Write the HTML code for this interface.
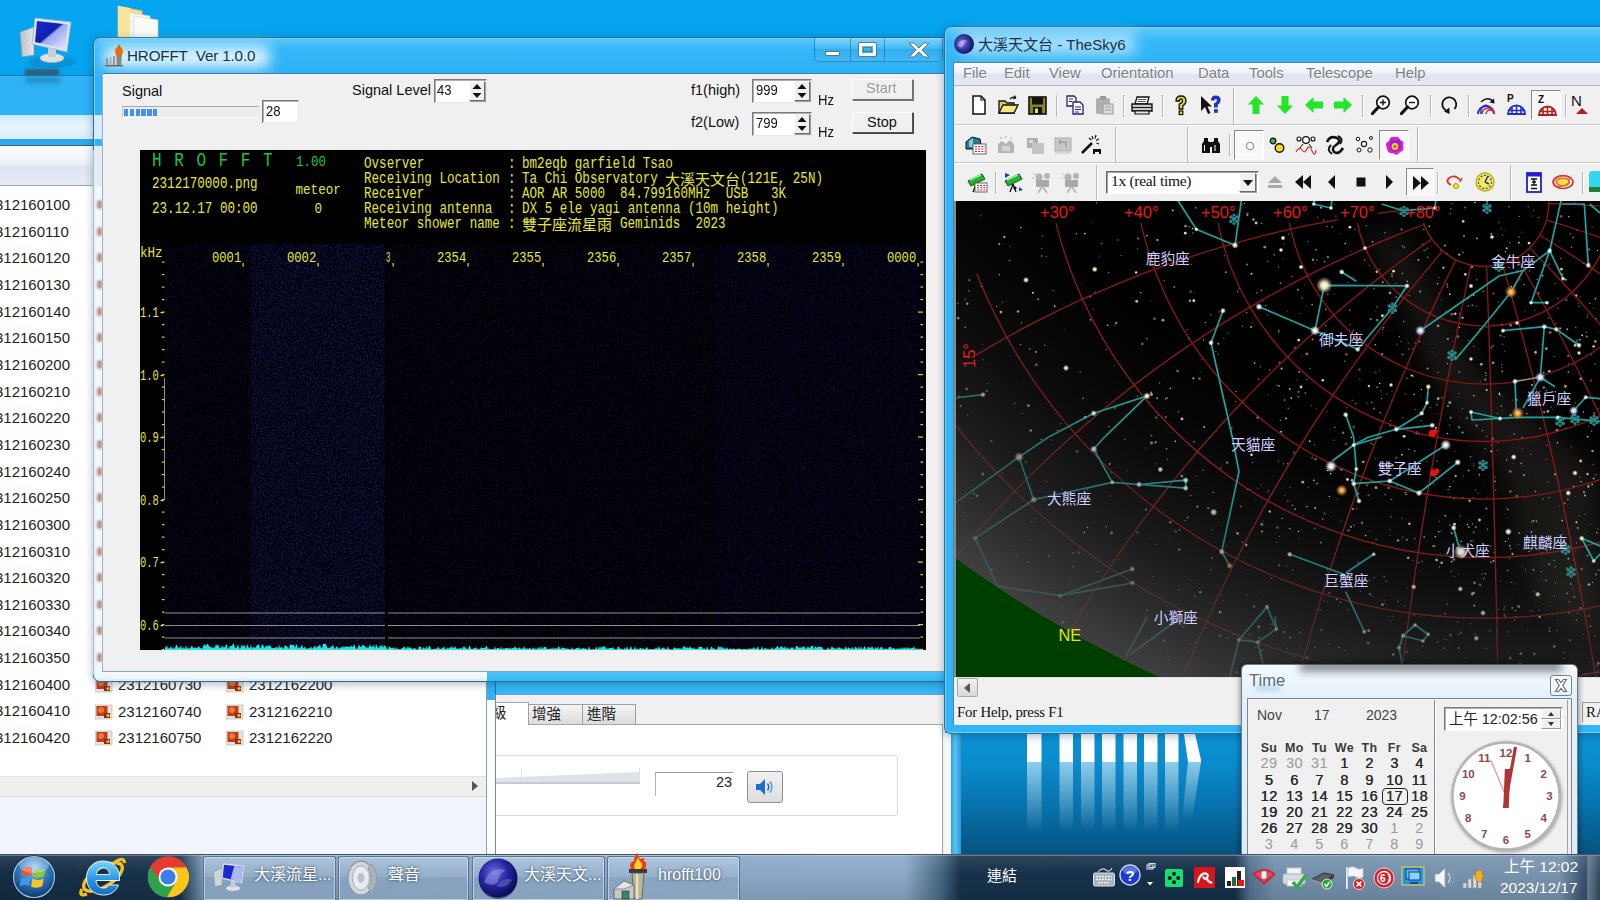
<!DOCTYPE html>
<html lang="zh-Hant">
<head>
<meta charset="utf-8">
<title>Desktop</title>
<style>
*{box-sizing:border-box;margin:0;padding:0}
html,body{width:1600px;height:900px;overflow:hidden}
body{position:relative;background:#05a4ee;font-family:"Liberation Sans","Noto Sans CJK TC",sans-serif;font-size:12px;color:#000}
.abs{position:absolute}
div,span,svg{position:absolute}
.t{white-space:nowrap;line-height:1}
/* generic window frame */
.win{border:1px solid #2a6f96;border-radius:7px;background:#36b6f6;box-shadow:0 0 0 1px rgba(255,255,255,.35) inset,0 2px 8px rgba(0,40,80,.35)}
.client{background:#f0f0f0;border:1px solid #4d86a8}
.sunken{background:#fff;border:1px solid;border-color:#7a7a7a #e8e8e8 #e8e8e8 #7a7a7a;box-shadow:1px 1px 0 #b0b0b0 inset}
.raised{background:#f0f0f0;border:1px solid;border-color:#fff #6d6d6d #6d6d6d #fff;box-shadow:1px 1px 0 #a0a0a0}
.g{font-family:"Liberation Sans","Noto Sans CJK JP",sans-serif}
.mono{font-family:"Liberation Mono","Noto Sans CJK TC",monospace}
.serif{font-family:"Liberation Serif","Noto Serif CJK SC",serif}
</style>
</head>
<body>
<!-- ===== Desktop ===== -->
<div id="desk" style="left:0;top:0;width:1600px;height:900px;background:linear-gradient(#05a4ee 0,#05a4ee 620px,#0b93d6 733px,#0a8bcc 765px,#0873ad 805px,#064f7c 858px,#064f7c 900px)"></div>
<!-- computer icon -->
<svg style="left:14px;top:12px" width="66" height="62" viewBox="0 0 66 62">
  <defs>
    <linearGradient id="scr" x1="0" y1="0" x2="1" y2="1"><stop offset="0" stop-color="#1a2ad0"/><stop offset=".45" stop-color="#1020b0"/><stop offset=".5" stop-color="#9aa8f0"/><stop offset="1" stop-color="#e8ecff"/></linearGradient>
    <linearGradient id="twr" x1="0" y1="0" x2="1" y2="0"><stop offset="0" stop-color="#b9c0c8"/><stop offset="1" stop-color="#e6e8ea"/></linearGradient>
  </defs>
  <ellipse cx="38" cy="50" rx="24" ry="6" fill="#0a7fc0" opacity=".5"/>
  <polygon points="6,20 20,15 20,43 8,45" fill="url(#twr)" stroke="#8d98a5" stroke-width=".8"/>
  <ellipse cx="38" cy="46" rx="12" ry="4.5" fill="#dfe3e6" stroke="#a9b1b8" stroke-width=".8"/>
  <rect x="34" y="36" width="8" height="9" fill="#c9ced3"/>
  <polygon points="21,6 57,10 53,40 18,32" fill="#dfe6f2" stroke="#9fb0c8" stroke-width=".8"/>
  <polygon points="23,9 54,12.5 51,37 21,30" fill="url(#scr)"/>
</svg>
<div style="left:25px;top:69px;width:34px;height:7px;background:#3b4a55;filter:blur(1.5px);opacity:.75"></div>
<!-- folder icon -->
<svg style="left:112px;top:2px" width="52" height="40" viewBox="0 0 52 40">
  <polygon points="6,4 30,9 30,40 6,40" fill="#f6dc8a" stroke="#e2c367" stroke-width=".8"/>
  <polygon points="14,10 38,14 38,40 14,40" fill="#f4f4f0" stroke="#d5d5cf" stroke-width=".6"/>
  <polygon points="22,14 46,18 46,40 22,40" fill="#fbfbf8" stroke="#d5d5cf" stroke-width=".6"/>
  <polygon points="6,4 18,6 18,40 6,40" fill="#f8e49c"/>
</svg>
<!-- wallpaper lower right -->
<svg style="left:1020px;top:720px" width="200" height="130" viewBox="0 0 200 130">
  <defs>
    <linearGradient id="refl" x1="0" y1="0" x2="0" y2="1"><stop offset="0" stop-color="#fff" stop-opacity=".55"/><stop offset="1" stop-color="#fff" stop-opacity="0"/></linearGradient>
  </defs>
  <g fill="#fff">
    <rect x="7" y="0" width="14.5" height="42"/><rect x="39.5" y="0" width="13.5" height="42"/><rect x="61" y="0" width="13.5" height="42"/><rect x="82" y="0" width="13.5" height="42"/><rect x="103.5" y="0" width="13.5" height="42"/><rect x="124" y="0" width="13.5" height="42"/><rect x="145" y="0" width="13.5" height="42"/>
    <polygon points="162,0 172,0 181,40 181,42 168,42"/>
  </g>
  <g fill="url(#refl)">
    <rect x="7" y="42" width="14.5" height="70"/><rect x="39.5" y="42" width="13.5" height="70"/><rect x="61" y="42" width="13.5" height="70"/><rect x="82" y="42" width="13.5" height="70"/><rect x="103.5" y="42" width="13.5" height="70"/><rect x="124" y="42" width="13.5" height="70"/><rect x="145" y="42" width="13.5" height="70"/>
    <polygon points="168,42 181,42 172,100 162,100"/>
  </g>
</svg>
<!-- ===== Sound dialog (behind explorer) ===== -->
<div id="snd" style="left:487px;top:681px;width:466px;height:180px;background:#35b8f7;border-top:1px solid #2a7fae"></div>
<div style="left:495px;top:694px;width:450px;height:165px;background:#f0f0f0;border-top:1px solid #7a9db5"></div>
<div style="left:495px;top:724px;width:448px;height:135px;background:#fff;border-top:1px solid #a6a6a6;border-right:1px solid #a6a6a6"></div>
<div style="left:945px;top:733px;width:6px;height:122px;background:#f4f8fb"></div>
<div style="left:951px;top:733px;width:10px;height:122px;background:linear-gradient(90deg,#2c9edb,#58c2f5 40%,#2a9cd8)"></div>
<!-- tabs -->
<div style="left:495px;top:702px;width:34px;height:23px;background:#fff;border:1px solid #a6a6a6;border-bottom:none"></div>
<div class="t" style="left:492px;top:706px;font-size:14.5px;color:#222">級</div>
<div style="left:528px;top:704px;width:55px;height:20px;background:linear-gradient(#f4f4f4,#dcdcdc);border:1px solid #a0a0a0;border-bottom:none"></div>
<div class="t" style="left:532px;top:707px;font-size:14.5px;color:#222">增強</div>
<div style="left:582px;top:704px;width:54px;height:20px;background:linear-gradient(#f4f4f4,#dcdcdc);border:1px solid #a0a0a0;border-bottom:none"></div>
<div class="t" style="left:587px;top:707px;font-size:14.5px;color:#222">進階</div>
<!-- group box -->
<div style="left:480px;top:755px;width:418px;height:61px;border:1px solid #dcdcdc;border-radius:3px"></div>
<svg style="left:495px;top:766px" width="150" height="24" viewBox="0 0 150 24"><polygon points="0,12 145,6 145,16 0,16" fill="#dde3e8"/><rect x="0" y="16" width="145" height="2" fill="#c4ccd2"/><rect x="26" y="3" width="1" height="10" fill="#dde3e8"/><rect x="144" y="2" width="1" height="12" fill="#dde3e8"/></svg>
<div style="left:655px;top:772px;width:78px;height:24px;background:#fff;border-top:1px solid #9a9a9a;border-left:1px solid #b5b5b5"></div>
<div class="t" style="left:716px;top:775px;font-size:14.5px;color:#222">23</div>
<div style="left:747px;top:771px;width:36px;height:32px;background:linear-gradient(#f2f2f2,#dddddd);border:1px solid #8e8f8f;border-radius:3px"></div>
<svg style="left:754px;top:777px" width="22" height="20" viewBox="0 0 22 20"><polygon points="2,7 6,7 11,2 11,18 6,13 2,13" fill="#1c6fd0"/><path d="M13.5 6.5 Q16 10 13.5 13.5" stroke="#1c6fd0" stroke-width="1.6" fill="none"/><path d="M16 4.5 Q20 10 16 15.5" stroke="#4a93e6" stroke-width="1.4" fill="none"/></svg>

<!-- ===== Explorer window (left) ===== -->
<div id="exp" style="left:-20px;top:75px;width:516px;height:800px;background:#2fb2f6;border:1px solid #1d74a6;border-radius:7px"></div>
<div id="lblshadow" style="left:26px;top:77px;width:34px;height:6px;background:#1a6a9a;filter:blur(2.5px);opacity:.55"></div>
<div style="left:0;top:115px;width:487px;height:24px;background:linear-gradient(#cfeafb,#e9f5fd 50%,#d6edfb)"></div>
<div style="left:0;top:139px;width:487px;height:6px;background:#2fa9ea"></div>
<div style="left:0;top:145px;width:487px;height:1px;background:#3a5f7a"></div>
<div style="left:0;top:146px;width:487px;height:39px;background:linear-gradient(#fbfcfe,#eef1f8 45%,#dfe5f2 55%,#e6ebf5)"></div>
<div style="left:0;top:185px;width:487px;height:1px;background:#9aa5b8"></div>
<div style="left:0;top:186px;width:487px;height:590px;background:#fff"></div>
<div style="left:487px;top:700px;width:8px;height:160px;background:#fbfdff"></div>
<div style="left:495px;top:694px;width:1px;height:166px;background:#6d8aa0"></div>
<!-- h-scrollbar -->
<div style="left:0;top:776px;width:487px;height:21px;background:#efefef;border-top:1px solid #e3e3e3;border-bottom:1px solid #dcdcdc"></div>
<svg style="left:470px;top:780px" width="10" height="12"><polygon points="2,1 8,6 2,11" fill="#555"/></svg>
<!-- details pane -->
<div style="left:0;top:797px;width:487px;height:63px;background:#f1f5fb"></div>
<div style="left:486px;top:186px;width:1px;height:674px;background:#8aa2b5"></div>
<div class="t" style="left:-13.4px;top:197.0px;font-size:15px;color:#1e1e1e">2312160100</div>
<div class="t" style="left:-13.4px;top:223.7px;font-size:15px;color:#1e1e1e">2312160110</div>
<div class="t" style="left:-13.4px;top:250.3px;font-size:15px;color:#1e1e1e">2312160120</div>
<div class="t" style="left:-13.4px;top:276.9px;font-size:15px;color:#1e1e1e">2312160130</div>
<div class="t" style="left:-13.4px;top:303.6px;font-size:15px;color:#1e1e1e">2312160140</div>
<div class="t" style="left:-13.4px;top:330.2px;font-size:15px;color:#1e1e1e">2312160150</div>
<div class="t" style="left:-13.4px;top:356.9px;font-size:15px;color:#1e1e1e">2312160200</div>
<div class="t" style="left:-13.4px;top:383.5px;font-size:15px;color:#1e1e1e">2312160210</div>
<div class="t" style="left:-13.4px;top:410.2px;font-size:15px;color:#1e1e1e">2312160220</div>
<div class="t" style="left:-13.4px;top:436.9px;font-size:15px;color:#1e1e1e">2312160230</div>
<div class="t" style="left:-13.4px;top:463.5px;font-size:15px;color:#1e1e1e">2312160240</div>
<div class="t" style="left:-13.4px;top:490.1px;font-size:15px;color:#1e1e1e">2312160250</div>
<div class="t" style="left:-13.4px;top:516.8px;font-size:15px;color:#1e1e1e">2312160300</div>
<div class="t" style="left:-13.4px;top:543.5px;font-size:15px;color:#1e1e1e">2312160310</div>
<div class="t" style="left:-13.4px;top:570.1px;font-size:15px;color:#1e1e1e">2312160320</div>
<div class="t" style="left:-13.4px;top:596.8px;font-size:15px;color:#1e1e1e">2312160330</div>
<div class="t" style="left:-13.4px;top:623.4px;font-size:15px;color:#1e1e1e">2312160340</div>
<div class="t" style="left:-13.4px;top:650.0px;font-size:15px;color:#1e1e1e">2312160350</div>
<div class="t" style="left:-13.4px;top:676.7px;font-size:15px;color:#1e1e1e">2312160400</div>
<div class="t" style="left:-13.4px;top:703.3px;font-size:15px;color:#1e1e1e">2312160410</div>
<div class="t" style="left:-13.4px;top:730.0px;font-size:15px;color:#1e1e1e">2312160420</div>
<svg style="left:95px;top:677.0px" width="18" height="16" viewBox="0 0 18 16"><rect x="0" y="1" width="17" height="14" fill="#e9e4da" stroke="#b9b0a0" stroke-width=".6"/><rect x="1.5" y="2" width="11" height="10" fill="#c0392b"/><circle cx="6" cy="6" r="3" fill="#e67e22"/><rect x="9" y="9" width="6" height="5" fill="#8e2b1e"/><circle cx="13" cy="11.5" r="1.6" fill="#f1c40f"/></svg>
<div class="t" style="left:118px;top:677.0px;font-size:15px;color:#1e1e1e">2312160730</div>
<svg style="left:226px;top:677.0px" width="18" height="16" viewBox="0 0 18 16"><rect x="0" y="1" width="17" height="14" fill="#e9e4da" stroke="#b9b0a0" stroke-width=".6"/><rect x="1.5" y="2" width="11" height="10" fill="#c0392b"/><circle cx="6" cy="6" r="3" fill="#e67e22"/><rect x="9" y="9" width="6" height="5" fill="#8e2b1e"/><circle cx="13" cy="11.5" r="1.6" fill="#f1c40f"/></svg>
<div class="t" style="left:249px;top:677.0px;font-size:15px;color:#1e1e1e">2312162200</div>
<svg style="left:95px;top:703.6px" width="18" height="16" viewBox="0 0 18 16"><rect x="0" y="1" width="17" height="14" fill="#e9e4da" stroke="#b9b0a0" stroke-width=".6"/><rect x="1.5" y="2" width="11" height="10" fill="#c0392b"/><circle cx="6" cy="6" r="3" fill="#e67e22"/><rect x="9" y="9" width="6" height="5" fill="#8e2b1e"/><circle cx="13" cy="11.5" r="1.6" fill="#f1c40f"/></svg>
<div class="t" style="left:118px;top:703.6px;font-size:15px;color:#1e1e1e">2312160740</div>
<svg style="left:226px;top:703.6px" width="18" height="16" viewBox="0 0 18 16"><rect x="0" y="1" width="17" height="14" fill="#e9e4da" stroke="#b9b0a0" stroke-width=".6"/><rect x="1.5" y="2" width="11" height="10" fill="#c0392b"/><circle cx="6" cy="6" r="3" fill="#e67e22"/><rect x="9" y="9" width="6" height="5" fill="#8e2b1e"/><circle cx="13" cy="11.5" r="1.6" fill="#f1c40f"/></svg>
<div class="t" style="left:249px;top:703.6px;font-size:15px;color:#1e1e1e">2312162210</div>
<svg style="left:95px;top:730.3px" width="18" height="16" viewBox="0 0 18 16"><rect x="0" y="1" width="17" height="14" fill="#e9e4da" stroke="#b9b0a0" stroke-width=".6"/><rect x="1.5" y="2" width="11" height="10" fill="#c0392b"/><circle cx="6" cy="6" r="3" fill="#e67e22"/><rect x="9" y="9" width="6" height="5" fill="#8e2b1e"/><circle cx="13" cy="11.5" r="1.6" fill="#f1c40f"/></svg>
<div class="t" style="left:118px;top:730.3px;font-size:15px;color:#1e1e1e">2312160750</div>
<svg style="left:226px;top:730.3px" width="18" height="16" viewBox="0 0 18 16"><rect x="0" y="1" width="17" height="14" fill="#e9e4da" stroke="#b9b0a0" stroke-width=".6"/><rect x="1.5" y="2" width="11" height="10" fill="#c0392b"/><circle cx="6" cy="6" r="3" fill="#e67e22"/><rect x="9" y="9" width="6" height="5" fill="#8e2b1e"/><circle cx="13" cy="11.5" r="1.6" fill="#f1c40f"/></svg>
<div class="t" style="left:249px;top:730.3px;font-size:15px;color:#1e1e1e">2312162220</div>
<!-- ===== HROFFT window ===== -->
<div id="hro" class="win" style="left:93px;top:37px;width:862px;height:645px;background:#30b4f7"></div>
<div style="left:95px;top:39px;width:858px;height:34px;border-radius:6px 6px 0 0;background:linear-gradient(#5ac6fa 0,#36b7f8 30%,#2db2f6 100%)"></div>
<div style="left:104px;top:46px;width:165px;height:22px;background:#fff;filter:blur(7px);opacity:.85"></div>
<!-- glass frame showing what is behind -->
<div style="left:94px;top:115px;width:8px;height:24px;background:#d6ecfa"></div>
<div style="left:94px;top:146px;width:8px;height:40px;background:#e6ecf6"></div>
<div style="left:94px;top:186px;width:8px;height:488px;background:linear-gradient(90deg,#e4eef6,#f6f9fb 40%,#f3f7fa)"></div>
<div style="left:94px;top:672px;width:393px;height:9px;border-radius:0 0 0 6px;background:linear-gradient(#f5f8fa,#f0f5f9 60%,#dfe9f1)"></div>
<div style="left:487px;top:672px;width:460px;height:9px;background:linear-gradient(#4cc3f9,#33b6f6)"></div>
<div class="peek" style="left:96.5px;top:200.0px;width:5px;height:9px;background:#a87868;border-radius:3px;filter:blur(1.2px);opacity:.8"></div>
<div class="peek" style="left:96.5px;top:226.7px;width:5px;height:9px;background:#a87868;border-radius:3px;filter:blur(1.2px);opacity:.8"></div>
<div class="peek" style="left:96.5px;top:253.3px;width:5px;height:9px;background:#a87868;border-radius:3px;filter:blur(1.2px);opacity:.8"></div>
<div class="peek" style="left:96.5px;top:279.9px;width:5px;height:9px;background:#a87868;border-radius:3px;filter:blur(1.2px);opacity:.8"></div>
<div class="peek" style="left:96.5px;top:306.6px;width:5px;height:9px;background:#a87868;border-radius:3px;filter:blur(1.2px);opacity:.8"></div>
<div class="peek" style="left:96.5px;top:333.2px;width:5px;height:9px;background:#a87868;border-radius:3px;filter:blur(1.2px);opacity:.8"></div>
<div class="peek" style="left:96.5px;top:359.9px;width:5px;height:9px;background:#a87868;border-radius:3px;filter:blur(1.2px);opacity:.8"></div>
<div class="peek" style="left:96.5px;top:386.5px;width:5px;height:9px;background:#a87868;border-radius:3px;filter:blur(1.2px);opacity:.8"></div>
<div class="peek" style="left:96.5px;top:413.2px;width:5px;height:9px;background:#a87868;border-radius:3px;filter:blur(1.2px);opacity:.8"></div>
<div class="peek" style="left:96.5px;top:439.9px;width:5px;height:9px;background:#a87868;border-radius:3px;filter:blur(1.2px);opacity:.8"></div>
<div class="peek" style="left:96.5px;top:466.5px;width:5px;height:9px;background:#a87868;border-radius:3px;filter:blur(1.2px);opacity:.8"></div>
<div class="peek" style="left:96.5px;top:493.1px;width:5px;height:9px;background:#a87868;border-radius:3px;filter:blur(1.2px);opacity:.8"></div>
<div class="peek" style="left:96.5px;top:519.8px;width:5px;height:9px;background:#a87868;border-radius:3px;filter:blur(1.2px);opacity:.8"></div>
<div class="peek" style="left:96.5px;top:546.5px;width:5px;height:9px;background:#a87868;border-radius:3px;filter:blur(1.2px);opacity:.8"></div>
<div class="peek" style="left:96.5px;top:573.1px;width:5px;height:9px;background:#a87868;border-radius:3px;filter:blur(1.2px);opacity:.8"></div>
<div class="peek" style="left:96.5px;top:599.8px;width:5px;height:9px;background:#a87868;border-radius:3px;filter:blur(1.2px);opacity:.8"></div>
<div class="peek" style="left:96.5px;top:626.4px;width:5px;height:9px;background:#a87868;border-radius:3px;filter:blur(1.2px);opacity:.8"></div>
<div class="peek" style="left:96.5px;top:653.0px;width:5px;height:9px;background:#a87868;border-radius:3px;filter:blur(1.2px);opacity:.8"></div>
<div id="edgeL" style="left:93px;top:150px;width:1px;height:525px;background:#a9bfce"></div>
<div style="left:100px;top:672.5px;width:390px;height:1px;background:transparent"></div>
<!-- app icon -->
<svg style="left:104px;top:44px" width="22" height="24" viewBox="0 0 22 24"><rect x="2" y="14" width="2" height="8" fill="#9a9a8a"/><rect x="5.5" y="13" width="2" height="9" fill="#b0b0a0"/><rect x="9" y="12" width="2" height="10" fill="#9a9a8a"/><polygon points="12,10 18,10 17,22 13,22" fill="#8a8878"/><ellipse cx="15" cy="7.5" rx="4" ry="4.5" fill="#f26a10"/><polygon points="15,0 17,4 13,4" fill="#e85a00"/><rect x="1" y="21" width="18" height="1.5" fill="#6a6a60"/></svg>
<div class="t" style="left:127px;top:48px;font-size:15.2px;color:#17324a;letter-spacing:-.15px">HROFFT&nbsp; Ver 1.0.0</div>
<!-- caption buttons -->
<div style="left:814px;top:38px;width:129px;height:24px;border:1px solid rgba(20,90,140,.55);border-top:none;border-radius:0 0 5px 5px;background:linear-gradient(rgba(255,255,255,.22),rgba(255,255,255,.05) 45%,rgba(0,80,140,.08) 50%,rgba(255,255,255,.08))"></div>
<div style="left:850px;top:38px;width:1px;height:23px;background:rgba(20,90,140,.5)"></div>
<div style="left:884px;top:38px;width:1px;height:23px;background:rgba(20,90,140,.5)"></div>
<div style="left:825px;top:51px;width:15px;height:5px;background:#fff;border:1px solid #5a7890;border-radius:1px"></div>
<div style="left:859px;top:43px;width:17px;height:13px;background:transparent;border:3.5px solid #fff;outline:1px solid #5a7890;border-radius:1px"></div>
<div style="left:863px;top:47px;width:9px;height:5px;border:1px solid #5a7890"></div>
<svg style="left:905px;top:41px" width="28" height="18" viewBox="0 0 28 18"><path d="M4 2 L9 2 L14 7 L19 2 L24 2 L17 9 L24 16 L19 16 L14 11 L9 16 L4 16 L11 9 Z" fill="#fff" stroke="#5a7890" stroke-width="1"/></svg>
<!-- client -->
<div class="client" style="left:102px;top:73px;width:845px;height:599px;border-color:#3e7ea5 #3e7ea5 #8aa6ba #9ab2c4"></div>
<!-- controls row -->
<div class="t g" style="left:122px;top:84px;font-size:14.5px;color:#111">Signal</div>
<div style="left:122px;top:106px;width:137px;height:12px;border-top:1px solid #a8a8a8;border-left:1px solid #c8c8c8;border-bottom:1px solid #fff;background:#ececec"></div>
<div style="left:124px;top:109px;width:34.5px;height:7px;background:repeating-linear-gradient(90deg,#4690f0 0,#4690f0 4.3px,#e8eefc 4.3px,#e8eefc 5.8px)"></div>
<div class="sunken" style="left:262px;top:100px;width:37px;height:23px"></div>
<div class="t g" style="left:266px;top:104px;font-size:14.5px;color:#111;transform:scaleX(.9);transform-origin:left">28</div>
<div class="t g" style="left:352px;top:83px;font-size:14.5px;color:#111">Signal Level</div>
<div class="sunken" style="left:434px;top:79px;width:53px;height:24px"></div>
<div class="t g" style="left:437px;top:83px;font-size:14.5px;color:#111;transform:scaleX(.9);transform-origin:left">43</div>
<div class="raised" style="left:469px;top:81px;width:16px;height:20px"></div>
<svg style="left:471px;top:83px" width="12" height="16"><polygon points="6,1 10.5,6 1.5,6" fill="#111"/><polygon points="6,15 10.5,10 1.5,10" fill="#111"/></svg>

<div class="t g" style="left:691px;top:83px;font-size:14.5px;color:#111">f1(high)</div>
<div class="sunken" style="left:752px;top:79px;width:60px;height:24px"></div>
<div class="t g" style="left:756px;top:83px;font-size:14.5px;color:#111;transform:scaleX(.9);transform-origin:left">999</div>
<div class="raised" style="left:794px;top:81px;width:16px;height:20px"></div>
<svg style="left:796px;top:83px" width="12" height="16"><polygon points="6,1 10.5,6 1.5,6" fill="#111"/><polygon points="6,15 10.5,10 1.5,10" fill="#111"/></svg>
<div class="t g" style="left:818px;top:93px;font-size:14.5px;color:#111;transform:scaleX(.9);transform-origin:left">Hz</div>

<div class="t g" style="left:691px;top:115px;font-size:14.5px;color:#111">f2(Low)</div>
<div class="sunken" style="left:752px;top:112px;width:60px;height:24px"></div>
<div class="t g" style="left:756px;top:116px;font-size:14.5px;color:#111;transform:scaleX(.9);transform-origin:left">799</div>
<div class="raised" style="left:794px;top:114px;width:16px;height:20px"></div>
<svg style="left:796px;top:116px" width="12" height="16"><polygon points="6,1 10.5,6 1.5,6" fill="#111"/><polygon points="6,15 10.5,10 1.5,10" fill="#111"/></svg>
<div class="t g" style="left:818px;top:125px;font-size:14.5px;color:#111;transform:scaleX(.9);transform-origin:left">Hz</div>

<div class="raised" style="left:852px;top:79px;width:61px;height:21px;box-shadow:1px 1px 0 #777"></div>
<div class="t g" style="left:866px;top:81px;font-size:14.5px;color:#9a9a9a;text-shadow:1px 1px 0 #fff">Start</div>
<div class="raised" style="left:852px;top:112px;width:61px;height:21px;box-shadow:1px 1px 0 #444;border-color:#fff #555 #555 #fff"></div>
<div class="t g" style="left:867px;top:115px;font-size:14.5px;color:#111">Stop</div>
<!-- spectrogram -->
<svg style="left:140px;top:150px" width="786" height="500" viewBox="0 0 786 500">
<defs>
<filter id="nz1" x="0" y="0" width="100%" height="100%" color-interpolation-filters="sRGB"><feTurbulence type="fractalNoise" baseFrequency="0.6" numOctaves="2" seed="3"/><feColorMatrix type="matrix" values="0.1 0 0 0 -0.045  0.1 0 0 0 -0.045  0.95 0 0 0 -0.47  0 0 0 0 1"/><feGaussianBlur stdDeviation="0.6"/></filter>
<filter id="nz2" x="0" y="0" width="100%" height="100%" color-interpolation-filters="sRGB"><feTurbulence type="fractalNoise" baseFrequency="0.6" numOctaves="2" seed="11"/><feColorMatrix type="matrix" values="0.1 0 0 0 -0.045  0.1 0 0 0 -0.045  0.9 0 0 0 -0.45  0 0 0 0 1"/><feGaussianBlur stdDeviation="0.6"/></filter>
<filter id="nz3" x="0" y="0" width="100%" height="100%" color-interpolation-filters="sRGB"><feTurbulence type="fractalNoise" baseFrequency="0.6" numOctaves="2" seed="5"/><feColorMatrix type="matrix" values="0.18 0 0 0 -0.07  0.18 0 0 0 -0.07  1.25 0 0 0 -0.535  0 0 0 0 1"/><feGaussianBlur stdDeviation="0.6"/></filter>
<filter id="nz4" x="0" y="0" width="100%" height="100%" color-interpolation-filters="sRGB"><feTurbulence type="fractalNoise" baseFrequency="0.6" numOctaves="2" seed="23"/><feColorMatrix type="matrix" values="0.1 0 0 0 -0.045  0.1 0 0 0 -0.045  1.0 0 0 0 -0.47  0 0 0 0 1"/><feGaussianBlur stdDeviation="0.6"/></filter>
</defs>
<rect width="786" height="500" fill="#000"/>
<rect x="25" y="94" width="86" height="401" filter="url(#nz1)"/>
<rect x="111" y="94" width="134" height="401" filter="url(#nz3)"/>
<rect x="248" y="94" width="325" height="401" filter="url(#nz2)"/>
<rect x="574" y="94" width="207" height="401" filter="url(#nz4)"/>
<rect x="24" y="228" width="1" height="122" fill="#909090"/>
<rect x="25" y="462.5" width="220" height="1" fill="#909090"/><rect x="248" y="462.5" width="532" height="1" fill="#909090"/>
<rect x="25" y="475.0" width="220" height="1" fill="#909090"/><rect x="248" y="475.0" width="532" height="1" fill="#909090"/>
<rect x="25" y="487.5" width="220" height="1" fill="#909090"/><rect x="248" y="487.5" width="532" height="1" fill="#909090"/>
<polygon points="25,500 25,496.0 26,498.0 27,495.0 28,499.0 29,498.0 30,498.0 31,496.0 32,499.0 33,497.0 34,499.0 35,498.0 36,495.0 37,495.0 38,498.0 39,497.0 40,498.0 41,495.0 42,499.0 43,498.0 44,497.0 45,499.0 46,495.0 47,499.0 48,497.0 49,499.0 50,498.0 51,497.0 52,495.0 53,498.0 54,498.0 55,497.0 56,498.0 57,498.0 58,497.0 59,496.0 60,498.0 61,498.0 62,499.0 63,497.0 64,494.0 65,495.0 66,496.0 67,494.0 68,494.0 69,496.0 70,497.0 71,497.0 72,498.0 73,497.0 74,498.0 75,497.0 76,494.0 77,496.0 78,494.0 79,497.0 80,498.0 81,498.0 82,495.0 83,498.0 84,496.0 85,498.0 86,494.0 87,495.0 88,499.0 89,498.0 90,496.0 91,496.0 92,496.0 93,494.0 94,494.0 95,498.0 96,498.0 97,497.0 98,494.0 99,498.0 100,499.0 101,497.0 102,494.0 103,497.0 104,495.0 105,496.0 106,499.0 107,494.0 108,496.0 109,498.0 110,498.0 111,494.0 112,499.0 113,497.0 114,497.0 115,498.0 116,497.0 117,495.0 118,495.0 119,494.0 120,498.0 121,498.0 122,494.0 123,495.0 124,497.0 125,498.0 126,495.0 127,497.0 128,495.0 129,496.0 130,495.0 131,497.0 132,498.0 133,498.0 134,498.0 135,498.0 136,497.0 137,497.0 138,499.0 139,494.0 140,498.0 141,497.0 142,497.0 143,499.0 144,498.0 145,495.0 146,496.0 147,496.0 148,498.0 149,499.0 150,494.0 151,495.0 152,495.0 153,495.0 154,495.0 155,498.0 156,494.0 157,495.0 158,499.0 159,497.0 160,498.0 161,497.0 162,494.0 163,498.0 164,498.0 165,496.0 166,499.0 167,498.0 168,499.0 169,498.0 170,498.0 171,496.0 172,499.0 173,498.0 174,497.0 175,495.0 176,498.0 177,497.0 178,496.0 179,496.0 180,494.0 181,498.0 182,498.0 183,494.0 184,494.0 185,494.0 186,494.0 187,497.0 188,498.0 189,498.0 190,498.0 191,496.0 192,497.0 193,494.0 194,498.0 195,499.0 196,497.0 197,496.0 198,498.0 199,499.0 200,497.0 201,498.0 202,497.0 203,496.0 204,498.0 205,496.0 206,497.0 207,496.0 208,497.0 209,497.0 210,497.0 211,495.0 212,497.0 213,497.0 214,494.0 215,496.0 216,499.0 217,499.0 218,497.0 219,494.0 220,497.0 221,497.0 222,496.0 223,494.0 224,496.0 225,496.0 226,498.0 227,497.0 228,498.0 229,497.0 230,494.0 231,497.0 232,496.0 233,497.0 234,494.0 235,499.0 236,494.0 237,496.0 238,498.0 239,498.0 240,495.0 241,497.0 242,494.0 243,498.0 244,495.0 245,496.0 246,497.0 247,499.0 248,499.5 249,496.0 250,497.0 251,498.0 252,498.0 253,498.0 254,497.0 255,499.5 256,497.0 257,499.0 258,499.0 259,499.0 260,499.5 261,499.0 262,498.0 263,498.0 264,496.0 265,497.0 266,499.0 267,498.0 268,496.0 269,498.0 270,498.0 271,497.0 272,499.0 273,499.0 274,498.0 275,498.0 276,499.0 277,499.5 278,499.5 279,496.0 280,497.0 281,497.0 282,499.5 283,498.0 284,497.0 285,499.0 286,498.0 287,496.0 288,499.0 289,496.0 290,496.0 291,499.0 292,499.5 293,499.0 294,499.0 295,499.0 296,498.0 297,499.0 298,496.0 299,498.0 300,499.0 301,499.0 302,498.0 303,498.0 304,496.0 305,499.0 306,499.5 307,497.0 308,499.0 309,498.0 310,497.0 311,498.0 312,496.0 313,498.0 314,498.0 315,496.0 316,498.0 317,499.0 318,498.0 319,499.0 320,498.0 321,498.0 322,499.5 323,496.0 324,498.0 325,496.0 326,499.0 327,498.0 328,499.5 329,496.0 330,496.0 331,499.0 332,499.0 333,499.0 334,498.0 335,498.0 336,497.0 337,499.5 338,498.0 339,499.5 340,499.0 341,497.0 342,498.0 343,498.0 344,498.0 345,498.0 346,496.0 347,496.0 348,499.5 349,498.0 350,499.5 351,499.0 352,499.0 353,499.0 354,499.5 355,496.0 356,499.5 357,498.0 358,498.0 359,498.0 360,499.5 361,496.0 362,499.5 363,498.0 364,499.0 365,498.0 366,498.0 367,498.0 368,498.0 369,499.0 370,497.0 371,499.0 372,498.0 373,498.0 374,498.0 375,496.0 376,498.0 377,498.0 378,499.0 379,497.0 380,498.0 381,499.0 382,498.0 383,499.0 384,496.0 385,498.0 386,499.0 387,498.0 388,499.5 389,498.0 390,498.0 391,499.0 392,499.5 393,497.0 394,499.0 395,498.0 396,499.5 397,499.0 398,497.0 399,499.0 400,496.0 401,499.5 402,496.0 403,499.0 404,497.0 405,497.0 406,497.0 407,499.0 408,499.0 409,499.0 410,499.0 411,498.0 412,499.0 413,497.0 414,499.5 415,498.0 416,498.0 417,499.0 418,497.0 419,496.0 420,499.0 421,499.0 422,497.0 423,498.0 424,498.0 425,498.0 426,499.0 427,498.0 428,499.0 429,499.0 430,499.0 431,499.5 432,497.0 433,499.0 434,499.5 435,499.0 436,498.0 437,498.0 438,498.0 439,497.0 440,499.5 441,498.0 442,499.0 443,498.0 444,498.0 445,499.0 446,498.0 447,499.5 448,499.5 449,496.0 450,499.0 451,499.5 452,499.5 453,499.0 454,499.0 455,499.5 456,496.0 457,499.0 458,499.0 459,496.0 460,499.0 461,496.0 462,498.0 463,496.0 464,497.0 465,496.0 466,499.0 467,498.0 468,499.0 469,498.0 470,498.0 471,498.0 472,498.0 473,497.0 474,499.0 475,499.5 476,499.0 477,499.5 478,496.0 479,497.0 480,499.0 481,498.0 482,499.5 483,499.0 484,499.5 485,497.0 486,499.5 487,496.0 488,499.0 489,499.5 490,498.0 491,496.0 492,499.0 493,499.5 494,499.0 495,496.0 496,499.5 497,498.0 498,499.5 499,499.0 500,498.0 501,498.0 502,499.0 503,498.0 504,499.0 505,499.5 506,498.0 507,497.0 508,499.0 509,499.5 510,499.0 511,499.0 512,499.5 513,499.0 514,499.0 515,499.0 516,497.0 517,499.0 518,498.0 519,496.0 520,499.0 521,499.0 522,498.0 523,498.0 524,497.0 525,499.0 526,499.0 527,499.0 528,496.0 529,499.5 530,499.0 531,499.5 532,499.5 533,499.5 534,497.0 535,498.0 536,498.0 537,499.0 538,498.0 539,498.0 540,499.0 541,498.0 542,499.5 543,497.0 544,496.0 545,497.0 546,498.0 547,497.0 548,498.0 549,498.0 550,496.0 551,498.0 552,498.0 553,499.0 554,497.0 555,499.0 556,499.0 557,499.0 558,499.0 559,496.0 560,497.0 561,497.0 562,497.0 563,499.0 564,498.0 565,499.0 566,499.5 567,496.0 568,499.0 569,499.5 570,499.5 571,497.0 572,497.0 573,499.0 574,498.0 575,499.0 576,499.5 577,499.5 578,497.0 579,496.0 580,498.0 581,496.0 582,498.0 583,497.0 584,499.0 585,498.0 586,499.0 587,497.0 588,499.0 589,499.5 590,498.0 591,499.0 592,499.0 593,499.0 594,498.0 595,499.5 596,499.0 597,499.0 598,499.0 599,498.0 600,499.0 601,499.0 602,499.5 603,499.0 604,499.0 605,499.0 606,499.0 607,499.5 608,499.0 609,498.0 610,499.5 611,498.0 612,499.0 613,498.0 614,497.0 615,499.0 616,499.0 617,498.0 618,496.0 619,499.5 620,499.5 621,499.0 622,496.0 623,499.5 624,499.0 625,498.0 626,498.0 627,499.5 628,498.0 629,499.5 630,499.0 631,499.0 632,497.0 633,499.0 634,499.5 635,498.0 636,498.0 637,496.0 638,496.0 639,499.0 640,497.0 641,497.0 642,496.0 643,498.0 644,498.0 645,496.0 646,499.0 647,497.0 648,498.0 649,499.0 650,499.0 651,497.0 652,498.0 653,497.0 654,499.0 655,499.5 656,496.0 657,496.0 658,497.0 659,498.0 660,497.0 661,498.0 662,497.0 663,497.0 664,496.0 665,498.0 666,499.0 667,498.0 668,496.0 669,498.0 670,498.0 671,496.0 672,496.0 673,496.0 674,499.5 675,496.0 676,497.0 677,498.0 678,496.0 679,497.0 680,497.0 681,497.0 682,497.0 683,499.0 684,499.5 685,499.5 686,499.5 687,499.0 688,497.0 689,499.0 690,499.5 691,498.0 692,496.0 693,498.0 694,498.0 695,499.5 696,497.0 697,499.5 698,497.0 699,498.0 700,497.0 701,499.0 702,498.0 703,499.0 704,499.5 705,498.0 706,496.0 707,499.5 708,497.0 709,498.0 710,498.0 711,499.5 712,497.0 713,498.0 714,499.5 715,497.0 716,497.0 717,498.0 718,499.0 719,496.0 720,499.5 721,496.0 722,499.0 723,499.0 724,497.0 725,496.0 726,499.0 727,499.0 728,497.0 729,497.0 730,498.0 731,498.0 732,496.0 733,498.0 734,499.5 735,498.0 736,497.0 737,499.0 738,496.0 739,499.5 740,498.0 741,497.0 742,497.0 743,499.0 744,499.5 745,498.0 746,499.0 747,499.0 748,499.0 749,497.0 750,497.0 751,497.0 752,499.0 753,498.0 754,498.0 755,499.0 756,499.5 757,498.0 758,499.5 759,498.0 760,499.0 761,497.0 762,499.5 763,497.0 764,499.0 765,497.0 766,498.0 767,499.0 768,497.0 769,498.0 770,499.0 771,498.0 772,498.0 773,498.0 774,496.0 775,499.5 776,498.0 777,499.0 778,499.0 779,499.5 780,498.0 781,499.5 781,500" fill="#19e6e6"/>
<rect x="22" y="111.5" width="2.5" height="1.2" fill="#d8d820"/><rect x="22" y="124.0" width="2.5" height="1.2" fill="#d8d820"/><rect x="22" y="136.5" width="2.5" height="1.2" fill="#d8d820"/><rect x="22" y="149.0" width="2.5" height="1.2" fill="#d8d820"/><rect x="22" y="161.5" width="2.5" height="1.2" fill="#d8d820"/><rect x="22" y="174.0" width="2.5" height="1.2" fill="#d8d820"/><rect x="22" y="186.5" width="2.5" height="1.2" fill="#d8d820"/><rect x="22" y="199.0" width="2.5" height="1.2" fill="#d8d820"/><rect x="22" y="211.5" width="2.5" height="1.2" fill="#d8d820"/><rect x="22" y="224.0" width="2.5" height="1.2" fill="#d8d820"/><rect x="22" y="236.5" width="2.5" height="1.2" fill="#d8d820"/><rect x="22" y="249.0" width="2.5" height="1.2" fill="#d8d820"/><rect x="22" y="261.5" width="2.5" height="1.2" fill="#d8d820"/><rect x="22" y="274.0" width="2.5" height="1.2" fill="#d8d820"/><rect x="22" y="286.5" width="2.5" height="1.2" fill="#d8d820"/><rect x="22" y="299.0" width="2.5" height="1.2" fill="#d8d820"/><rect x="22" y="311.5" width="2.5" height="1.2" fill="#d8d820"/><rect x="22" y="324.0" width="2.5" height="1.2" fill="#d8d820"/><rect x="22" y="336.5" width="2.5" height="1.2" fill="#d8d820"/><rect x="22" y="349.0" width="2.5" height="1.2" fill="#d8d820"/><rect x="22" y="361.5" width="2.5" height="1.2" fill="#d8d820"/><rect x="22" y="374.0" width="2.5" height="1.2" fill="#d8d820"/><rect x="22" y="386.5" width="2.5" height="1.2" fill="#d8d820"/><rect x="22" y="399.0" width="2.5" height="1.2" fill="#d8d820"/><rect x="22" y="411.5" width="2.5" height="1.2" fill="#d8d820"/><rect x="22" y="424.0" width="2.5" height="1.2" fill="#d8d820"/><rect x="22" y="436.5" width="2.5" height="1.2" fill="#d8d820"/><rect x="22" y="449.0" width="2.5" height="1.2" fill="#d8d820"/><rect x="22" y="461.5" width="2.5" height="1.2" fill="#d8d820"/><rect x="22" y="474.0" width="2.5" height="1.2" fill="#d8d820"/><rect x="22" y="486.5" width="2.5" height="1.2" fill="#d8d820"/><rect x="22" y="499.0" width="2.5" height="1.2" fill="#d8d820"/><rect x="780.5" y="111.5" width="2.5" height="1.2" fill="#d8d820"/><rect x="780.5" y="124.0" width="2.5" height="1.2" fill="#d8d820"/><rect x="780.5" y="136.5" width="2.5" height="1.2" fill="#d8d820"/><rect x="780.5" y="149.0" width="2.5" height="1.2" fill="#d8d820"/><rect x="778.0" y="161.5" width="5.0" height="1.2" fill="#d8d820"/><rect x="780.5" y="174.0" width="2.5" height="1.2" fill="#d8d820"/><rect x="780.5" y="186.5" width="2.5" height="1.2" fill="#d8d820"/><rect x="780.5" y="199.0" width="2.5" height="1.2" fill="#d8d820"/><rect x="780.5" y="211.5" width="2.5" height="1.2" fill="#d8d820"/><rect x="778.0" y="224.0" width="5.0" height="1.2" fill="#d8d820"/><rect x="780.5" y="236.5" width="2.5" height="1.2" fill="#d8d820"/><rect x="780.5" y="249.0" width="2.5" height="1.2" fill="#d8d820"/><rect x="780.5" y="261.5" width="2.5" height="1.2" fill="#d8d820"/><rect x="780.5" y="274.0" width="2.5" height="1.2" fill="#d8d820"/><rect x="778.0" y="286.5" width="5.0" height="1.2" fill="#d8d820"/><rect x="780.5" y="299.0" width="2.5" height="1.2" fill="#d8d820"/><rect x="780.5" y="311.5" width="2.5" height="1.2" fill="#d8d820"/><rect x="780.5" y="324.0" width="2.5" height="1.2" fill="#d8d820"/><rect x="780.5" y="336.5" width="2.5" height="1.2" fill="#d8d820"/><rect x="778.0" y="349.0" width="5.0" height="1.2" fill="#d8d820"/><rect x="780.5" y="361.5" width="2.5" height="1.2" fill="#d8d820"/><rect x="780.5" y="374.0" width="2.5" height="1.2" fill="#d8d820"/><rect x="780.5" y="386.5" width="2.5" height="1.2" fill="#d8d820"/><rect x="780.5" y="399.0" width="2.5" height="1.2" fill="#d8d820"/><rect x="778.0" y="411.5" width="5.0" height="1.2" fill="#d8d820"/><rect x="780.5" y="424.0" width="2.5" height="1.2" fill="#d8d820"/><rect x="780.5" y="436.5" width="2.5" height="1.2" fill="#d8d820"/><rect x="780.5" y="449.0" width="2.5" height="1.2" fill="#d8d820"/><rect x="780.5" y="461.5" width="2.5" height="1.2" fill="#d8d820"/><rect x="778.0" y="474.0" width="5.0" height="1.2" fill="#d8d820"/><rect x="780.5" y="486.5" width="2.5" height="1.2" fill="#d8d820"/><rect x="780.5" y="499.0" width="2.5" height="1.2" fill="#d8d820"/>
<rect x="102.5" y="113" width="1.2" height="3.5" fill="#e6e632"/><rect x="177.5" y="113" width="1.2" height="3.5" fill="#e6e632"/><rect x="252.5" y="113" width="1.2" height="3.5" fill="#e6e632"/><rect x="327.5" y="113" width="1.2" height="3.5" fill="#e6e632"/><rect x="402.5" y="113" width="1.2" height="3.5" fill="#e6e632"/><rect x="477.5" y="113" width="1.2" height="3.5" fill="#e6e632"/><rect x="552.5" y="113" width="1.2" height="3.5" fill="#e6e632"/><rect x="627.5" y="113" width="1.2" height="3.5" fill="#e6e632"/><rect x="702.5" y="113" width="1.2" height="3.5" fill="#e6e632"/><rect x="777.5" y="113" width="1.2" height="3.5" fill="#e6e632"/>
<text transform="translate(12.0 16.0) scale(0.800 1)" fill="#19c832" style="font-family:'Liberation Mono','Noto Sans CJK TC',monospace;font-size:15px;font-size:20px" xml:space="preserve">H</text>
<text transform="translate(34.2 16.0) scale(0.800 1)" fill="#19c832" style="font-family:'Liberation Mono','Noto Sans CJK TC',monospace;font-size:15px;font-size:20px" xml:space="preserve">R</text>
<text transform="translate(56.4 16.0) scale(0.800 1)" fill="#19c832" style="font-family:'Liberation Mono','Noto Sans CJK TC',monospace;font-size:15px;font-size:20px" xml:space="preserve">O</text>
<text transform="translate(78.6 16.0) scale(0.800 1)" fill="#19c832" style="font-family:'Liberation Mono','Noto Sans CJK TC',monospace;font-size:15px;font-size:20px" xml:space="preserve">F</text>
<text transform="translate(100.8 16.0) scale(0.800 1)" fill="#19c832" style="font-family:'Liberation Mono','Noto Sans CJK TC',monospace;font-size:15px;font-size:20px" xml:space="preserve">F</text>
<text transform="translate(123.0 16.0) scale(0.800 1)" fill="#19c832" style="font-family:'Liberation Mono','Noto Sans CJK TC',monospace;font-size:15px;font-size:20px" xml:space="preserve">T</text>
<text transform="translate(156.0 16.0) scale(0.830 1)" fill="#19c832" style="font-family:'Liberation Mono','Noto Sans CJK TC',monospace;font-size:15px;font-size:15px" xml:space="preserve">1.00</text>
<text transform="translate(12.0 38.0) scale(0.787 1)" fill="#e6e632" style="font-family:'Liberation Mono','Noto Sans CJK TC',monospace;font-size:15px;font-size:16px" xml:space="preserve">2312170000.png</text>
<text transform="translate(12.0 63.0) scale(0.787 1)" fill="#e6e632" style="font-family:'Liberation Mono','Noto Sans CJK TC',monospace;font-size:15px;font-size:16px" xml:space="preserve">23.12.17 00:00</text>
<text transform="translate(155.5 44.0) scale(0.839 1)" fill="#e6e632" style="font-family:'Liberation Mono','Noto Sans CJK TC',monospace;font-size:15px;font-size:15px" xml:space="preserve">meteor</text>
<text transform="translate(174.5 63.0) scale(0.839 1)" fill="#e6e632" style="font-family:'Liberation Mono','Noto Sans CJK TC',monospace;font-size:15px;font-size:15px" xml:space="preserve">0</text>
<text transform="translate(224.0 18.0) scale(0.807 1)" fill="#e6e632" style="font-family:'Liberation Mono','Noto Sans CJK TC',monospace;font-size:15px;font-size:15.6px" xml:space="preserve">Ovserver</text>
<text transform="translate(368.0 18.0) scale(0.807 1)" fill="#e6e632" style="font-family:'Liberation Mono','Noto Sans CJK TC',monospace;font-size:15px;font-size:15.6px" xml:space="preserve">:</text>
<text transform="translate(382.0 18.0) scale(0.807 1)" fill="#e6e632" style="font-family:'Liberation Mono','Noto Sans CJK TC',monospace;font-size:15px;font-size:15.6px" xml:space="preserve">bm2eqb garfield Tsao</text>
<text transform="translate(224.0 33.0) scale(0.807 1)" fill="#e6e632" style="font-family:'Liberation Mono','Noto Sans CJK TC',monospace;font-size:15px;font-size:15.6px" xml:space="preserve">Receiving Location</text>
<text transform="translate(368.0 33.0) scale(0.807 1)" fill="#e6e632" style="font-family:'Liberation Mono','Noto Sans CJK TC',monospace;font-size:15px;font-size:15.6px" xml:space="preserve">:</text>
<text transform="translate(382.0 33.0) scale(0.807 1)" fill="#e6e632" style="font-family:'Liberation Mono','Noto Sans CJK TC',monospace;font-size:15px;font-size:15.6px" xml:space="preserve">Ta Chi Observatory </text>
<text transform="translate(224.0 48.0) scale(0.807 1)" fill="#e6e632" style="font-family:'Liberation Mono','Noto Sans CJK TC',monospace;font-size:15px;font-size:15.6px" xml:space="preserve">Receiver</text>
<text transform="translate(368.0 48.0) scale(0.807 1)" fill="#e6e632" style="font-family:'Liberation Mono','Noto Sans CJK TC',monospace;font-size:15px;font-size:15.6px" xml:space="preserve">:</text>
<text transform="translate(382.0 48.0) scale(0.807 1)" fill="#e6e632" style="font-family:'Liberation Mono','Noto Sans CJK TC',monospace;font-size:15px;font-size:15.6px" xml:space="preserve">AOR AR 5000  84.799160MHz  USB   3K</text>
<text transform="translate(224.0 63.0) scale(0.807 1)" fill="#e6e632" style="font-family:'Liberation Mono','Noto Sans CJK TC',monospace;font-size:15px;font-size:15.6px" xml:space="preserve">Receiving antenna</text>
<text transform="translate(368.0 63.0) scale(0.807 1)" fill="#e6e632" style="font-family:'Liberation Mono','Noto Sans CJK TC',monospace;font-size:15px;font-size:15.6px" xml:space="preserve">:</text>
<text transform="translate(382.0 63.0) scale(0.807 1)" fill="#e6e632" style="font-family:'Liberation Mono','Noto Sans CJK TC',monospace;font-size:15px;font-size:15.6px" xml:space="preserve">DX 5 ele yagi antenna (10m height)</text>
<text transform="translate(224.0 78.0) scale(0.807 1)" fill="#e6e632" style="font-family:'Liberation Mono','Noto Sans CJK TC',monospace;font-size:15px;font-size:15.6px" xml:space="preserve">Meteor shower name</text>
<text transform="translate(368.0 78.0) scale(0.807 1)" fill="#e6e632" style="font-family:'Liberation Mono','Noto Sans CJK TC',monospace;font-size:15px;font-size:15.6px" xml:space="preserve">:</text>
<text x="525.0" y="34.5" fill="#e6e632" style="font-family:'Liberation Mono','Noto Sans CJK TC',monospace;font-size:15px">大溪天文台</text>
<text transform="translate(600.0 33.0) scale(0.807 1)" fill="#e6e632" style="font-family:'Liberation Mono','Noto Sans CJK TC',monospace;font-size:15px;font-size:15.6px" xml:space="preserve">(121E, 25N)</text>
<text x="382.0" y="79.5" fill="#e6e632" style="font-family:'Liberation Mono','Noto Sans CJK TC',monospace;font-size:15px">雙子座流星雨</text>
<text transform="translate(480.0 78.0) scale(0.807 1)" fill="#e6e632" style="font-family:'Liberation Mono','Noto Sans CJK TC',monospace;font-size:15px;font-size:15.6px" xml:space="preserve">Geminids  2023</text>
<text transform="translate(0.0 107.0) scale(0.900 1)" fill="#e6e632" style="font-family:'Liberation Mono','Noto Sans CJK TC',monospace;font-size:15px;font-size:14px" xml:space="preserve">kHz</text>
<text transform="translate(72.0 112.0) scale(0.840 1)" fill="#e6e632" style="font-family:'Liberation Mono','Noto Sans CJK TC',monospace;font-size:15px;font-size:14.5px" xml:space="preserve">0001</text>
<text transform="translate(147.0 112.0) scale(0.840 1)" fill="#e6e632" style="font-family:'Liberation Mono','Noto Sans CJK TC',monospace;font-size:15px;font-size:14.5px" xml:space="preserve">0002</text>
<text transform="translate(297.0 112.0) scale(0.840 1)" fill="#e6e632" style="font-family:'Liberation Mono','Noto Sans CJK TC',monospace;font-size:15px;font-size:14.5px" xml:space="preserve">2354</text>
<text transform="translate(372.0 112.0) scale(0.840 1)" fill="#e6e632" style="font-family:'Liberation Mono','Noto Sans CJK TC',monospace;font-size:15px;font-size:14.5px" xml:space="preserve">2355</text>
<text transform="translate(447.0 112.0) scale(0.840 1)" fill="#e6e632" style="font-family:'Liberation Mono','Noto Sans CJK TC',monospace;font-size:15px;font-size:14.5px" xml:space="preserve">2356</text>
<text transform="translate(522.0 112.0) scale(0.840 1)" fill="#e6e632" style="font-family:'Liberation Mono','Noto Sans CJK TC',monospace;font-size:15px;font-size:14.5px" xml:space="preserve">2357</text>
<text transform="translate(597.0 112.0) scale(0.840 1)" fill="#e6e632" style="font-family:'Liberation Mono','Noto Sans CJK TC',monospace;font-size:15px;font-size:14.5px" xml:space="preserve">2358</text>
<text transform="translate(672.0 112.0) scale(0.840 1)" fill="#e6e632" style="font-family:'Liberation Mono','Noto Sans CJK TC',monospace;font-size:15px;font-size:14.5px" xml:space="preserve">2359</text>
<text transform="translate(747.0 112.0) scale(0.840 1)" fill="#e6e632" style="font-family:'Liberation Mono','Noto Sans CJK TC',monospace;font-size:15px;font-size:14.5px" xml:space="preserve">0000</text>
<text transform="translate(246.0 112.0) scale(0.500 1)" fill="#e6e632" style="font-family:'Liberation Mono','Noto Sans CJK TC',monospace;font-size:15px;font-size:14.5px" xml:space="preserve">3</text>
<text transform="translate(0.0 167.0) scale(0.720 1)" fill="#e6e632" style="font-family:'Liberation Mono','Noto Sans CJK TC',monospace;font-size:15px;font-size:14.5px" xml:space="preserve">1.1-</text>
<text transform="translate(0.0 229.5) scale(0.720 1)" fill="#e6e632" style="font-family:'Liberation Mono','Noto Sans CJK TC',monospace;font-size:15px;font-size:14.5px" xml:space="preserve">1.0-</text>
<text transform="translate(0.0 292.0) scale(0.720 1)" fill="#e6e632" style="font-family:'Liberation Mono','Noto Sans CJK TC',monospace;font-size:15px;font-size:14.5px" xml:space="preserve">0.9-</text>
<text transform="translate(0.0 354.5) scale(0.720 1)" fill="#e6e632" style="font-family:'Liberation Mono','Noto Sans CJK TC',monospace;font-size:15px;font-size:14.5px" xml:space="preserve">0.8-</text>
<text transform="translate(0.0 417.0) scale(0.720 1)" fill="#e6e632" style="font-family:'Liberation Mono','Noto Sans CJK TC',monospace;font-size:15px;font-size:14.5px" xml:space="preserve">0.7-</text>
<text transform="translate(0.0 479.5) scale(0.720 1)" fill="#e6e632" style="font-family:'Liberation Mono','Noto Sans CJK TC',monospace;font-size:15px;font-size:14.5px" xml:space="preserve">0.6-</text>
</svg>
<!-- ===== TheSky6 window ===== -->
<div id="sky" class="win" style="left:944px;top:26px;width:670px;height:708px;background:#31b5f7"></div>
<div style="left:946px;top:28px;width:660px;height:34px;border-radius:6px 0 0 0;background:linear-gradient(#62c9fb 0,#37b8f8 35%,#2fb3f6 100%)"></div>
<div style="left:960px;top:33px;width:175px;height:22px;background:#fff;filter:blur(7px);opacity:.55"></div>
<svg style="left:953px;top:33px" width="22" height="22" viewBox="0 0 22 22"><defs><radialGradient id="gx" cx=".4" cy=".45" r=".6"><stop offset="0" stop-color="#b9a6e8"/><stop offset=".35" stop-color="#4a4ab8"/><stop offset="1" stop-color="#10105a"/></radialGradient></defs><circle cx="11" cy="11" r="10" fill="url(#gx)"/><path d="M4 12 Q8 5 15 8 Q11 9 10 14 Q7 16 4 12Z" fill="#c9b8f0" opacity=".55"/></svg>
<div class="t" style="left:978px;top:36.5px;font-size:15px;color:#17324a">大溪天文台 - TheSky6</div>
<!-- client border -->
<div style="left:953px;top:62px;width:660px;height:663px;background:#f0f0f0;border:1px solid #4d86a8"></div>
<!-- menu bar -->
<div style="left:954px;top:63px;width:646px;height:22px;background:linear-gradient(#fafbfd 0,#eef1f8 45%,#dfe4f0 55%,#e4e8f3 100%)"></div>
<div style="left:954px;top:85px;width:646px;height:1px;background:#b4b8c4"></div>
<div class="t" style="left:963px;top:66px;font-size:14.8px;color:#7c7f86;text-shadow:0 1px 0 #fff">File</div>
<div class="t" style="left:1004px;top:66px;font-size:14.8px;color:#7c7f86;text-shadow:0 1px 0 #fff">Edit</div>
<div class="t" style="left:1049px;top:66px;font-size:14.8px;color:#7c7f86;text-shadow:0 1px 0 #fff">View</div>
<div class="t" style="left:1101px;top:66px;font-size:14.8px;color:#7c7f86;text-shadow:0 1px 0 #fff">Orientation</div>
<div class="t" style="left:1198px;top:66px;font-size:14.8px;color:#7c7f86;text-shadow:0 1px 0 #fff">Data</div>
<div class="t" style="left:1249px;top:66px;font-size:14.8px;color:#7c7f86;text-shadow:0 1px 0 #fff">Tools</div>
<div class="t" style="left:1306px;top:66px;font-size:14.8px;color:#7c7f86;text-shadow:0 1px 0 #fff">Telescope</div>
<div class="t" style="left:1395px;top:66px;font-size:14.8px;color:#7c7f86;text-shadow:0 1px 0 #fff">Help</div>
<div style="left:954px;top:86px;width:646px;height:115px;background:#f0f0f0"></div>
<div style="left:954px;top:124px;width:646px;height:1px;background:#c8c8c8"></div><div style="left:954px;top:125px;width:646px;height:1px;background:#fff"></div>
<div style="left:954px;top:162px;width:646px;height:1px;background:#c8c8c8"></div><div style="left:954px;top:163px;width:646px;height:1px;background:#fff"></div>
<div style="left:1233px;top:88px;width:1px;height:36px;background:#b8b8b8"></div><div style="left:1234px;top:88px;width:1px;height:36px;background:#fff"></div>
<div style="left:1115px;top:127px;width:1px;height:35px;background:#b8b8b8"></div><div style="left:1116px;top:127px;width:1px;height:35px;background:#fff"></div>
<div style="left:1187px;top:127px;width:1px;height:35px;background:#b8b8b8"></div><div style="left:1188px;top:127px;width:1px;height:35px;background:#fff"></div>
<div style="left:1417px;top:127px;width:1px;height:35px;background:#b8b8b8"></div><div style="left:1418px;top:127px;width:1px;height:35px;background:#fff"></div>
<div style="left:1096px;top:165px;width:1px;height:35px;background:#b8b8b8"></div><div style="left:1097px;top:165px;width:1px;height:35px;background:#fff"></div>
<div style="left:1510px;top:165px;width:1px;height:35px;background:#b8b8b8"></div><div style="left:1511px;top:165px;width:1px;height:35px;background:#fff"></div>
<div style="left:1056px;top:95px;width:1px;height:22px;background:#b8b8b8"></div><div style="left:1057px;top:95px;width:1px;height:22px;background:#fff"></div>
<div style="left:1123px;top:95px;width:1px;height:22px;background:#b8b8b8"></div><div style="left:1124px;top:95px;width:1px;height:22px;background:#fff"></div>
<div style="left:1162px;top:95px;width:1px;height:22px;background:#b8b8b8"></div><div style="left:1163px;top:95px;width:1px;height:22px;background:#fff"></div>
<div style="left:1362px;top:95px;width:1px;height:22px;background:#b8b8b8"></div><div style="left:1363px;top:95px;width:1px;height:22px;background:#fff"></div>
<div style="left:1430px;top:95px;width:1px;height:22px;background:#b8b8b8"></div><div style="left:1431px;top:95px;width:1px;height:22px;background:#fff"></div>
<div style="left:1468px;top:95px;width:1px;height:22px;background:#b8b8b8"></div><div style="left:1469px;top:95px;width:1px;height:22px;background:#fff"></div>
<div style="left:1565px;top:95px;width:1px;height:22px;background:#b8b8b8"></div><div style="left:1566px;top:95px;width:1px;height:22px;background:#fff"></div>
<div style="left:1229px;top:134px;width:1px;height:22px;background:#b8b8b8"></div><div style="left:1230px;top:134px;width:1px;height:22px;background:#fff"></div>
<div style="left:995px;top:172px;width:1px;height:22px;background:#b8b8b8"></div><div style="left:996px;top:172px;width:1px;height:22px;background:#fff"></div>
<div style="left:1437px;top:172px;width:1px;height:22px;background:#b8b8b8"></div><div style="left:1438px;top:172px;width:1px;height:22px;background:#fff"></div>
<div style="left:1582px;top:172px;width:1px;height:22px;background:#b8b8b8"></div><div style="left:1583px;top:172px;width:1px;height:22px;background:#fff"></div>
<svg style="left:967px;top:93px" width="24" height="24" viewBox="0 0 24 24"><path d="M6 3 H14 L18 7 V21 H6Z" fill="#fff" stroke="#111" stroke-width="1.5"/><path d="M14 3 V7 H18" fill="none" stroke="#111" stroke-width="1.2"/></svg>
<svg style="left:996px;top:93px" width="24" height="24" viewBox="0 0 24 24"><path d="M3 8 H9 L11 10 H18 V20 H3Z" fill="#d8d050" stroke="#111" stroke-width="1.3"/><path d="M3 20 L7 12 H22 L18 20Z" fill="#f0ea80" stroke="#111" stroke-width="1.3"/><path d="M14 6 Q17 3 20 5 M20 5 L18.5 2.5 M20 5 L17 6" stroke="#111" stroke-width="1.2" fill="none"/></svg>
<svg style="left:1025px;top:93px" width="24" height="24" viewBox="0 0 24 24"><rect x="4" y="4" width="17" height="17" fill="#8a8620" stroke="#111" stroke-width="1.6"/><rect x="7" y="4.5" width="11" height="7" fill="#111"/><rect x="8" y="14" width="9" height="7" fill="#111"/><rect x="10" y="15.5" width="3" height="4.5" fill="#e8e060"/></svg>
<svg style="left:1063px;top:93px" width="24" height="24" viewBox="0 0 24 24"><path d="M4 3 H11 L13 5 V13 H4Z" fill="#fff" stroke="#20208a" stroke-width="1.3"/><path d="M10 9 H17 L20 12 V21 H10Z" fill="#fff" stroke="#20208a" stroke-width="1.3"/><path d="M12 14 H18 M12 16.5 H18 M12 19 H16 M6 6 H10 M6 8.5 H9" stroke="#20208a" stroke-width="1"/></svg>
<svg style="left:1092px;top:93px" width="24" height="24" viewBox="0 0 24 24"><rect x="4" y="5" width="14" height="16" rx="1.5" fill="#b0b0b0"/><rect x="8" y="3" width="6" height="4" fill="#9a9a9a"/><rect x="11" y="11" width="10" height="10" fill="#d8d8d8" stroke="#9a9a9a"/><path d="M13 14 H19 M13 17 H19" stroke="#a8a8a8"/></svg>
<svg style="left:1130px;top:93px" width="24" height="24" viewBox="0 0 24 24"><path d="M7 4 H19 L17 11 H5Z" fill="#fff" stroke="#111" stroke-width="1.3"/><path d="M8 6.5 H16 M7.5 8.5 H15.5" stroke="#555" stroke-width="1"/><path d="M2 11 H22 V18 H2Z" fill="#c8c8c8" stroke="#111" stroke-width="1.4"/><path d="M5 18 H19 V21 H5Z" fill="#e8e8e8" stroke="#111" stroke-width="1.2"/><path d="M2 14.5 H22" stroke="#111" stroke-width="1"/></svg>
<svg style="left:1169px;top:93px" width="24" height="24" viewBox="0 0 24 24"><path d="M7 8 Q7 3 12 3 Q17 3 17 8 Q17 11 13.8 12.8 V16 H10.2 V11 Q13.5 10 13.5 8 Q13.5 6 12 6 Q10.5 6 10.5 8Z" fill="#e6d820" stroke="#111" stroke-width="1.3"/><rect x="10.2" y="18" width="3.6" height="3.6" fill="#e6d820" stroke="#111" stroke-width="1.2"/></svg>
<svg style="left:1198px;top:93px" width="24" height="24" viewBox="0 0 24 24"><path d="M3 3 V18 L7 14 L10 21 L12.5 20 L9.5 13.5 H14Z" fill="#111"/><path d="M13 7.5 Q13 2.5 17.8 2.5 Q22.6 2.5 22.6 7.3 Q22.6 10 19.8 11.8 V14.5 H16 V10.3 Q18.9 9.2 18.9 7.4 Q18.9 5.8 17.8 5.8 Q16.6 5.8 16.6 7.5Z" fill="#2030c0"/><rect x="16" y="16.2" width="3.8" height="3.6" fill="#2030c0"/></svg>
<svg style="left:1244px;top:93px" width="24" height="24" viewBox="0 0 24 24"><path d="M12 3 L20 11.5 H15.5 V21 H8.5 V11.5 H4Z" fill="#22e628"/></svg>
<svg style="left:1273px;top:93px" width="24" height="24" viewBox="0 0 24 24"><path d="M12 21 L20 12.5 H15.5 V3 H8.5 V12.5 H4Z" fill="#22e628"/></svg>
<svg style="left:1302px;top:93px" width="24" height="24" viewBox="0 0 24 24"><path d="M3 12 L11.5 4 V8.5 H21 V15.5 H11.5 V20Z" fill="#22e628"/></svg>
<svg style="left:1331px;top:93px" width="24" height="24" viewBox="0 0 24 24"><path d="M21 12 L12.5 4 V8.5 H3 V15.5 H12.5 V20Z" fill="#22e628"/></svg>
<svg style="left:1369px;top:93px" width="24" height="24" viewBox="0 0 24 24"><circle cx="14" cy="9.5" r="6.3" fill="#fff" stroke="#111" stroke-width="1.7"/><path d="M9.5 14 L3.5 20.5" stroke="#111" stroke-width="3.2" stroke-linecap="round"/><path d="M11 9.5 H17 M14 6.5 V12.5" stroke="#111" stroke-width="1.4"/></svg>
<svg style="left:1398px;top:93px" width="24" height="24" viewBox="0 0 24 24"><circle cx="14" cy="9.5" r="6.3" fill="#fff" stroke="#111" stroke-width="1.7"/><path d="M9.5 14 L3.5 20.5" stroke="#111" stroke-width="3.2" stroke-linecap="round"/><path d="M11 9.5 H17" stroke="#111" stroke-width="1.4"/></svg>
<svg style="left:1437px;top:93px" width="24" height="24" viewBox="0 0 24 24"><path d="M9 17.5 A7 7 0 1 1 17.5 16" fill="none" stroke="#111" stroke-width="1.8"/><path d="M12.5 21 L7 18.5 L12.5 14.5Z" fill="#111"/></svg>
<svg style="left:1475px;top:93px" width="24" height="24" viewBox="0 0 24 24"><path d="M3 21 A8 8 0 0 1 19 21" fill="none" stroke="#2030d0" stroke-width="2"/><path d="M7 21 A6 6 0 0 1 19 21 M11 21 A4 4 0 0 1 19 21" fill="none" stroke="#c03030" stroke-width="1.5"/><path d="M6 21 A5 7 0 0 1 14 14" fill="none" stroke="#2030d0" stroke-width="1.4"/><path d="M6 9 Q12 3 18 8" fill="none" stroke="#111" stroke-width="1.6"/><path d="M19.5 10.5 L14.5 9.5 L19 5.5Z" fill="#111"/></svg>
<svg style="left:1504px;top:93px" width="24" height="24" viewBox="0 0 24 24"><path d="M4 21 A8.5 8.5 0 0 1 21 21Z" fill="#fff" stroke="#2030d0" stroke-width="1.8"/><path d="M8 21 V15 M12.5 21 V12.5 M17 21 V15 M5 17.5 H20" stroke="#2030d0" stroke-width="1.6"/><text x="3" y="9" font-size="10" font-family="Liberation Sans, sans-serif" font-weight="bold" fill="#111">P</text></svg>
<div style="left:1531px;top:90px;width:30px;height:30px;background:#f8f8f8;border:1px solid;border-color:#8a8a8a #fff #fff #8a8a8a"></div>
<svg style="left:1535px;top:94px" width="24" height="24" viewBox="0 0 24 24"><path d="M4 21 A8.5 8.5 0 0 1 21 21Z" fill="#fff" stroke="#b02020" stroke-width="1.8"/><path d="M8 21 V15 M12.5 21 V12.5 M17 21 V15 M5 17.5 H20" stroke="#b02020" stroke-width="1.6"/><text x="3" y="9" font-size="10" font-family="Liberation Sans, sans-serif" font-weight="bold" fill="#111">Z</text></svg>
<svg style="left:1569px;top:93px" width="24" height="24" viewBox="0 0 24 24"><text x="2" y="13" font-size="15" font-family="Liberation Sans, sans-serif" fill="#111">N</text><path d="M13 15 L19 21 H7Z" fill="#c01818"/></svg>
<svg style="left:964px;top:133px" width="24" height="24" viewBox="0 0 24 24"><path d="M2 9 L8 4 L16 6 L18 16 H2Z" fill="#2a7a8a" stroke="#111" stroke-width="1"/><path d="M5 8 L9 5 L9 14 H5Z" fill="#7fd0d8"/><rect x="9" y="11" width="13" height="10" fill="#fff" stroke="#444" stroke-width=".8"/><path d="M11 13.5 H21 M11 16 H21 M11 18.5 H21" stroke="#d02020" stroke-width="1.2" stroke-dasharray="2 1.2"/></svg>
<svg style="left:994px;top:133px" width="24" height="24" viewBox="0 0 24 24"><path d="M4 11 L8 8 L12 11 L16 7 L20 11 V20 H4Z" fill="#b4b4b4"/><path d="M7 4 V6 M12 3 V5 M17 4 V6" stroke="#c4c4c4" stroke-width="1.5"/><rect x="8" y="13" width="8" height="5" fill="#d4d4d4"/></svg>
<svg style="left:1023px;top:133px" width="24" height="24" viewBox="0 0 24 24"><rect x="4" y="5" width="11" height="10" fill="#b0b0b0"/><rect x="9" y="10" width="12" height="11" fill="#c4c4c4"/><rect x="6" y="7" width="4" height="3" fill="#dcdcdc"/></svg>
<svg style="left:1051px;top:133px" width="24" height="24" viewBox="0 0 24 24"><rect x="4" y="5" width="16" height="13" fill="#c8c8c8" stroke="#b0b0b0"/><path d="M8 9 H15 V14 M8 9 L10 7 M8 9 L10 11" stroke="#a0a0a0" stroke-width="1.5" fill="none"/><rect x="4" y="19" width="16" height="2" fill="#d8d8d8"/></svg>
<svg style="left:1079px;top:133px" width="24" height="24" viewBox="0 0 24 24"><path d="M3 20 L13 10" stroke="#111" stroke-width="2.6"/><path d="M13 3 L14 6 M17 2 L16 5.5 M20 6 L17 7.5 M10 5 L12.5 7 M20 11 L17.5 10" stroke="#111" stroke-width="1.2"/><path d="M14 16 H22 V21 H20 V19 H16 V21 H14Z" fill="#111"/></svg>
<svg style="left:1199px;top:133px" width="24" height="24" viewBox="0 0 24 24"><path d="M5 5 H9 V8 L11 10 V20 H3 V11 L5 8Z" fill="#111"/><path d="M15 5 H19 V8 L21 11 V20 H13 V10 L15 8Z" fill="#111"/><rect x="10" y="9" width="4" height="5" fill="#111"/><path d="M5.5 12 V18 M16 12 V18" stroke="#fff" stroke-width="1"/></svg>
<div style="left:1234px;top:130px;width:30px;height:30px;background:#f8f8f8;border:1px solid;border-color:#8a8a8a #fff #fff #8a8a8a"></div>
<svg style="left:1238px;top:134px" width="24" height="24" viewBox="0 0 24 24"><circle cx="12" cy="12" r="3.6" fill="#fff" stroke="#9a9a9a" stroke-width="1.4"/></svg>
<svg style="left:1265px;top:133px" width="24" height="24" viewBox="0 0 24 24"><circle cx="8" cy="8" r="2.8" fill="#30c040" stroke="#111" stroke-width="1.3"/><circle cx="14.5" cy="15" r="4.3" fill="#f0e020" stroke="#111" stroke-width="1.4"/></svg>
<svg style="left:1294px;top:133px" width="24" height="24" viewBox="0 0 24 24"><circle cx="5" cy="6" r="2" fill="#fff" stroke="#111" stroke-width="1.1"/><circle cx="12" cy="7" r="3.4" fill="#fff" stroke="#111" stroke-width="1.2"/><circle cx="19" cy="6" r="2" fill="#fff" stroke="#111" stroke-width="1.1"/><path d="M2 19 Q5 13 8 17 T13 16 T18 18 T22 17" fill="none" stroke="#d03030" stroke-width="1.2"/><path d="M9 11 L6 15 M15 11 L18 15" stroke="#111" stroke-width="1"/></svg>
<svg style="left:1323px;top:133px" width="24" height="24" viewBox="0 0 24 24"><path d="M4 9 Q7 2 14 5 Q19 8 13 12 Q8 15 11 19 Q16 22 20 15" fill="none" stroke="#111" stroke-width="2.6"/><path d="M9 21 Q3 17 8 12 M15 3 Q21 6 17 11" fill="none" stroke="#111" stroke-width="2"/></svg>
<svg style="left:1352px;top:133px" width="24" height="24" viewBox="0 0 24 24"><circle cx="6" cy="6" r="1.8" fill="#fff" stroke="#111"/><circle cx="12" cy="11" r="2.6" fill="#fff" stroke="#111" stroke-width="1.1"/><circle cx="19" cy="5" r="1.5" fill="#fff" stroke="#111"/><circle cx="7" cy="17" r="2" fill="#fff" stroke="#111"/><circle cx="18" cy="17" r="2.2" fill="#fff" stroke="#111"/></svg>
<div style="left:1379px;top:130px;width:30px;height:30px;background:#f8f8f8;border:1px solid;border-color:#8a8a8a #fff #fff #8a8a8a"></div>
<svg style="left:1383px;top:134px" width="24" height="24" viewBox="0 0 24 24"><path d="M12 3 Q16 2 17 6 Q22 7 20 12 Q22 17 17 18 Q14 23 10 19 Q4 20 4 14 Q1 9 6 7 Q7 2 12 3Z" fill="#e020d0"/><path d="M8 5 Q12 7 16 5 Q19 9 18 14 Q14 19 9 17 Q5 12 8 5Z" fill="#7a20e0" opacity=".7"/><circle cx="12" cy="12.5" r="3.4" fill="#f0d020"/><circle cx="12" cy="12.5" r="1.4" fill="#e05010"/></svg>
<svg style="left:965px;top:170px" width="24" height="24" viewBox="0 0 24 24"><path d="M3 11 L17 4 L20 9 L6 16Z" fill="#28b030" stroke="#0a5a10" stroke-width="1"/><path d="M5 10 L16 5" stroke="#8ff090" stroke-width="1.4"/><path d="M11 14 L8 22 M11 14 L14 22" stroke="#111" stroke-width="1.3"/><rect x="10" y="13" width="12" height="9" fill="#fff" stroke="#444" stroke-width=".8"/><path d="M12 15.5 H21 M12 17.8 H21 M12 20 H21" stroke="#d02020" stroke-width="1.1" stroke-dasharray="2 1.2"/></svg>
<svg style="left:1002px;top:170px" width="24" height="24" viewBox="0 0 24 24"><path d="M3 11 L17 4 L20 9 L6 16Z" fill="#28b030" stroke="#0a5a10" stroke-width="1"/><path d="M5 10 L16 5" stroke="#8ff090" stroke-width="1.4"/><path d="M11 14 L8 22 M11 14 L14 22" stroke="#111" stroke-width="1.3"/><path d="M3 3 L8 5 L3 8Z" fill="#2030c0"/><circle cx="13" cy="18" r="1.6" fill="#111"/><path d="M17 17 L21 20 L17 21Z" fill="#2030c0"/></svg>
<svg style="left:1031px;top:170px" width="24" height="24" viewBox="0 0 24 24"><circle cx="8" cy="7" r="3.6" fill="#b4b4b4"/><circle cx="16" cy="6" r="3" fill="#b4b4b4"/><rect x="5" y="10" width="13" height="7" fill="#a8a8a8"/><path d="M11 17 L7 23 M12 17 L16 23" stroke="#b0b0b0" stroke-width="1.5"/><path d="M2 3 L4 5 M3 8 L1 8" stroke="#c0c0c0"/></svg>
<svg style="left:1060px;top:170px" width="24" height="24" viewBox="0 0 24 24"><circle cx="8" cy="7" r="3.6" fill="#b4b4b4"/><circle cx="16" cy="6" r="3" fill="#b4b4b4"/><rect x="5" y="10" width="13" height="7" fill="#a8a8a8"/><path d="M11 17 L7 23 M12 17 L16 23" stroke="#b0b0b0" stroke-width="1.5"/><path d="M2 3 L4 5 M3 8 L1 8" stroke="#c0c0c0"/></svg>
<div class="sunken" style="left:1106px;top:171px;width:153px;height:23px;border-color:#6a6a6a #fff #fff #6a6a6a;box-shadow:1px 1px 0 #a0a0a0 inset"></div>
<div class="t serif" style="left:1111px;top:173px;font-size:15.5px;color:#111;letter-spacing:-.3px">1x (real time)</div>
<div class="raised" style="left:1239px;top:173px;width:17px;height:19px"></div><svg style="left:1242px;top:179px" width="12" height="8"><polygon points="1,1 11,1 6,7" fill="#111"/></svg>
<svg style="left:1263px;top:170px" width="24" height="24" viewBox="0 0 24 24"><path d="M12 6 L19 13 H5Z" fill="#a8a8a8"/><rect x="5" y="15" width="14" height="3" fill="#a8a8a8"/></svg>
<svg style="left:1291px;top:170px" width="24" height="24" viewBox="0 0 24 24"><path d="M12 5 V19 L4 12Z M20 5 V19 L12 12Z" fill="#111"/></svg>
<svg style="left:1320px;top:170px" width="24" height="24" viewBox="0 0 24 24"><path d="M15 5 V19 L8 12Z" fill="#111"/></svg>
<svg style="left:1349px;top:170px" width="24" height="24" viewBox="0 0 24 24"><rect x="7.5" y="7.5" width="9" height="9" fill="#111"/></svg>
<svg style="left:1377px;top:170px" width="24" height="24" viewBox="0 0 24 24"><path d="M9 5 V19 L16 12Z" fill="#111"/></svg>
<div style="left:1406px;top:168px;width:28px;height:28px;background:#f8f8f8;border:1px solid;border-color:#8a8a8a #fff #fff #8a8a8a"></div>
<svg style="left:1409px;top:171px" width="24" height="24" viewBox="0 0 24 24"><path d="M4 5 V19 L12 12Z M12 5 V19 L20 12Z" fill="#111"/></svg>
<svg style="left:1443px;top:170px" width="24" height="24" viewBox="0 0 24 24"><path d="M17 10 Q12 4 6 8 Q2 12 8 15" fill="none" stroke="#e03030" stroke-width="1.8"/><circle cx="13" cy="16" r="2.6" fill="#f0e020" stroke="#b0a010"/><path d="M19 8 L17 12" stroke="#e03030" stroke-width="1.5"/></svg>
<svg style="left:1473px;top:170px" width="24" height="24" viewBox="0 0 24 24"><circle cx="12" cy="12" r="9" fill="#f4ec50" stroke="#b8b010" stroke-width="1.4"/><circle cx="12" cy="12" r="6.5" fill="none" stroke="#2030c0" stroke-width="1.1" stroke-dasharray="2 1.6"/><path d="M12 12 L15 6 M12 12 L16 14" stroke="#2030c0" stroke-width="1.5"/></svg>
<svg style="left:1522px;top:170px" width="24" height="24" viewBox="0 0 24 24"><rect x="5" y="3" width="14" height="19" fill="#fff" stroke="#2020d0" stroke-width="1.8"/><rect x="5" y="3" width="14" height="3.5" fill="#2020d0"/><path d="M9 9 H15 M9 15 H15 M10 12 H14 M12 9 V15 M9 18.5 H15" stroke="#111" stroke-width="1.3"/></svg>
<svg style="left:1551px;top:170px" width="24" height="24" viewBox="0 0 24 24"><ellipse cx="12" cy="12" rx="10" ry="6.5" fill="none" stroke="#d83030" stroke-width="1.6"/><ellipse cx="12" cy="12" rx="6.5" ry="3.8" fill="#f8e040" stroke="#e07010" stroke-width="1.4"/><ellipse cx="11" cy="11" rx="8" ry="5" fill="none" stroke="#e05050" stroke-width="1" transform="rotate(-15 12 12)"/></svg>
<div style="left:1589px;top:171px;width:12px;height:16px;background:#30d8f0;border-radius:3px 0 0 0"></div><div style="left:1589px;top:187px;width:12px;height:5px;background:#208030"></div>
<div style="left:955px;top:677px;width:645px;height:21px;background:#f0f0f0;border-top:1px solid #e0e0e0"></div>
<div style="left:957px;top:678px;width:21px;height:19px;background:linear-gradient(#f2f2f2,#d8d8d8);border:1px solid #a8a8a8;border-radius:2px"></div>
<svg style="left:962px;top:682px" width="10" height="12"><polygon points="8,1 2,6 8,11" fill="#555"/></svg>
<div style="left:954px;top:698px;width:646px;height:27px;background:#f0f0f0"></div>
<div class="t serif" style="left:957px;top:705px;font-size:14.8px;color:#111;letter-spacing:-.2px">For Help, press F1</div>
<div class="sunken" style="left:1582px;top:702px;width:30px;height:21px;background:#f0f0f0;border-color:#9a9a9a #fff #fff #9a9a9a;box-shadow:none"></div>
<div class="t serif" style="left:1586px;top:705px;font-size:14.8px;color:#111">RA</div>
<div id="skyedge" style="left:954px;top:201px;width:2px;height:476px;background:#8a8a8a;z-index:5"></div>
<!-- sky view -->
<svg style="left:955px;top:201px" width="645" height="476" viewBox="955 201 645 476">
<defs>
<radialGradient id="haze" gradientUnits="userSpaceOnUse" cx="1624" cy="-353" r="1130"><stop offset="0.717" stop-color="#a0a0a0" stop-opacity="0"/><stop offset="0.779" stop-color="#a0a0a0" stop-opacity=".03"/><stop offset="0.841" stop-color="#a0a0a0" stop-opacity=".085"/><stop offset="0.894" stop-color="#a0a0a0" stop-opacity=".16"/><stop offset="0.938" stop-color="#a0a0a0" stop-opacity=".25"/><stop offset="0.9735" stop-color="#a0a0a0" stop-opacity=".33"/><stop offset="1" stop-color="#a0a0a0" stop-opacity=".40"/></radialGradient>
<radialGradient id="sg" cx=".5" cy=".5" r=".5"><stop offset="0" stop-color="#fff"/><stop offset=".35" stop-color="#fff" stop-opacity=".9"/><stop offset="1" stop-color="#fff" stop-opacity="0"/></radialGradient>
<radialGradient id="so" cx=".5" cy=".5" r=".5"><stop offset="0" stop-color="#ffe0a0"/><stop offset=".4" stop-color="#f0a040" stop-opacity=".9"/><stop offset="1" stop-color="#c06010" stop-opacity="0"/></radialGradient>
<radialGradient id="sy" cx=".5" cy=".5" r=".5"><stop offset="0" stop-color="#fff"/><stop offset=".4" stop-color="#fff0c8" stop-opacity=".9"/><stop offset="1" stop-color="#c0a070" stop-opacity="0"/></radialGradient>
<radialGradient id="sb" cx=".5" cy=".5" r=".5"><stop offset="0" stop-color="#fff"/><stop offset=".4" stop-color="#dde4ff" stop-opacity=".9"/><stop offset="1" stop-color="#8090d0" stop-opacity="0"/></radialGradient>
<radialGradient id="fadeg" gradientUnits="userSpaceOnUse" cx="1624" cy="-353" r="1130"><stop offset="0.80" stop-color="#fff"/><stop offset="0.90" stop-color="#8a8a8a"/><stop offset="1" stop-color="#383838"/></radialGradient><mask id="fade" maskUnits="userSpaceOnUse" x="955" y="201" width="645" height="476"><rect x="955" y="201" width="645" height="476" fill="url(#fadeg)"/></mask>
<filter id="mw" x="-20%" y="-20%" width="140%" height="140%"><feGaussianBlur stdDeviation="14"/></filter>
<g id="cl"><circle r="2.2" fill="#258888"/><circle cx="-3" cy="-2" r="1.8" fill="#258888"/><circle cx="3" cy="-2" r="1.8" fill="#258888"/><circle cx="-3" cy="2.5" r="1.8" fill="#258888"/><circle cx="3" cy="2.5" r="1.8" fill="#258888"/><circle cx="0" cy="-4" r="1.6" fill="#258888"/><circle cx="0" cy="4.5" r="1.6" fill="#258888"/></g>
</defs>
<rect x="955" y="201" width="645" height="476" fill="#000"/>
<g filter="url(#mw)" opacity=".42"><path d="M1360 230 L1400 300 L1430 380 L1470 440 L1540 500 L1600 560 L1600 470 L1540 420 L1480 370 L1440 300 L1400 230Z" fill="#3a3630"/><path d="M1500 470 L1600 520 L1600 640 L1540 600Z" fill="#33302a"/></g>
<g mask="url(#fade)">
<g fill="#e8e8e8" opacity="0.4"><circle cx="1367.4" cy="212.9" r="0.7"/><circle cx="1306.5" cy="305.9" r="0.5"/><circle cx="1283.6" cy="244.3" r="0.6"/><circle cx="983.4" cy="359.8" r="0.7"/><circle cx="1450.7" cy="417.8" r="1.2"/><circle cx="1530.4" cy="404.1" r="0.9"/><circle cx="1340.7" cy="521.1" r="0.7"/><circle cx="1190.4" cy="644.7" r="1"/><circle cx="1514.2" cy="261.4" r="0.7"/><circle cx="1231.7" cy="428.2" r="1"/><circle cx="1412.7" cy="376" r="1.2"/><circle cx="1327.8" cy="257.1" r="1.4"/><circle cx="1473.6" cy="465.3" r="0.7"/><circle cx="1051.5" cy="584.5" r="0.9"/><circle cx="1179.4" cy="590" r="0.6"/><circle cx="1472.8" cy="497.6" r="0.7"/><circle cx="1473.8" cy="346.2" r="0.8"/><circle cx="1127.1" cy="470.9" r="0.7"/><circle cx="1545.9" cy="580.5" r="0.9"/><circle cx="987.5" cy="383.6" r="0.8"/><circle cx="1527.3" cy="630.9" r="0.5"/><circle cx="1354" cy="277.5" r="0.6"/><circle cx="1247.4" cy="214" r="1.4"/><circle cx="1422.4" cy="646.2" r="0.9"/><circle cx="1280.6" cy="420.4" r="0.9"/><circle cx="1388.6" cy="488" r="1.2"/><circle cx="1518" cy="606.3" r="0.9"/><circle cx="1554.2" cy="356.4" r="0.7"/></g>
<g fill="#ffd8a0" opacity="0.7"><circle cx="1335.9" cy="216.1" r="0.7"/><circle cx="1078.5" cy="552.6" r="1.2"/><circle cx="1162.9" cy="320.2" r="1.4"/><circle cx="1579.1" cy="670.6" r="0.6"/><circle cx="1512.3" cy="553.8" r="1"/><circle cx="1261.7" cy="223.2" r="0.7"/><circle cx="1018" cy="311.5" r="1.2"/><circle cx="1449.8" cy="402.6" r="1.4"/><circle cx="1290.2" cy="637.6" r="1.2"/><circle cx="1459.2" cy="254.6" r="1.2"/><circle cx="1549.2" cy="264.2" r="0.6"/><circle cx="1408.9" cy="449.2" r="0.7"/><circle cx="1225.8" cy="272.2" r="0.9"/><circle cx="1017.1" cy="555.4" r="0.8"/><circle cx="1589.9" cy="303.3" r="0.7"/><circle cx="1167.4" cy="459.1" r="0.6"/><circle cx="1053" cy="290.5" r="0.5"/><circle cx="1246.3" cy="594.7" r="0.7"/><circle cx="1334.8" cy="427.4" r="0.6"/><circle cx="1179.6" cy="529.9" r="0.9"/><circle cx="1312.5" cy="339.4" r="0.9"/><circle cx="1316.9" cy="259.9" r="0.7"/><circle cx="1485" cy="448.4" r="0.6"/><circle cx="1257.8" cy="488.2" r="0.5"/><circle cx="1585.3" cy="674.3" r="1.2"/><circle cx="1345.5" cy="650.5" r="0.7"/><circle cx="1520" cy="279.9" r="0.7"/><circle cx="1422.9" cy="244.1" r="0.7"/><circle cx="1482.3" cy="573.9" r="0.6"/><circle cx="1565.5" cy="386.4" r="1.4"/></g>
<g fill="#ffffff" opacity="0.3"><circle cx="1227.6" cy="333.3" r="0.8"/><circle cx="1491.4" cy="347.4" r="1.2"/><circle cx="1519" cy="236.9" r="1"/><circle cx="1579.8" cy="476.7" r="0.8"/><circle cx="1299.5" cy="632.7" r="1.4"/><circle cx="1239.1" cy="288.8" r="0.9"/><circle cx="1541.6" cy="344.8" r="0.6"/><circle cx="1294.9" cy="347.8" r="1.2"/><circle cx="1491.1" cy="562.2" r="1.2"/><circle cx="1294" cy="452.4" r="1.2"/><circle cx="1385.1" cy="494.5" r="0.9"/><circle cx="1392" cy="391.2" r="0.8"/><circle cx="1531.8" cy="521.9" r="1"/><circle cx="1575" cy="663.9" r="0.7"/><circle cx="1559.7" cy="241" r="0.6"/><circle cx="1353.8" cy="427" r="1.4"/><circle cx="1397.5" cy="212.3" r="0.5"/><circle cx="1339.8" cy="233.8" r="0.6"/><circle cx="1277.4" cy="527.5" r="1.4"/><circle cx="1385.2" cy="599.9" r="0.6"/><circle cx="1525" cy="311.8" r="0.7"/><circle cx="1327.7" cy="601.7" r="0.7"/><circle cx="1351" cy="251.6" r="0.7"/><circle cx="1466.9" cy="418.1" r="1.2"/><circle cx="1350" cy="571.2" r="0.9"/><circle cx="1401.9" cy="518.2" r="0.7"/><circle cx="1087.5" cy="630" r="0.8"/><circle cx="1215.9" cy="431.6" r="0.9"/><circle cx="1478.1" cy="493.2" r="0.8"/><circle cx="1459.1" cy="393.5" r="0.7"/><circle cx="1574.9" cy="496.5" r="0.6"/><circle cx="1237.9" cy="246.5" r="0.6"/><circle cx="1460" cy="417.1" r="0.7"/><circle cx="1169.9" cy="541.3" r="0.7"/><circle cx="1201.5" cy="502" r="0.5"/><circle cx="1403.4" cy="203.5" r="0.8"/><circle cx="1550.7" cy="602.3" r="0.6"/></g>
<g fill="#e8e8e8" opacity="0.3"><circle cx="1200.1" cy="371.9" r="0.7"/><circle cx="1526.1" cy="373.1" r="0.6"/><circle cx="1561.5" cy="551.8" r="0.8"/><circle cx="1379" cy="234.1" r="0.5"/><circle cx="1155.2" cy="416.1" r="0.7"/><circle cx="1592.5" cy="464.8" r="0.9"/><circle cx="1118.4" cy="559.6" r="0.8"/><circle cx="1598.8" cy="331.7" r="0.5"/><circle cx="1042.5" cy="236.2" r="0.9"/><circle cx="1366.5" cy="226" r="0.9"/><circle cx="1114.6" cy="365.8" r="0.6"/><circle cx="1337.2" cy="584.8" r="1.2"/><circle cx="1582" cy="585.8" r="0.8"/><circle cx="1408.3" cy="665.7" r="1.4"/><circle cx="1368.7" cy="495.3" r="1.2"/><circle cx="1446.1" cy="311.3" r="0.7"/><circle cx="1584.8" cy="533.4" r="0.5"/><circle cx="1532.7" cy="320" r="0.5"/><circle cx="1153.5" cy="442.2" r="0.5"/><circle cx="1175.7" cy="531.4" r="1.4"/><circle cx="1504.9" cy="230.7" r="0.5"/><circle cx="1141.1" cy="616.4" r="0.5"/><circle cx="1579" cy="515.5" r="0.8"/><circle cx="1095" cy="292.2" r="1"/><circle cx="1219.2" cy="311.8" r="1"/><circle cx="1081.4" cy="284.8" r="0.6"/><circle cx="1589" cy="615.9" r="1.2"/><circle cx="1380" cy="427.2" r="0.7"/><circle cx="1572.6" cy="587.8" r="0.8"/><circle cx="1408.3" cy="343" r="0.8"/><circle cx="1508.4" cy="652" r="0.8"/></g>
<g fill="#dfe6ff" opacity="0.3"><circle cx="1102" cy="338.7" r="0.7"/><circle cx="1421" cy="396.1" r="0.6"/><circle cx="1398" cy="426.8" r="0.6"/><circle cx="1487.3" cy="497.7" r="0.6"/><circle cx="984.2" cy="365" r="0.5"/><circle cx="1496.2" cy="236.4" r="0.5"/><circle cx="1453.2" cy="481.2" r="0.8"/><circle cx="1157.9" cy="415.7" r="0.8"/><circle cx="1501" cy="228.6" r="0.8"/><circle cx="1551.1" cy="407.2" r="0.9"/><circle cx="1369.5" cy="580.5" r="1"/><circle cx="1303.4" cy="515.4" r="0.6"/><circle cx="1323.8" cy="600.8" r="0.8"/><circle cx="1493" cy="323.8" r="0.6"/><circle cx="1317.1" cy="483.6" r="1.4"/><circle cx="1521.6" cy="245.2" r="0.6"/><circle cx="1533.3" cy="611.3" r="0.7"/><circle cx="1390.9" cy="516.8" r="1"/><circle cx="1356.9" cy="673.3" r="1.4"/><circle cx="1002" cy="473" r="0.9"/><circle cx="1430.8" cy="615.1" r="0.7"/><circle cx="1287" cy="634.2" r="0.5"/><circle cx="1244.2" cy="665.3" r="0.6"/><circle cx="1224.2" cy="637" r="0.6"/><circle cx="1093.2" cy="309.3" r="0.8"/><circle cx="1304.9" cy="586.3" r="0.5"/><circle cx="1331.7" cy="565.2" r="0.8"/><circle cx="1590.8" cy="380.8" r="1.2"/><circle cx="1060.5" cy="423.4" r="0.9"/><circle cx="1546.7" cy="445.4" r="0.8"/><circle cx="1311.8" cy="328.5" r="0.9"/><circle cx="1359.4" cy="369.7" r="1.4"/><circle cx="1569.4" cy="658.6" r="0.5"/><circle cx="1197.8" cy="487.2" r="0.5"/><circle cx="1379.2" cy="269.8" r="1"/><circle cx="1352.4" cy="400.3" r="0.9"/><circle cx="1250.3" cy="634.6" r="1.2"/><circle cx="1206.9" cy="347.8" r="0.5"/><circle cx="1597.6" cy="670.9" r="0.9"/><circle cx="1430.6" cy="407.7" r="0.9"/></g>
<g fill="#ffffff" opacity="0.85"><circle cx="1193.8" cy="300.7" r="1.4"/><circle cx="1220.2" cy="612.2" r="1.4"/><circle cx="1404.1" cy="436.3" r="1.4"/><circle cx="1593.6" cy="346.4" r="1.2"/><circle cx="1459.1" cy="327.2" r="0.8"/><circle cx="1106.4" cy="526.8" r="0.7"/><circle cx="1313.9" cy="480.2" r="0.8"/><circle cx="1021.3" cy="322.8" r="0.6"/><circle cx="1572.7" cy="415.4" r="0.8"/><circle cx="1185.3" cy="233.2" r="1.4"/><circle cx="1200.2" cy="592.1" r="1.2"/><circle cx="1570.7" cy="584" r="0.7"/><circle cx="1169.8" cy="656.5" r="0.7"/><circle cx="1327.8" cy="470.5" r="0.8"/><circle cx="1526.9" cy="413.6" r="0.7"/><circle cx="1356.9" cy="483.7" r="0.6"/><circle cx="1087.5" cy="527.4" r="0.8"/><circle cx="1004.3" cy="236.9" r="1"/><circle cx="1322.8" cy="380.3" r="1.2"/><circle cx="1136.1" cy="272.5" r="1.2"/><circle cx="1327.6" cy="569.5" r="0.6"/><circle cx="1351" cy="526.9" r="0.8"/><circle cx="1582.2" cy="335.3" r="0.9"/><circle cx="1314.9" cy="647.6" r="0.8"/><circle cx="1084.4" cy="532.5" r="0.9"/><circle cx="1529" cy="243.1" r="1.4"/><circle cx="1405.2" cy="492.6" r="0.7"/><circle cx="1298.7" cy="340.1" r="1.4"/><circle cx="1491.3" cy="451.2" r="1"/><circle cx="1447.5" cy="363.8" r="0.5"/><circle cx="1411.5" cy="375.4" r="0.9"/><circle cx="1109.6" cy="464.1" r="0.8"/><circle cx="1511.8" cy="582.5" r="0.5"/><circle cx="1549.5" cy="631.2" r="0.8"/><circle cx="1505.4" cy="616.9" r="0.6"/><circle cx="1529.1" cy="551.3" r="0.6"/><circle cx="1431.8" cy="469" r="0.8"/><circle cx="1391.9" cy="274.1" r="0.7"/><circle cx="1379.7" cy="383.2" r="0.8"/><circle cx="1382.4" cy="315.7" r="1.4"/><circle cx="1393.6" cy="271.2" r="1.4"/></g>
<g fill="#dfe6ff" opacity="0.6"><circle cx="1347.9" cy="282.5" r="0.6"/><circle cx="1440.6" cy="249.8" r="0.7"/><circle cx="1151.1" cy="392.6" r="1"/><circle cx="1276.5" cy="542.1" r="0.7"/><circle cx="1512.4" cy="608.1" r="1"/><circle cx="1292.2" cy="276.6" r="0.7"/><circle cx="1538.1" cy="293.4" r="1.2"/><circle cx="1146.8" cy="235.7" r="0.9"/><circle cx="1420.1" cy="291.4" r="1"/><circle cx="1390" cy="292.9" r="1.4"/><circle cx="1388.5" cy="616.2" r="0.5"/><circle cx="1210.8" cy="314.9" r="0.7"/><circle cx="1299.2" cy="372" r="1"/><circle cx="1210.9" cy="569.2" r="0.7"/><circle cx="1187.1" cy="329.4" r="0.6"/><circle cx="1314.9" cy="528.3" r="0.8"/><circle cx="1469.6" cy="500.8" r="1.4"/><circle cx="973.8" cy="493.3" r="1.2"/><circle cx="1424.1" cy="250.5" r="0.7"/><circle cx="1582.9" cy="263.2" r="0.6"/><circle cx="1496.9" cy="264.9" r="0.9"/><circle cx="1179.1" cy="589.2" r="0.7"/><circle cx="1211.6" cy="558.1" r="1"/><circle cx="1458.7" cy="647.9" r="1"/><circle cx="1163.6" cy="640.9" r="1.4"/><circle cx="1287.9" cy="501.2" r="0.7"/><circle cx="1574.5" cy="202.7" r="0.5"/><circle cx="1247.4" cy="215.4" r="0.8"/><circle cx="1236.7" cy="672.3" r="1.4"/><circle cx="1589.7" cy="661.5" r="0.6"/><circle cx="1401.5" cy="229.4" r="0.9"/><circle cx="1522.7" cy="257.7" r="0.8"/><circle cx="1108.8" cy="272.4" r="0.7"/><circle cx="1447.2" cy="604.2" r="0.8"/><circle cx="966.6" cy="389" r="1.4"/><circle cx="969.1" cy="280.1" r="0.9"/><circle cx="1499.6" cy="394.7" r="1"/><circle cx="1385" cy="232.8" r="0.7"/><circle cx="1568.4" cy="372.2" r="0.9"/><circle cx="1510.8" cy="548.7" r="0.8"/><circle cx="1575.6" cy="402.8" r="0.6"/><circle cx="1191.7" cy="264.5" r="0.5"/></g>
<g fill="#e8e8e8" opacity="0.6"><circle cx="1320.8" cy="542.7" r="0.9"/><circle cx="1554.1" cy="560.5" r="0.7"/><circle cx="1108.9" cy="426.4" r="0.7"/><circle cx="1328.3" cy="643.2" r="0.8"/><circle cx="1468.6" cy="470.4" r="1"/><circle cx="1271.6" cy="578.4" r="0.7"/><circle cx="1109.7" cy="463.7" r="0.8"/><circle cx="1438.1" cy="471.9" r="0.6"/><circle cx="1565.2" cy="400.5" r="0.6"/><circle cx="1424.1" cy="633.6" r="0.7"/><circle cx="1576.8" cy="230" r="0.8"/><circle cx="1374.2" cy="577.7" r="0.7"/><circle cx="1452.1" cy="203.5" r="0.6"/><circle cx="1014.6" cy="545.9" r="0.7"/><circle cx="1242.1" cy="204.8" r="0.6"/><circle cx="1520.8" cy="653.7" r="1.4"/><circle cx="1549.2" cy="628.1" r="0.8"/><circle cx="1514.5" cy="619.9" r="0.7"/><circle cx="1495.2" cy="481.3" r="0.9"/><circle cx="1325.9" cy="309.4" r="0.8"/><circle cx="1381.4" cy="398.4" r="0.6"/><circle cx="1212" cy="529.7" r="0.7"/><circle cx="1586.7" cy="336.5" r="1"/><circle cx="1371.7" cy="595.3" r="0.6"/><circle cx="986.8" cy="391" r="1"/><circle cx="1564" cy="652.8" r="0.8"/><circle cx="1350.5" cy="227" r="0.6"/><circle cx="1397.2" cy="484.9" r="0.8"/><circle cx="1287.4" cy="648.4" r="0.8"/><circle cx="1458.7" cy="574.8" r="0.5"/><circle cx="1035.1" cy="518" r="0.6"/><circle cx="1261.8" cy="524.3" r="1.4"/><circle cx="1041.8" cy="248.4" r="0.6"/><circle cx="1416.6" cy="433" r="1.4"/><circle cx="1157.1" cy="398.2" r="1"/><circle cx="1576.3" cy="619.6" r="0.8"/><circle cx="1535.6" cy="491.6" r="0.8"/><circle cx="1196.7" cy="475.9" r="0.5"/><circle cx="1493.1" cy="362.8" r="1.4"/><circle cx="1197.4" cy="506.6" r="1.2"/><circle cx="1213.1" cy="492.6" r="0.8"/><circle cx="1557.7" cy="308.1" r="0.6"/><circle cx="1502.3" cy="672.7" r="0.8"/><circle cx="1455.4" cy="672.8" r="0.6"/><circle cx="1402.5" cy="246" r="0.8"/><circle cx="1596.3" cy="318.7" r="0.7"/></g>
<g fill="#ffe0b0" opacity="0.7"><circle cx="1251" cy="327.1" r="1"/><circle cx="1587.6" cy="436.8" r="1"/><circle cx="1392.1" cy="276.2" r="0.8"/><circle cx="1505.4" cy="251.8" r="0.8"/><circle cx="1363.3" cy="462" r="1.2"/><circle cx="1227.8" cy="636.9" r="0.7"/><circle cx="1188.8" cy="338.4" r="0.9"/><circle cx="1249.8" cy="489.6" r="0.8"/><circle cx="1298.3" cy="396.8" r="0.7"/><circle cx="1468.3" cy="306" r="0.7"/><circle cx="1223.5" cy="543.9" r="0.6"/><circle cx="1382.9" cy="282.2" r="0.9"/><circle cx="999.3" cy="243.9" r="1"/><circle cx="1523.2" cy="474.5" r="0.6"/><circle cx="999.4" cy="274.8" r="0.7"/><circle cx="1438.2" cy="398.6" r="1.4"/><circle cx="1449.4" cy="425" r="0.6"/><circle cx="1407.3" cy="281.3" r="0.8"/><circle cx="1437.3" cy="641.9" r="0.7"/><circle cx="1402.9" cy="417.8" r="0.6"/><circle cx="1588.3" cy="486.5" r="1.2"/><circle cx="1585.2" cy="514.3" r="0.5"/><circle cx="1380.2" cy="412.8" r="0.8"/><circle cx="1258.6" cy="379.2" r="0.6"/></g>
<g fill="#fff4d8" opacity="0.4"><circle cx="1436.8" cy="404.9" r="0.8"/><circle cx="1374.2" cy="409.5" r="0.6"/><circle cx="1375.6" cy="458.3" r="0.6"/><circle cx="1462.9" cy="252.5" r="0.9"/><circle cx="1530.8" cy="610.6" r="0.8"/><circle cx="1516.7" cy="496" r="1.2"/><circle cx="1516.4" cy="583.8" r="0.6"/><circle cx="1454.5" cy="576.4" r="0.7"/><circle cx="1283.9" cy="632.2" r="1.4"/><circle cx="1568.5" cy="363.7" r="0.7"/><circle cx="1451.3" cy="571.4" r="0.8"/><circle cx="1178.4" cy="411.6" r="0.9"/><circle cx="1489.6" cy="630.8" r="1"/><circle cx="1555.3" cy="283.5" r="0.7"/><circle cx="1510.4" cy="491.5" r="1.2"/><circle cx="1352.4" cy="333.1" r="1"/><circle cx="1598.6" cy="570.3" r="1"/><circle cx="1476.6" cy="425.5" r="1.2"/><circle cx="1501" cy="580.6" r="0.6"/><circle cx="1096.1" cy="451.6" r="1.2"/><circle cx="1480.3" cy="381.1" r="0.7"/><circle cx="1346.7" cy="407.7" r="0.8"/><circle cx="1323.6" cy="668.8" r="0.9"/><circle cx="1514.5" cy="382.7" r="0.5"/><circle cx="1430.4" cy="312.8" r="0.7"/><circle cx="1154.5" cy="318.8" r="1.4"/><circle cx="991.1" cy="570.2" r="0.9"/><circle cx="1261.5" cy="484.8" r="0.6"/><circle cx="1390" cy="535.4" r="0.6"/><circle cx="1374" cy="288.6" r="0.9"/><circle cx="1450.5" cy="635.2" r="1.4"/><circle cx="1506.7" cy="459.7" r="0.9"/><circle cx="1283.6" cy="463.8" r="0.8"/><circle cx="1451.9" cy="314.3" r="1.4"/><circle cx="1596" cy="474.5" r="0.8"/><circle cx="1177.6" cy="371.1" r="1.4"/><circle cx="1423.7" cy="229.5" r="0.9"/><circle cx="1316.1" cy="408.6" r="0.5"/><circle cx="1505.2" cy="513.9" r="0.5"/><circle cx="1568.3" cy="355.7" r="1.2"/><circle cx="1307.9" cy="487.7" r="0.7"/><circle cx="1450.8" cy="208.7" r="0.9"/><circle cx="1597.8" cy="529" r="0.8"/><circle cx="1459" cy="427.2" r="1.2"/><circle cx="1593.7" cy="308.4" r="0.6"/><circle cx="1574" cy="560.1" r="1"/><circle cx="1187.1" cy="665.2" r="0.7"/><circle cx="1526.1" cy="543.2" r="1"/><circle cx="1521.6" cy="232.1" r="0.6"/><circle cx="1301.8" cy="356.2" r="0.5"/><circle cx="1415.3" cy="409.4" r="0.7"/><circle cx="1354.7" cy="229.5" r="0.7"/><circle cx="1327.3" cy="411.3" r="0.6"/></g>
<g fill="#fff4d8" opacity="0.6"><circle cx="1439.3" cy="566.9" r="0.7"/><circle cx="1565.7" cy="279.6" r="1.2"/><circle cx="1524.1" cy="475.3" r="0.9"/><circle cx="1437.1" cy="461" r="0.7"/><circle cx="1568.7" cy="216.6" r="0.9"/><circle cx="1521.1" cy="463.4" r="0.8"/><circle cx="1181.8" cy="476.1" r="1.4"/><circle cx="1546.3" cy="348.7" r="1.4"/><circle cx="1142.9" cy="201.7" r="1.2"/><circle cx="1455.6" cy="476" r="1.2"/><circle cx="1524" cy="284.7" r="0.8"/><circle cx="1270.3" cy="628.9" r="0.5"/><circle cx="1218.3" cy="343.7" r="1"/><circle cx="1447.4" cy="433.6" r="0.9"/><circle cx="1427.6" cy="368.6" r="1"/><circle cx="1287.8" cy="463.7" r="0.8"/><circle cx="1284.5" cy="400.1" r="0.8"/><circle cx="1508.9" cy="206.8" r="0.8"/><circle cx="1160.6" cy="654" r="0.6"/><circle cx="1268.2" cy="490.9" r="0.7"/><circle cx="1497.2" cy="618.2" r="0.6"/><circle cx="1285" cy="495" r="0.6"/><circle cx="1218.9" cy="322" r="0.6"/><circle cx="1402.3" cy="273.5" r="0.8"/><circle cx="1407" cy="378.2" r="0.7"/><circle cx="1164.3" cy="280.7" r="0.6"/><circle cx="1351.2" cy="437.3" r="0.9"/><circle cx="1508.3" cy="538.9" r="0.6"/><circle cx="1593.7" cy="478.4" r="1"/><circle cx="1261.3" cy="290.6" r="0.8"/><circle cx="1208.2" cy="508.2" r="1"/><circle cx="1468.8" cy="527.2" r="0.9"/><circle cx="1580.7" cy="608" r="1"/><circle cx="1445.3" cy="515.7" r="0.9"/><circle cx="1187.6" cy="517.5" r="1"/><circle cx="1568.7" cy="613" r="0.7"/><circle cx="964.7" cy="512.3" r="0.7"/><circle cx="1434.2" cy="546.1" r="1"/></g>
<g fill="#ffe0b0" opacity="0.85"><circle cx="1124.9" cy="439.3" r="0.6"/><circle cx="1136.7" cy="301.3" r="1.4"/><circle cx="1548.9" cy="497.6" r="0.6"/><circle cx="1251.5" cy="273.8" r="1"/><circle cx="1557.6" cy="442.7" r="0.7"/><circle cx="1506.8" cy="248.3" r="1"/><circle cx="1236" cy="391.6" r="0.7"/><circle cx="1454.5" cy="524.2" r="1.4"/><circle cx="1338.8" cy="647.5" r="0.8"/><circle cx="1254.6" cy="362.9" r="0.8"/><circle cx="1286" cy="418.4" r="0.9"/><circle cx="1365.7" cy="535.6" r="0.8"/><circle cx="1182" cy="418.9" r="1.4"/><circle cx="1455.3" cy="313.8" r="1.2"/><circle cx="1249.5" cy="673.1" r="0.6"/><circle cx="1460" cy="544.1" r="0.6"/><circle cx="1413.7" cy="662" r="0.5"/><circle cx="1486.7" cy="390" r="1"/><circle cx="1432.9" cy="546.2" r="0.6"/><circle cx="1312.1" cy="304.5" r="0.7"/><circle cx="1305.3" cy="393" r="0.7"/><circle cx="1502.1" cy="371.3" r="0.7"/><circle cx="1535.6" cy="352.3" r="1.2"/><circle cx="1376.8" cy="271.7" r="1.2"/><circle cx="1323.6" cy="667.1" r="0.6"/><circle cx="1062.9" cy="607.6" r="0.7"/><circle cx="1170.2" cy="388.3" r="0.8"/><circle cx="1575" cy="345.4" r="1.4"/><circle cx="1418.4" cy="259.8" r="0.9"/><circle cx="1392.4" cy="465.3" r="1.2"/><circle cx="1256.1" cy="223" r="1.4"/><circle cx="1467.4" cy="524.5" r="0.8"/><circle cx="1145.8" cy="509.3" r="0.9"/><circle cx="1409" cy="201.6" r="0.8"/><circle cx="1580.7" cy="461" r="1.4"/><circle cx="1146.8" cy="610.1" r="0.9"/><circle cx="1227.4" cy="638.2" r="0.6"/><circle cx="1281.6" cy="368.5" r="1"/><circle cx="1241" cy="506.2" r="0.7"/><circle cx="1540.1" cy="428.3" r="0.6"/><circle cx="1549.3" cy="371.3" r="1.2"/><circle cx="1204.2" cy="427" r="0.9"/><circle cx="1480.2" cy="329.1" r="0.8"/><circle cx="1260.6" cy="650.9" r="1"/><circle cx="1561.4" cy="269.2" r="1.4"/><circle cx="1568.9" cy="573.6" r="1"/></g>
<g fill="#ffd8a0" opacity="0.4"><circle cx="1497.9" cy="442.6" r="0.8"/><circle cx="1300.9" cy="648.1" r="0.7"/><circle cx="1346.3" cy="354.4" r="1.4"/><circle cx="1386.4" cy="580.9" r="0.9"/><circle cx="1587.3" cy="317" r="0.8"/><circle cx="1468.5" cy="340.6" r="0.6"/><circle cx="1583" cy="634.5" r="0.7"/><circle cx="1446.8" cy="639.7" r="0.6"/><circle cx="1224.4" cy="255.8" r="0.8"/><circle cx="1419.1" cy="662.5" r="0.9"/><circle cx="1358.1" cy="493.5" r="1.4"/><circle cx="1519.1" cy="264.3" r="0.6"/><circle cx="1165.4" cy="416.5" r="0.7"/><circle cx="1019.6" cy="513.7" r="0.5"/><circle cx="1304.7" cy="284.6" r="0.5"/><circle cx="1156.7" cy="463.8" r="0.7"/><circle cx="1539.1" cy="606.3" r="0.6"/><circle cx="1315.6" cy="459.3" r="1.2"/><circle cx="1483.3" cy="291.4" r="1"/><circle cx="1077.2" cy="451.5" r="1.4"/><circle cx="1447.9" cy="406" r="1.2"/><circle cx="1392.3" cy="616.4" r="0.8"/><circle cx="1500.5" cy="335.4" r="1.2"/><circle cx="1298.6" cy="391.8" r="1.2"/><circle cx="1344.3" cy="576.8" r="1.2"/><circle cx="1114.9" cy="407.7" r="1.2"/><circle cx="1585.7" cy="231.8" r="0.8"/><circle cx="1312.2" cy="457.8" r="1"/><circle cx="1447.4" cy="287" r="1"/><circle cx="1454.9" cy="451" r="0.6"/><circle cx="1071.3" cy="578.2" r="0.7"/><circle cx="1288.4" cy="408.4" r="0.9"/><circle cx="1460" cy="268.8" r="0.6"/><circle cx="1490.7" cy="546.1" r="0.8"/><circle cx="1594.2" cy="413.2" r="1.2"/><circle cx="1449.4" cy="356.2" r="0.7"/><circle cx="1441" cy="299.8" r="0.6"/><circle cx="1199.5" cy="378.7" r="1.4"/></g>
<g fill="#dfe6ff" opacity="0.5"><circle cx="1570" cy="640.1" r="1.2"/><circle cx="1537.1" cy="279.4" r="0.8"/><circle cx="1557.9" cy="298.2" r="0.7"/><circle cx="1369.6" cy="265.6" r="0.5"/><circle cx="1166.1" cy="417.4" r="0.8"/><circle cx="1218.4" cy="353.8" r="0.6"/><circle cx="1221.9" cy="594.9" r="0.6"/><circle cx="1242.6" cy="542.6" r="0.9"/><circle cx="1578.5" cy="303.4" r="0.5"/><circle cx="1147" cy="338.6" r="0.9"/><circle cx="1449" cy="666.7" r="0.8"/><circle cx="1110.4" cy="496" r="0.8"/><circle cx="1432.1" cy="351.7" r="0.5"/><circle cx="1156.2" cy="417.7" r="0.9"/><circle cx="1414.7" cy="538.7" r="0.8"/><circle cx="1518.8" cy="606.7" r="1.4"/><circle cx="1400.4" cy="341.5" r="0.5"/><circle cx="1357" cy="444.1" r="1.4"/><circle cx="1363.7" cy="674.2" r="0.7"/><circle cx="1350.2" cy="324.6" r="0.7"/><circle cx="1376.2" cy="539.2" r="0.8"/><circle cx="1294.7" cy="282.2" r="0.8"/><circle cx="1475.9" cy="526.9" r="1"/><circle cx="1557.1" cy="630.6" r="0.8"/><circle cx="1306.9" cy="379.5" r="0.7"/><circle cx="1073.8" cy="600.6" r="0.5"/><circle cx="1090.4" cy="296.5" r="1"/><circle cx="1193.4" cy="378.5" r="0.8"/><circle cx="1045" cy="480.5" r="0.7"/><circle cx="1398.1" cy="601.4" r="0.8"/><circle cx="981.5" cy="286.4" r="0.9"/><circle cx="1174.3" cy="286.9" r="1"/><circle cx="1559.9" cy="506.1" r="0.5"/><circle cx="1355.6" cy="403.8" r="0.8"/><circle cx="1372.8" cy="444.4" r="0.6"/><circle cx="1392.4" cy="400.1" r="0.9"/></g>
<g fill="#ffffff" opacity="0.4"><circle cx="1334.5" cy="204.4" r="0.5"/><circle cx="1481.7" cy="420.1" r="0.7"/><circle cx="1439.5" cy="521.3" r="0.7"/><circle cx="1473.7" cy="532.3" r="1"/><circle cx="1303.4" cy="581.1" r="0.5"/><circle cx="1396.6" cy="667.9" r="0.6"/><circle cx="1242.8" cy="675.3" r="0.9"/><circle cx="1489" cy="330.1" r="0.7"/><circle cx="1377.2" cy="320.2" r="1.4"/><circle cx="1453.9" cy="559.5" r="1.4"/><circle cx="1404.5" cy="220.2" r="0.8"/><circle cx="1444.9" cy="613.8" r="1"/><circle cx="1067.1" cy="617.6" r="0.5"/><circle cx="1195.7" cy="207.7" r="1"/><circle cx="1438.9" cy="277.6" r="0.7"/><circle cx="1404.4" cy="247.5" r="0.9"/><circle cx="1360.5" cy="591.4" r="0.6"/><circle cx="1046.3" cy="536.3" r="0.7"/><circle cx="1258.9" cy="638" r="1.4"/><circle cx="1254.4" cy="499.2" r="0.5"/><circle cx="1080.2" cy="371.7" r="0.8"/><circle cx="1555.5" cy="566.8" r="0.8"/><circle cx="1493.3" cy="345.7" r="0.9"/><circle cx="1195.9" cy="643.3" r="0.8"/><circle cx="1457.8" cy="336.6" r="1.4"/><circle cx="1374.1" cy="408.4" r="1"/><circle cx="1427.5" cy="248.3" r="0.8"/><circle cx="1337.2" cy="499.1" r="0.7"/><circle cx="1546.3" cy="380.6" r="0.6"/><circle cx="1226.5" cy="545.9" r="0.7"/><circle cx="1480.5" cy="585.3" r="0.8"/><circle cx="1056.4" cy="602" r="0.6"/><circle cx="1278.6" cy="461.2" r="0.7"/><circle cx="1333.9" cy="440.2" r="0.7"/><circle cx="1449.8" cy="643.1" r="0.7"/><circle cx="1337.7" cy="662.6" r="0.8"/><circle cx="1390.1" cy="620.8" r="0.7"/><circle cx="1036.3" cy="364.8" r="1.4"/></g>
<g fill="#e8e8e8" opacity="0.5"><circle cx="1539" cy="610.2" r="0.7"/><circle cx="1575.8" cy="327.4" r="0.8"/><circle cx="1504.4" cy="606.7" r="0.8"/><circle cx="1278.7" cy="330.7" r="0.9"/><circle cx="1465" cy="207.6" r="0.9"/><circle cx="1554.3" cy="595.8" r="0.6"/><circle cx="1476.8" cy="279.8" r="0.8"/><circle cx="1276.9" cy="385.2" r="0.7"/><circle cx="1424.2" cy="536.9" r="1"/><circle cx="1370.8" cy="319.1" r="1.2"/><circle cx="1087.5" cy="489.9" r="0.8"/><circle cx="1253.9" cy="606.8" r="1.4"/><circle cx="1353.8" cy="525.1" r="0.8"/><circle cx="1474.5" cy="582.9" r="1.4"/><circle cx="1028.5" cy="562.4" r="0.8"/><circle cx="1247.1" cy="264.5" r="1"/><circle cx="1556" cy="323.7" r="0.6"/><circle cx="1552.7" cy="614.5" r="0.5"/><circle cx="1062.1" cy="489.3" r="0.6"/><circle cx="1482.6" cy="430.5" r="0.8"/><circle cx="1486" cy="648.7" r="0.8"/><circle cx="1031.4" cy="540.7" r="0.7"/><circle cx="1343.2" cy="432.7" r="1.2"/><circle cx="1384.3" cy="603" r="0.7"/><circle cx="1194" cy="292.9" r="0.5"/><circle cx="1159.5" cy="383" r="0.7"/><circle cx="1203.2" cy="470.2" r="0.8"/><circle cx="1099.2" cy="256.1" r="0.6"/><circle cx="1278.9" cy="332.3" r="0.7"/></g>
<g fill="#fff4d8" opacity="0.5"><circle cx="1460.3" cy="516.1" r="0.7"/><circle cx="1555.4" cy="582.9" r="0.7"/><circle cx="1322.6" cy="519.1" r="0.9"/><circle cx="1310" cy="368.5" r="0.7"/><circle cx="1137.5" cy="248.9" r="0.7"/><circle cx="1447.2" cy="284.4" r="0.9"/><circle cx="1371.7" cy="402.5" r="0.8"/><circle cx="1138.2" cy="238.5" r="1"/><circle cx="1473" cy="540.9" r="0.7"/><circle cx="1510.7" cy="325.3" r="1.4"/><circle cx="1461.3" cy="632.5" r="1"/><circle cx="1391.5" cy="499.3" r="0.8"/><circle cx="1504.5" cy="614.8" r="0.9"/><circle cx="1287.7" cy="311.3" r="0.5"/><circle cx="1101.5" cy="243.6" r="0.8"/><circle cx="1588.5" cy="426.1" r="0.7"/><circle cx="1501.8" cy="324.6" r="1.2"/><circle cx="1194.7" cy="595.8" r="1"/><circle cx="1267.7" cy="261.4" r="0.7"/><circle cx="1022" cy="413.3" r="0.7"/><circle cx="1409.6" cy="467.9" r="0.6"/><circle cx="1098.4" cy="608.8" r="0.7"/><circle cx="1422" cy="561.5" r="0.7"/><circle cx="1595.9" cy="574.6" r="1"/><circle cx="1046.7" cy="481.7" r="0.7"/><circle cx="1120.9" cy="255.6" r="0.6"/><circle cx="1564.8" cy="503.3" r="0.9"/><circle cx="1549.1" cy="564.2" r="1"/><circle cx="1170.3" cy="522.4" r="1.4"/><circle cx="1560.6" cy="258.5" r="0.8"/><circle cx="1373" cy="338.3" r="0.8"/><circle cx="1223.9" cy="338.2" r="0.6"/><circle cx="1344.8" cy="361.2" r="0.8"/><circle cx="1219.9" cy="635.6" r="1.4"/></g>
<g fill="#ffffff" opacity="0.7"><circle cx="1554.2" cy="646.4" r="1.2"/><circle cx="1437.5" cy="283.8" r="0.8"/><circle cx="1111.6" cy="532.9" r="1.4"/><circle cx="1568.3" cy="676.8" r="0.7"/><circle cx="1418.6" cy="562.5" r="0.5"/><circle cx="965.2" cy="327.3" r="0.8"/><circle cx="1436" cy="427.7" r="1"/><circle cx="1479.5" cy="520" r="1.4"/><circle cx="1340.4" cy="602.2" r="0.7"/><circle cx="1472.3" cy="594" r="1.4"/><circle cx="1421.5" cy="389.5" r="0.7"/><circle cx="1546.4" cy="459.1" r="0.5"/><circle cx="957.9" cy="303.2" r="0.6"/><circle cx="1223.1" cy="600.8" r="0.6"/><circle cx="1032" cy="521.5" r="0.7"/><circle cx="1155.7" cy="442.2" r="1"/><circle cx="1395" cy="426.7" r="0.6"/><circle cx="1329.3" cy="496.4" r="0.7"/><circle cx="1255.8" cy="647.2" r="0.8"/><circle cx="1215.9" cy="351.6" r="0.6"/><circle cx="1185.4" cy="520.5" r="0.7"/><circle cx="1041.4" cy="439.5" r="0.8"/><circle cx="982.8" cy="474" r="1.4"/><circle cx="1030.8" cy="430.5" r="1.2"/><circle cx="1325.8" cy="325.3" r="0.6"/><circle cx="1598.3" cy="663.2" r="1.2"/><circle cx="1433.9" cy="483.7" r="0.5"/><circle cx="1167.3" cy="397.9" r="0.7"/><circle cx="1383.7" cy="327.8" r="0.8"/><circle cx="1321.4" cy="630.1" r="0.9"/><circle cx="1497.8" cy="450" r="0.5"/><circle cx="1381.3" cy="471.6" r="0.7"/><circle cx="1281.2" cy="431.7" r="1"/><circle cx="1244.5" cy="203.5" r="0.6"/><circle cx="1451.7" cy="533.2" r="0.9"/><circle cx="1279.7" cy="536.4" r="0.5"/><circle cx="1581" cy="378.6" r="1.4"/><circle cx="1384.1" cy="576.7" r="0.7"/></g>
<g fill="#fff4d8" opacity="0.3"><circle cx="1002.3" cy="302.5" r="0.8"/><circle cx="1522.7" cy="465.6" r="0.7"/><circle cx="1566.2" cy="299.9" r="1.4"/><circle cx="1412.8" cy="348.9" r="0.8"/><circle cx="1420.4" cy="570.8" r="0.6"/><circle cx="1251.8" cy="529.3" r="0.8"/><circle cx="1416.8" cy="650.2" r="0.7"/><circle cx="1043.7" cy="501.2" r="0.6"/><circle cx="1320" cy="609.4" r="1"/><circle cx="1064.3" cy="329" r="0.6"/><circle cx="1407.6" cy="587.7" r="0.6"/><circle cx="1547.6" cy="481.9" r="0.8"/><circle cx="1431.4" cy="246.2" r="0.5"/><circle cx="1400" cy="428.6" r="0.6"/><circle cx="1577.1" cy="340" r="0.6"/><circle cx="1577" cy="341" r="1.4"/><circle cx="1146.2" cy="511.1" r="0.6"/><circle cx="1581.7" cy="569.1" r="1.4"/><circle cx="1517.6" cy="270.6" r="0.8"/><circle cx="1263.8" cy="301.3" r="0.8"/><circle cx="1437.3" cy="413.6" r="0.6"/><circle cx="1598.7" cy="421.7" r="0.8"/><circle cx="1426" cy="658.4" r="0.6"/><circle cx="1316.2" cy="666.9" r="0.7"/><circle cx="1534.5" cy="310.5" r="0.7"/><circle cx="1457.3" cy="397.1" r="0.6"/><circle cx="1389.6" cy="529.6" r="0.7"/><circle cx="1356.6" cy="508.6" r="0.8"/><circle cx="1498.4" cy="302.3" r="0.7"/><circle cx="1414.2" cy="615.1" r="1"/><circle cx="1346" cy="444" r="1.4"/></g>
<g fill="#ffe0b0" opacity="0.4"><circle cx="1041.6" cy="255.9" r="1"/><circle cx="1267.6" cy="314.9" r="0.7"/><circle cx="1358.4" cy="562.8" r="1"/><circle cx="999.3" cy="565.2" r="0.7"/><circle cx="1142.3" cy="343.8" r="1.4"/><circle cx="1369.9" cy="531" r="0.7"/><circle cx="1307.4" cy="672.1" r="1.4"/><circle cx="1202.7" cy="659.5" r="0.6"/><circle cx="1579.1" cy="306.1" r="0.9"/><circle cx="1498.6" cy="609.5" r="0.7"/><circle cx="1595.1" cy="364.1" r="0.9"/><circle cx="1023.7" cy="382.3" r="0.5"/><circle cx="1442" cy="397.7" r="0.9"/><circle cx="1571.3" cy="446.9" r="0.7"/><circle cx="1597.2" cy="665.5" r="1.2"/><circle cx="1542" cy="552.7" r="0.8"/><circle cx="1440.7" cy="530.9" r="0.7"/><circle cx="1076.5" cy="621.8" r="0.8"/><circle cx="1317.8" cy="217.5" r="0.8"/><circle cx="1457.7" cy="622.1" r="0.8"/><circle cx="1107.2" cy="402.3" r="0.6"/><circle cx="1349.7" cy="309.9" r="0.9"/><circle cx="1189" cy="236.1" r="0.6"/><circle cx="1371.1" cy="443.4" r="0.9"/><circle cx="1589.1" cy="249.5" r="1.2"/><circle cx="1362" cy="523" r="1.4"/><circle cx="1480.3" cy="289.4" r="0.6"/><circle cx="1513.2" cy="463.5" r="0.5"/></g>
<g fill="#ffe0b0" opacity="0.3"><circle cx="1311.4" cy="405.6" r="0.8"/><circle cx="1117.7" cy="240" r="1"/><circle cx="1587.6" cy="314.7" r="0.8"/><circle cx="1517.8" cy="412.2" r="0.5"/><circle cx="1473.4" cy="463.6" r="0.6"/><circle cx="1584.1" cy="263.2" r="1"/><circle cx="1559.1" cy="659" r="0.5"/><circle cx="1543" cy="499" r="0.9"/><circle cx="965.1" cy="299.6" r="0.8"/><circle cx="1453" cy="341.6" r="0.6"/><circle cx="1367.2" cy="485.2" r="1.2"/><circle cx="1590.6" cy="524.3" r="0.8"/><circle cx="1570.6" cy="567.7" r="0.6"/><circle cx="1444.2" cy="648.3" r="1.2"/><circle cx="1314" cy="262.9" r="0.7"/><circle cx="1272" cy="624.5" r="1.4"/><circle cx="1589" cy="484.6" r="0.7"/><circle cx="1190.6" cy="291.7" r="1.4"/><circle cx="1331" cy="516.8" r="0.6"/><circle cx="1533.9" cy="591.4" r="1"/><circle cx="1029.7" cy="349" r="1.2"/><circle cx="1396.2" cy="457.7" r="1.2"/><circle cx="1324.5" cy="513.4" r="1.2"/><circle cx="1459.7" cy="313.4" r="1"/><circle cx="1547.1" cy="609.6" r="0.7"/><circle cx="1478.6" cy="661.1" r="0.8"/><circle cx="1092.5" cy="222.7" r="0.6"/><circle cx="1534.2" cy="440.7" r="0.5"/><circle cx="1275.1" cy="617.5" r="1.4"/><circle cx="1560.9" cy="661.4" r="0.5"/><circle cx="1518.4" cy="544.5" r="0.8"/><circle cx="1549.5" cy="257.5" r="0.6"/><circle cx="1533.5" cy="258.3" r="0.6"/><circle cx="1476.4" cy="306.3" r="0.8"/><circle cx="1263.5" cy="595.5" r="0.8"/><circle cx="1025.9" cy="462" r="1.4"/></g>
<g fill="#ffd8a0" opacity="0.6"><circle cx="1090.5" cy="319.8" r="1"/><circle cx="1462.2" cy="408.7" r="0.6"/><circle cx="1262.7" cy="649.7" r="0.8"/><circle cx="1495.2" cy="477" r="0.6"/><circle cx="1280.4" cy="283.1" r="0.9"/><circle cx="1504" cy="336.7" r="0.7"/><circle cx="1213.9" cy="220.2" r="0.8"/><circle cx="1248.5" cy="671.7" r="1"/><circle cx="965.1" cy="299.1" r="0.5"/><circle cx="1419.4" cy="341.5" r="0.7"/><circle cx="1359.9" cy="379.6" r="0.6"/><circle cx="1359.8" cy="437.2" r="0.5"/><circle cx="1510.1" cy="658.2" r="1.4"/><circle cx="1364.8" cy="260" r="0.8"/><circle cx="1454" cy="498.7" r="0.7"/><circle cx="1313" cy="259.7" r="1.2"/><circle cx="1292.6" cy="505.4" r="0.8"/><circle cx="1116.2" cy="323" r="1.2"/><circle cx="1591.7" cy="431.2" r="0.7"/><circle cx="1571.5" cy="247.3" r="0.8"/><circle cx="980.9" cy="523.7" r="0.5"/><circle cx="1560.1" cy="328.5" r="1.2"/><circle cx="1327.1" cy="226.2" r="0.7"/><circle cx="1536.4" cy="521.2" r="0.9"/><circle cx="1462.9" cy="498" r="0.9"/><circle cx="1096.5" cy="202.8" r="0.7"/><circle cx="1246.6" cy="312.6" r="0.8"/><circle cx="1145.3" cy="448" r="0.5"/><circle cx="1493.8" cy="517.1" r="0.5"/><circle cx="1409.1" cy="295.3" r="0.6"/><circle cx="1541.2" cy="579.5" r="0.5"/><circle cx="1397.9" cy="540.5" r="0.6"/></g>
<g fill="#dfe6ff" opacity="0.4"><circle cx="1438.4" cy="641.7" r="0.6"/><circle cx="1171.6" cy="626.1" r="0.6"/><circle cx="1367.1" cy="403" r="0.7"/><circle cx="1151.3" cy="435.5" r="1"/><circle cx="1591.3" cy="354.8" r="0.8"/><circle cx="1283.1" cy="258.8" r="0.6"/><circle cx="1375.7" cy="311.5" r="0.5"/><circle cx="1564" cy="544.1" r="1.2"/><circle cx="1404.8" cy="605.7" r="0.8"/><circle cx="1426.3" cy="249.8" r="0.7"/><circle cx="1528.2" cy="206.7" r="0.8"/><circle cx="1510.2" cy="471.5" r="1.4"/><circle cx="1406.9" cy="652" r="1.2"/><circle cx="1463.7" cy="476.2" r="0.7"/><circle cx="1577.8" cy="528" r="1.2"/><circle cx="1176.1" cy="630.1" r="0.7"/><circle cx="1293.9" cy="656.5" r="1"/><circle cx="1308.2" cy="241.5" r="0.8"/><circle cx="1183" cy="626.7" r="1.4"/><circle cx="1561.1" cy="216.5" r="1.4"/><circle cx="1573.2" cy="364.3" r="0.8"/><circle cx="1547" cy="550.5" r="0.9"/><circle cx="1396.2" cy="297.3" r="1"/><circle cx="1433.8" cy="671.4" r="0.6"/><circle cx="1514.3" cy="434.2" r="0.9"/><circle cx="1349.2" cy="530.2" r="1"/><circle cx="1531.4" cy="532" r="1.2"/><circle cx="1201.9" cy="359.3" r="0.7"/><circle cx="1486.3" cy="508.5" r="1.2"/><circle cx="1342.1" cy="674.7" r="1.4"/><circle cx="1331.4" cy="663.5" r="1.2"/><circle cx="1577.5" cy="613" r="0.7"/><circle cx="1502.3" cy="410" r="0.5"/><circle cx="1288.7" cy="234.1" r="0.8"/><circle cx="1421" cy="420.6" r="0.8"/><circle cx="1406.7" cy="539.7" r="1.2"/><circle cx="1390.8" cy="420.9" r="0.8"/><circle cx="1504.8" cy="351.4" r="0.7"/><circle cx="1009.6" cy="260.4" r="1"/><circle cx="1227.2" cy="462.7" r="1.4"/></g>
<g fill="#ffe0b0" opacity="0.5"><circle cx="1380.7" cy="390.7" r="0.6"/><circle cx="1479.8" cy="462.8" r="0.8"/><circle cx="1297.2" cy="380.1" r="0.6"/><circle cx="1306.8" cy="353.9" r="1.4"/><circle cx="1298.4" cy="538.4" r="0.5"/><circle cx="1558.1" cy="619.1" r="0.7"/><circle cx="1115" cy="325.1" r="0.7"/><circle cx="1492.5" cy="438.7" r="1.4"/><circle cx="1235.4" cy="401.4" r="0.6"/><circle cx="1570.4" cy="233.8" r="0.7"/><circle cx="1395.7" cy="283.3" r="0.6"/><circle cx="1533.6" cy="210.6" r="0.7"/><circle cx="1242.7" cy="658.2" r="1"/><circle cx="1347.8" cy="530.6" r="0.8"/><circle cx="1502.5" cy="235" r="0.7"/><circle cx="1515.4" cy="286.1" r="0.8"/><circle cx="1438.3" cy="372.4" r="0.7"/><circle cx="1316" cy="249.7" r="1"/><circle cx="1543.8" cy="387.6" r="1.4"/><circle cx="1550.1" cy="332.6" r="1.4"/><circle cx="1440.2" cy="615.7" r="0.7"/><circle cx="1329.1" cy="592.9" r="1"/><circle cx="1048.9" cy="556.2" r="1.2"/><circle cx="1279.3" cy="565.1" r="1.2"/><circle cx="1518.4" cy="264.6" r="1.2"/><circle cx="1150.9" cy="300.7" r="0.5"/><circle cx="1423.6" cy="670.8" r="0.5"/><circle cx="1323.8" cy="220.2" r="0.8"/><circle cx="1497.3" cy="631.5" r="1"/><circle cx="1440.3" cy="553.2" r="0.5"/><circle cx="1561.9" cy="517.6" r="0.5"/><circle cx="1503.8" cy="609.3" r="0.9"/></g>
<g fill="#fff4d8" opacity="0.7"><circle cx="1282.1" cy="518.4" r="0.7"/><circle cx="981" cy="215.8" r="0.5"/><circle cx="1237.6" cy="533.4" r="1.4"/><circle cx="1234" cy="634.5" r="0.6"/><circle cx="1352.1" cy="480.3" r="1.4"/><circle cx="1475" cy="634.1" r="0.6"/><circle cx="1579.8" cy="339.7" r="0.9"/><circle cx="1279" cy="385.9" r="0.8"/><circle cx="1399.3" cy="336.7" r="0.6"/><circle cx="1201" cy="592.3" r="0.6"/><circle cx="1265.7" cy="305.4" r="0.6"/><circle cx="1576.2" cy="295.7" r="1.4"/><circle cx="1179.2" cy="549.6" r="1.2"/><circle cx="1544.1" cy="412.2" r="0.9"/><circle cx="1477" cy="238.4" r="0.9"/><circle cx="1352.2" cy="332" r="0.6"/><circle cx="1585" cy="495.6" r="1"/><circle cx="1286.4" cy="565.8" r="0.6"/><circle cx="1580.3" cy="297" r="0.6"/><circle cx="1083.1" cy="398.3" r="0.8"/><circle cx="1140.8" cy="292.5" r="0.7"/><circle cx="1375.9" cy="372.5" r="0.6"/><circle cx="1151.5" cy="394.6" r="1.4"/><circle cx="1155.9" cy="544.5" r="0.6"/><circle cx="1546.4" cy="390.3" r="0.6"/><circle cx="1507.8" cy="631.9" r="0.7"/><circle cx="960.7" cy="406.1" r="1"/></g>
<g fill="#e8e8e8" opacity="0.7"><circle cx="1592.2" cy="484.4" r="0.9"/><circle cx="1269.5" cy="369.9" r="0.7"/><circle cx="1000.9" cy="312.1" r="1.4"/><circle cx="1291.2" cy="397.9" r="1"/><circle cx="1509.4" cy="664.7" r="0.8"/><circle cx="1379.2" cy="370" r="0.5"/><circle cx="955.7" cy="428" r="0.7"/><circle cx="1509.7" cy="242.3" r="0.6"/><circle cx="1481.3" cy="364.3" r="1.4"/><circle cx="1314.3" cy="201.1" r="1.2"/><circle cx="1512.8" cy="554.4" r="0.7"/><circle cx="1443.4" cy="267.8" r="1.2"/><circle cx="1278.7" cy="267.1" r="0.6"/><circle cx="1430.8" cy="217" r="0.6"/><circle cx="1137.6" cy="396.1" r="0.6"/><circle cx="1487.6" cy="529.2" r="0.6"/><circle cx="1297.9" cy="289.7" r="0.9"/><circle cx="1292.7" cy="570.2" r="0.6"/><circle cx="1300.1" cy="206.1" r="0.9"/><circle cx="968.9" cy="291" r="0.7"/><circle cx="1497.4" cy="413.3" r="0.5"/><circle cx="1054.7" cy="306.3" r="1"/><circle cx="1414.9" cy="667.2" r="1.2"/><circle cx="1461.2" cy="541.3" r="0.8"/><circle cx="1485.4" cy="573.8" r="0.8"/><circle cx="1495.8" cy="489.9" r="0.6"/><circle cx="1444.5" cy="639.6" r="0.6"/><circle cx="1568.4" cy="558.7" r="0.9"/><circle cx="1324.5" cy="261.7" r="0.8"/><circle cx="1260.4" cy="366.8" r="0.6"/><circle cx="1597" cy="532.7" r="0.8"/><circle cx="1408.2" cy="557.8" r="1.4"/><circle cx="1470.9" cy="541" r="0.8"/></g>
<g fill="#ffd8a0" opacity="0.5"><circle cx="1510.7" cy="415.2" r="1.4"/><circle cx="1402.6" cy="537.3" r="0.8"/><circle cx="1540.9" cy="594.5" r="0.6"/><circle cx="1165.7" cy="398.8" r="1"/><circle cx="1390.3" cy="425.4" r="1"/><circle cx="1535" cy="354.3" r="0.6"/><circle cx="1501.5" cy="367.7" r="0.6"/><circle cx="1452.6" cy="550.9" r="0.5"/><circle cx="1562.3" cy="274.4" r="1.2"/><circle cx="1512.4" cy="400" r="0.6"/><circle cx="1373.1" cy="543.1" r="0.8"/><circle cx="1408.8" cy="349" r="0.7"/><circle cx="991.4" cy="440.9" r="1.2"/><circle cx="1314.3" cy="444.9" r="0.6"/><circle cx="1449" cy="462.7" r="0.6"/><circle cx="1479.7" cy="584.4" r="1"/><circle cx="1487" cy="436.5" r="0.7"/><circle cx="1459.3" cy="371.9" r="0.9"/><circle cx="1427.1" cy="461.4" r="0.6"/><circle cx="1242.5" cy="326.3" r="0.7"/><circle cx="1472.5" cy="523.9" r="0.8"/><circle cx="1189.4" cy="226.8" r="0.9"/><circle cx="1279.5" cy="362.8" r="1"/><circle cx="1565.8" cy="428.1" r="0.8"/><circle cx="1327.8" cy="294.1" r="0.8"/><circle cx="1334.7" cy="293.8" r="0.6"/><circle cx="1572.7" cy="665.5" r="0.9"/><circle cx="1498.7" cy="222.5" r="0.7"/><circle cx="1267.3" cy="395" r="0.5"/></g>
<g fill="#ffffff" opacity="0.5"><circle cx="1576.6" cy="542.9" r="0.6"/><circle cx="1509.8" cy="545.7" r="1"/><circle cx="1438.1" cy="325.8" r="1.4"/><circle cx="1264.8" cy="247.2" r="1.4"/><circle cx="1252.5" cy="462.6" r="0.6"/><circle cx="1257.9" cy="417.4" r="1.4"/><circle cx="1341.6" cy="469.3" r="1.4"/><circle cx="1353.4" cy="330.5" r="0.7"/><circle cx="1486.2" cy="327.5" r="0.6"/><circle cx="1366.2" cy="206.4" r="0.7"/><circle cx="1470.7" cy="623.7" r="0.6"/><circle cx="1152.7" cy="576.7" r="0.8"/><circle cx="1185.5" cy="226.2" r="1.4"/><circle cx="1106.3" cy="349.6" r="0.6"/><circle cx="1522.3" cy="566" r="0.5"/><circle cx="1398" cy="540.5" r="1.2"/><circle cx="1548.7" cy="318.2" r="0.6"/><circle cx="1534.3" cy="654.1" r="1.4"/><circle cx="1073.1" cy="553.1" r="1"/><circle cx="1382.2" cy="354.1" r="1.2"/><circle cx="1398.5" cy="666.5" r="0.6"/><circle cx="1263.2" cy="521.3" r="0.5"/><circle cx="1038.1" cy="299.2" r="1"/><circle cx="1541.5" cy="571.4" r="0.7"/><circle cx="1338.5" cy="605.4" r="0.6"/><circle cx="1186.7" cy="615.4" r="0.7"/></g>
<g fill="#ffffff" opacity="0.6"><circle cx="1194" cy="441.8" r="0.8"/><circle cx="1487.1" cy="201.5" r="0.9"/><circle cx="1516" cy="617.1" r="1"/><circle cx="1444.9" cy="245.5" r="1"/><circle cx="1470.7" cy="456.6" r="0.7"/><circle cx="1519.3" cy="216.3" r="0.6"/><circle cx="1353" cy="509.1" r="1"/><circle cx="1382.3" cy="329.5" r="0.6"/><circle cx="1587.5" cy="555.7" r="0.8"/><circle cx="1485.3" cy="379.5" r="0.9"/><circle cx="1473.8" cy="592.9" r="1.2"/><circle cx="992.1" cy="569.2" r="0.9"/><circle cx="1561.6" cy="534.5" r="0.6"/><circle cx="1376" cy="487.7" r="1.4"/><circle cx="1586.2" cy="332.3" r="0.7"/><circle cx="1584" cy="492.3" r="1"/><circle cx="1567.9" cy="499.5" r="0.8"/><circle cx="1189.9" cy="300.8" r="1.2"/><circle cx="1592.5" cy="451" r="1.2"/><circle cx="1447.2" cy="254.2" r="0.9"/><circle cx="1409.6" cy="466.2" r="0.8"/><circle cx="1295.1" cy="509.1" r="0.9"/><circle cx="1485.7" cy="373" r="0.8"/><circle cx="1014.5" cy="403.2" r="0.7"/><circle cx="1462.5" cy="317.8" r="1.2"/><circle cx="1475.5" cy="489.9" r="0.5"/><circle cx="1567.3" cy="329.2" r="1"/><circle cx="1544.5" cy="264.7" r="1.2"/><circle cx="1402" cy="454.7" r="1"/><circle cx="1547.8" cy="411.4" r="1.4"/><circle cx="1020.7" cy="227.6" r="0.8"/><circle cx="1483.6" cy="578.7" r="0.8"/><circle cx="1137.6" cy="532.5" r="1"/></g>
<g fill="#e8e8e8" opacity="0.85"><circle cx="1419.4" cy="433.6" r="0.9"/><circle cx="1435.3" cy="536.7" r="0.8"/><circle cx="1472.2" cy="305.2" r="0.7"/><circle cx="1450" cy="525.1" r="0.6"/><circle cx="1567.1" cy="593.3" r="0.7"/><circle cx="1247.6" cy="489.2" r="0.6"/><circle cx="1441.6" cy="562.7" r="1.2"/><circle cx="1251.5" cy="454.8" r="1.4"/><circle cx="1244.3" cy="637.5" r="0.6"/><circle cx="1493.5" cy="560.9" r="0.9"/><circle cx="1345.2" cy="219.8" r="1.2"/><circle cx="1111.9" cy="532.9" r="0.6"/><circle cx="1206" cy="627.7" r="0.6"/><circle cx="1301" cy="387" r="1.4"/><circle cx="959.1" cy="396.2" r="0.8"/><circle cx="1107.7" cy="325.2" r="0.8"/><circle cx="1588.8" cy="263.2" r="0.8"/><circle cx="1063.3" cy="622.4" r="1.4"/><circle cx="1289.8" cy="528.6" r="0.8"/><circle cx="1515.4" cy="610.6" r="0.7"/><circle cx="1307" cy="658" r="1.4"/><circle cx="1508.9" cy="267.6" r="0.7"/><circle cx="1386.9" cy="394" r="0.5"/><circle cx="1220.6" cy="467.8" r="0.6"/><circle cx="1051.5" cy="440.1" r="0.5"/><circle cx="1406.1" cy="494.4" r="0.7"/><circle cx="1436.3" cy="559.2" r="0.8"/><circle cx="1377.1" cy="387.2" r="0.7"/><circle cx="1449.8" cy="294.2" r="0.9"/><circle cx="1435.9" cy="477.6" r="0.7"/><circle cx="1538.9" cy="217.6" r="0.5"/><circle cx="1157.4" cy="240.1" r="1"/><circle cx="1505.5" cy="541.4" r="0.7"/><circle cx="1368.7" cy="630.6" r="1.4"/><circle cx="1589" cy="584.4" r="1.2"/><circle cx="1084.8" cy="233.6" r="0.9"/><circle cx="1513.4" cy="262.8" r="0.8"/><circle cx="965.3" cy="214.3" r="0.7"/><circle cx="1573.6" cy="486.5" r="0.8"/><circle cx="1568.9" cy="601.6" r="0.6"/></g>
<g fill="#fff4d8" opacity="0.85"><circle cx="1032.8" cy="292.7" r="1"/><circle cx="1473.5" cy="295.2" r="0.7"/><circle cx="1595" cy="635.6" r="0.6"/><circle cx="1539.6" cy="616.7" r="1.2"/><circle cx="1339.9" cy="208.8" r="0.7"/><circle cx="1330.7" cy="473.7" r="0.8"/><circle cx="1436.7" cy="560.1" r="1.2"/><circle cx="969.6" cy="364.3" r="0.6"/><circle cx="1349.9" cy="227.2" r="1.4"/><circle cx="1590.5" cy="626.2" r="0.8"/><circle cx="1511.2" cy="286.8" r="0.8"/><circle cx="1249.1" cy="448.7" r="0.8"/><circle cx="1458.8" cy="634.2" r="0.6"/><circle cx="1382.4" cy="604.6" r="1.2"/><circle cx="1315.1" cy="507.9" r="0.9"/><circle cx="1085.2" cy="417.4" r="1.4"/><circle cx="1414.1" cy="394.3" r="0.7"/><circle cx="977" cy="495.8" r="1.2"/><circle cx="1338" cy="336.1" r="0.9"/><circle cx="1336.6" cy="599.4" r="0.8"/><circle cx="1573.1" cy="237.6" r="0.6"/><circle cx="1533.4" cy="520.7" r="0.8"/><circle cx="1403.9" cy="290.6" r="0.9"/><circle cx="1072.8" cy="566.7" r="0.8"/><circle cx="1576.4" cy="522.3" r="1"/><circle cx="1298.5" cy="531.5" r="0.8"/><circle cx="1347.5" cy="479.5" r="1.4"/><circle cx="1192.5" cy="228.5" r="0.8"/><circle cx="1475" cy="202.5" r="0.8"/><circle cx="1501.4" cy="667.4" r="0.8"/><circle cx="1474.3" cy="605.5" r="0.9"/><circle cx="1429.3" cy="226.2" r="0.8"/></g>
<g fill="#ffd8a0" opacity="0.3"><circle cx="1150" cy="538" r="0.5"/><circle cx="1220.8" cy="525.5" r="0.6"/><circle cx="1450" cy="496.9" r="1"/><circle cx="1097.9" cy="571.9" r="1.4"/><circle cx="1389.6" cy="667.4" r="1.4"/><circle cx="1502.8" cy="344.2" r="0.9"/><circle cx="1496.6" cy="636.2" r="0.8"/><circle cx="1274.2" cy="254.7" r="1.2"/><circle cx="1009.8" cy="246.5" r="0.8"/><circle cx="1515" cy="229.3" r="0.6"/><circle cx="1582.7" cy="371.4" r="0.6"/><circle cx="1539.9" cy="598.6" r="0.6"/><circle cx="1389.9" cy="626.5" r="0.8"/><circle cx="1564.5" cy="384.7" r="0.7"/><circle cx="1493.4" cy="293.5" r="1.2"/><circle cx="1479.2" cy="476.6" r="0.7"/><circle cx="1247.9" cy="570.3" r="0.6"/><circle cx="1518.4" cy="297.2" r="0.6"/><circle cx="1387.9" cy="330.8" r="0.6"/><circle cx="1509.3" cy="558.3" r="1"/><circle cx="961.8" cy="205" r="0.8"/><circle cx="1568.1" cy="504.7" r="0.6"/><circle cx="1469.7" cy="591.9" r="0.7"/><circle cx="1370.9" cy="214.5" r="0.9"/><circle cx="1396.8" cy="344.3" r="0.8"/><circle cx="982.9" cy="344.6" r="0.6"/><circle cx="1111" cy="472.4" r="1.2"/><circle cx="1531.9" cy="216.2" r="0.8"/><circle cx="1552.7" cy="409.4" r="0.6"/><circle cx="1348.2" cy="609.6" r="1"/><circle cx="1522.5" cy="448.7" r="0.7"/><circle cx="1514.2" cy="667.6" r="0.8"/><circle cx="1595.1" cy="464.1" r="0.6"/><circle cx="1290.2" cy="487.4" r="0.8"/><circle cx="1199.4" cy="659.9" r="0.7"/></g>
<g fill="#dfe6ff" opacity="0.7"><circle cx="1448.1" cy="489.6" r="0.7"/><circle cx="1028.4" cy="405.6" r="1.4"/><circle cx="967.3" cy="303.7" r="1.2"/><circle cx="1526.3" cy="351.2" r="0.8"/><circle cx="1566.8" cy="568" r="0.7"/><circle cx="1522" cy="437.7" r="0.8"/><circle cx="1464" cy="236.2" r="0.9"/><circle cx="1258.8" cy="627" r="1.4"/><circle cx="1581.1" cy="481.7" r="0.8"/><circle cx="1592.1" cy="227" r="0.6"/><circle cx="1402.8" cy="354.5" r="0.8"/><circle cx="1529.6" cy="270.9" r="0.6"/><circle cx="1479.5" cy="474.6" r="0.8"/><circle cx="1368.2" cy="643" r="1.2"/><circle cx="1302.8" cy="482.2" r="1.4"/><circle cx="1564.3" cy="658.2" r="0.7"/><circle cx="1309.7" cy="441.2" r="1"/><circle cx="1302" cy="298" r="0.7"/><circle cx="970.5" cy="498.7" r="0.7"/><circle cx="1555.4" cy="474.3" r="1.2"/><circle cx="1332.4" cy="226.9" r="0.7"/><circle cx="1462.5" cy="432.4" r="1"/><circle cx="959.3" cy="505.1" r="0.6"/><circle cx="967.7" cy="415" r="0.7"/><circle cx="1542.6" cy="275.7" r="0.9"/><circle cx="1193.4" cy="378.2" r="1"/><circle cx="1193" cy="233" r="0.7"/><circle cx="1520.9" cy="264.9" r="0.5"/><circle cx="1592.5" cy="582.5" r="0.7"/><circle cx="1369.7" cy="594" r="0.9"/><circle cx="1574" cy="668.9" r="0.9"/></g>
<g fill="#dfe6ff" opacity="0.85"><circle cx="1338" cy="339.6" r="0.7"/><circle cx="1447.9" cy="338.8" r="0.9"/><circle cx="1169.1" cy="260.3" r="0.8"/><circle cx="1532" cy="385" r="0.9"/><circle cx="1191.9" cy="580.5" r="0.6"/><circle cx="1393.2" cy="654.5" r="1.2"/><circle cx="1306.9" cy="506.5" r="0.7"/><circle cx="1256.9" cy="292.8" r="0.6"/><circle cx="1562.3" cy="520.6" r="0.8"/><circle cx="1538.9" cy="666.6" r="0.6"/><circle cx="1491.2" cy="233.9" r="0.8"/><circle cx="1044.8" cy="345.1" r="0.6"/><circle cx="1486" cy="375.6" r="0.5"/><circle cx="1020.2" cy="344.6" r="0.6"/><circle cx="1583.4" cy="411.9" r="0.7"/><circle cx="1345.2" cy="243.5" r="0.8"/><circle cx="1507.8" cy="509.2" r="0.7"/><circle cx="1450" cy="486.6" r="0.8"/><circle cx="996.3" cy="306.6" r="0.5"/><circle cx="1451.6" cy="561.6" r="0.9"/><circle cx="1597.4" cy="250.5" r="0.6"/><circle cx="1501.9" cy="364.7" r="0.5"/><circle cx="1076.3" cy="233.6" r="0.6"/><circle cx="1543.8" cy="372.5" r="0.7"/><circle cx="1574.3" cy="597.1" r="0.8"/><circle cx="1403.7" cy="321.6" r="0.6"/><circle cx="1331.5" cy="665.8" r="0.6"/><circle cx="1587.5" cy="474.1" r="1.2"/><circle cx="1518.9" cy="242.7" r="0.9"/><circle cx="1473.4" cy="338.4" r="0.8"/><circle cx="1465.3" cy="274.3" r="1.4"/><circle cx="1499.4" cy="393.4" r="0.8"/><circle cx="1172.7" cy="210.4" r="0.9"/><circle cx="1320.9" cy="207.7" r="0.9"/><circle cx="1372.5" cy="241.8" r="0.8"/><circle cx="1175.2" cy="441.4" r="0.8"/><circle cx="1289.7" cy="388.9" r="0.9"/><circle cx="1467.9" cy="298.3" r="0.8"/><circle cx="1405.1" cy="394" r="0.5"/></g>
<g fill="#ffe0b0" opacity="0.6"><circle cx="1598" cy="408.5" r="0.6"/><circle cx="1252.4" cy="321.9" r="0.5"/><circle cx="1595.3" cy="341.5" r="1.4"/><circle cx="1471.8" cy="266.9" r="1.4"/><circle cx="1501.4" cy="406.1" r="0.8"/><circle cx="1205.5" cy="322.4" r="0.6"/><circle cx="1450.1" cy="213.8" r="0.7"/><circle cx="1438.6" cy="531.7" r="0.9"/><circle cx="1427.7" cy="257.2" r="0.8"/><circle cx="1157.6" cy="258.5" r="0.7"/><circle cx="1377.1" cy="306.8" r="0.7"/><circle cx="1151.5" cy="443" r="1.4"/><circle cx="1575.8" cy="550.9" r="0.5"/><circle cx="958.1" cy="318.2" r="1.4"/><circle cx="1533.5" cy="569.8" r="1"/><circle cx="1519.3" cy="533.1" r="0.9"/><circle cx="1377.5" cy="665.4" r="0.7"/><circle cx="1313.8" cy="641.7" r="0.5"/><circle cx="1525.4" cy="569.3" r="0.6"/><circle cx="1413.1" cy="560.5" r="0.6"/><circle cx="1300" cy="313.5" r="0.5"/><circle cx="1046.5" cy="256.6" r="0.6"/><circle cx="1491.7" cy="445" r="0.8"/><circle cx="1516.4" cy="399.8" r="1.2"/><circle cx="1415.1" cy="342.9" r="0.6"/><circle cx="1557.1" cy="430.5" r="1.4"/><circle cx="1414.6" cy="451.1" r="0.9"/><circle cx="1253.4" cy="219.6" r="1.4"/><circle cx="1283.8" cy="212" r="1.2"/><circle cx="1147.4" cy="252" r="0.6"/></g>
<g fill="#ffd8a0" opacity="0.85"><circle cx="1353.6" cy="485.3" r="0.6"/><circle cx="1035.8" cy="351.9" r="0.9"/><circle cx="1166.6" cy="448.7" r="0.7"/><circle cx="1203.5" cy="339.9" r="0.6"/><circle cx="1465.7" cy="658.3" r="0.6"/><circle cx="1402.3" cy="643.1" r="0.7"/><circle cx="1409.4" cy="523.7" r="1.2"/><circle cx="1473.8" cy="395.6" r="0.8"/><circle cx="1555.3" cy="391.7" r="0.7"/><circle cx="1507.7" cy="570.4" r="0.6"/><circle cx="1368.9" cy="386" r="1.2"/><circle cx="1269.7" cy="511.5" r="1.2"/><circle cx="1246.3" cy="545" r="1.2"/><circle cx="1595.3" cy="298.7" r="0.8"/><circle cx="1057.6" cy="430.6" r="0.7"/><circle cx="1229" cy="204.5" r="0.7"/><circle cx="1237.5" cy="291.2" r="0.5"/><circle cx="1463.1" cy="221.4" r="1.4"/><circle cx="1494.2" cy="552.3" r="0.6"/><circle cx="1534.4" cy="399.9" r="0.9"/><circle cx="1190.8" cy="495.7" r="0.6"/><circle cx="1262" cy="531.5" r="1"/><circle cx="1375.2" cy="344.7" r="0.8"/><circle cx="1519.9" cy="664" r="1.4"/><circle cx="1530.8" cy="454.4" r="0.5"/><circle cx="1473.8" cy="294.1" r="0.8"/><circle cx="1334.8" cy="585" r="0.8"/></g>
<g fill="none" stroke="#8c1717" stroke-width="1.3">
<circle cx="1484.5" cy="-84.5" r="834.6"/><circle cx="1484.5" cy="8.7" r="673.2"/><circle cx="1484.5" cy="71.7" r="546.5"/><circle cx="1484.5" cy="115.8" r="441.8"/><circle cx="1484.5" cy="147.3" r="351.8"/><circle cx="1484.5" cy="169.8" r="271.7"/><circle cx="1484.5" cy="185.6" r="198.6"/><circle cx="1484.5" cy="196.1" r="130"/><circle cx="1484.5" cy="202.1" r="64.3"/>
<polyline points="790.8,496.1 808.4,479.7 825.8,464.2 843.1,449.5 860.3,435.5 877.2,422.3 894,409.7 910.7,397.7 927.1,386.3 943.4,375.5 959.5,365.2 975.4,355.4 991.2,346.1 1006.8,337.3 1022.2,328.9 1037.5,320.9 1052.6,313.3 1067.6,306 1082.4,299.1 1097.1,292.5 1111.7,286.3 1126.1,280.4 1140.4,274.7 1154.5,269.4 1168.6,264.3 1182.5,259.5 1196.4,254.9 1210.1,250.5 1223.7,246.4 1237.3,242.6 1250.8,238.9 1264.1,235.4 1277.5,232.2 1290.7,229.1 1303.9,226.2 1317,223.6 1330.1,221.1 1343.1,218.7 1356,216.6 1369,214.6 1381.9,212.8 1394.8,211.1 1407.6,209.7 1420.4,208.3"/><polyline points="916.5,607 928.9,590.5 941.3,574.7 953.6,559.4 965.9,544.7 978.2,530.6 990.5,516.9 1002.7,503.8 1014.8,491.1 1027,478.8 1039.1,467 1051.1,455.5 1063.1,444.4 1075,433.7 1086.9,423.4 1098.8,413.3 1110.6,403.6 1122.4,394.2 1134.1,385 1145.8,376.2 1157.5,367.6 1169.1,359.2 1180.7,351.1 1192.3,343.2 1203.8,335.6 1215.4,328.1 1226.9,320.9 1238.4,313.9 1249.9,307.1 1261.4,300.4 1272.9,294 1284.4,287.7 1295.9,281.6 1307.5,275.7 1319,269.9 1330.5,264.3 1342.1,258.8 1353.7,253.5 1365.4,248.3 1377,243.3 1388.7,238.4 1400.5,233.6 1412.3,229 1424.2,224.5"/><polyline points="1040.1,684.3 1048.7,668.2 1057.3,652.6 1065.9,637.5 1074.6,622.8 1083.2,608.5 1092,594.5 1100.7,581 1109.4,567.8 1118.2,554.9 1126.9,542.4 1135.7,530.1 1144.5,518.2 1153.3,506.5 1162.1,495 1170.9,483.9 1179.7,472.9 1188.6,462.2 1197.4,451.7 1206.3,441.5 1215.2,431.4 1224.1,421.5 1233.1,411.8 1242.1,402.2 1251.1,392.9 1260.1,383.7 1269.2,374.6 1278.3,365.7 1287.4,356.9 1296.6,348.3 1305.8,339.8 1315.1,331.4 1324.4,323.2 1333.8,315 1343.3,307 1352.8,299.1 1362.4,291.2 1372,283.5 1381.8,275.9 1391.6,268.3 1401.5,260.9 1411.5,253.5 1421.6,246.2 1431.8,239"/><polyline points="1159.6,736.9 1165.3,721.3 1171.1,706.1 1176.9,691.3 1182.7,676.8 1188.6,662.6 1194.5,648.7 1200.4,635.1 1206.4,621.8 1212.4,608.8 1218.4,595.9 1224.5,583.4 1230.6,571 1236.7,558.8 1242.8,546.9 1249,535.1 1255.2,523.5 1261.4,512.1 1267.7,500.9 1274,489.7 1280.4,478.8 1286.8,467.9 1293.2,457.2 1299.7,446.7 1306.2,436.2 1312.8,425.8 1319.4,415.6 1326.1,405.4 1332.8,395.3 1339.6,385.3 1346.4,375.4 1353.3,365.5 1360.3,355.8 1367.4,346 1374.5,336.3 1381.7,326.7 1389,317.1 1396.3,307.6 1403.8,298.1 1411.3,288.6 1419,279.2 1426.8,269.8 1434.6,260.4 1442.6,251"/><polyline points="1275.4,770.5 1278.8,755.4 1282.3,740.6 1285.8,726 1289.4,711.8 1292.9,697.8 1296.5,684 1300.2,670.5 1303.8,657.2 1307.5,644.2 1311.2,631.3 1315,618.6 1318.7,606.1 1322.5,593.7 1326.3,581.5 1330.2,569.4 1334.1,557.5 1338,545.7 1341.9,534 1345.9,522.5 1349.9,511 1354,499.6 1358.1,488.4 1362.2,477.2 1366.3,466 1370.5,455 1374.8,444 1379.1,433 1383.4,422.1 1387.8,411.2 1392.2,400.4 1396.7,389.6 1401.3,378.8 1405.9,368 1410.6,357.3 1415.3,346.5 1420.1,335.7 1425,325 1429.9,314.2 1435,303.4 1440.1,292.5 1445.3,281.6 1450.6,270.7 1455.9,259.8"/><polyline points="1388.4,788.8 1389.9,773.9 1391.5,759.3 1393,745 1394.6,730.9 1396.2,717.1 1397.8,703.4 1399.4,690 1401,676.7 1402.7,663.7 1404.4,650.8 1406,638.1 1407.7,625.5 1409.4,613.1 1411.2,600.8 1412.9,588.6 1414.6,576.5 1416.4,564.5 1418.2,552.7 1420,540.9 1421.8,529.2 1423.7,517.5 1425.5,506 1427.4,494.4 1429.3,483 1431.2,471.5 1433.2,460.1 1435.1,448.8 1437.1,437.4 1439.1,426.1 1441.2,414.8 1443.3,403.4 1445.4,392.1 1447.5,380.8 1449.7,369.4 1451.9,358 1454.1,346.6 1456.4,335.1 1458.7,323.6 1461.1,312 1463.5,300.4 1465.9,288.7 1468.4,276.9 1470.9,265"/><polyline points="1500.1,793.5 1499.8,778.7 1499.6,764.2 1499.3,749.9 1499.1,735.8 1498.8,722 1498.6,708.4 1498.3,695 1498,681.8 1497.8,668.8 1497.5,655.9 1497.2,643.1 1497,630.6 1496.7,618.1 1496.4,605.8 1496.1,593.6 1495.8,581.5 1495.6,569.5 1495.3,557.5 1495,545.7 1494.7,533.9 1494.4,522.2 1494.1,510.6 1493.8,499 1493.5,487.4 1493.2,475.9 1492.8,464.4 1492.5,452.9 1492.2,441.5 1491.9,430 1491.5,418.6 1491.2,407.1 1490.9,395.6 1490.5,384.1 1490.2,372.6 1489.8,361.1 1489.4,349.5 1489.1,337.8 1488.7,326.1 1488.3,314.3 1487.9,302.5 1487.5,290.5 1487.1,278.5 1486.7,266.4"/><polyline points="1612,785.1 1610,770.2 1607.9,755.5 1605.8,741.2 1603.7,727 1601.6,713.1 1599.4,699.5 1597.3,686 1595.1,672.8 1592.9,659.7 1590.7,646.8 1588.4,634.1 1586.2,621.6 1583.9,609.1 1581.6,596.8 1579.3,584.7 1577,572.6 1574.6,560.7 1572.2,548.9 1569.8,537.1 1567.4,525.5 1565,513.9 1562.5,502.4 1560,490.9 1557.5,479.5 1554.9,468.1 1552.3,456.8 1549.7,445.5 1547.1,434.3 1544.4,423 1541.7,411.8 1538.9,400.6 1536.1,389.4 1533.3,378.1 1530.4,366.9 1527.5,355.6 1524.5,344.3 1521.5,333 1518.5,321.6 1515.4,310.2 1512.2,298.7 1509,287.2 1505.7,275.6 1502.3,263.9"/><polyline points="1725.6,762.8 1721.6,747.5 1717.5,732.6 1713.4,718 1709.3,703.7 1705.1,689.6 1700.9,675.9 1696.7,662.3 1692.4,649 1688.1,635.9 1683.8,623.1 1679.4,610.4 1675,597.9 1670.6,585.6 1666.2,573.4 1661.7,561.4 1657.2,549.6 1652.6,537.9 1648.1,526.3 1643.4,514.8 1638.8,503.5 1634.1,492.2 1629.4,481 1624.6,470 1619.8,459 1615,448.1 1610,437.3 1605.1,426.5 1600.1,415.8 1595,405.1 1589.9,394.5 1584.8,383.9 1579.5,373.3 1574.2,362.8 1568.9,352.3 1563.4,341.8 1557.9,331.3 1552.3,320.8 1546.7,310.3 1540.9,299.8 1535.1,289.3 1529.1,278.8 1523.1,268.2 1516.9,257.7"/><polyline points="1842.4,724.2 1835.9,708.5 1829.4,693.2 1822.9,678.3 1816.4,663.8 1809.8,649.5 1803.1,635.6 1796.5,622 1789.8,608.7 1783.1,595.7 1776.3,582.9 1769.6,570.4 1762.8,558.1 1756,546.1 1749.1,534.2 1742.2,522.6 1735.3,511.1 1728.4,499.9 1721.4,488.8 1714.4,477.9 1707.3,467.1 1700.3,456.5 1693.1,446 1686,435.7 1678.8,425.5 1671.5,415.4 1664.2,405.4 1656.9,395.5 1649.5,385.7 1642,376.1 1634.5,366.5 1626.9,357 1619.3,347.6 1611.6,338.2 1603.8,329 1595.9,319.8 1588,310.6 1579.9,301.5 1571.8,292.5 1563.6,283.5 1555.3,274.5 1546.8,265.6 1538.3,256.7 1529.7,247.9"/><polyline points="1896,561.9 1886.4,548.8 1876.8,536 1867.1,523.6 1857.5,511.5 1847.9,499.8 1838.3,488.3 1828.6,477.1 1819,466.2 1809.4,455.5 1799.7,445.1 1790.1,434.9 1780.5,425 1770.8,415.2 1761.1,405.7 1751.5,396.4 1741.8,387.2 1732,378.3 1722.3,369.5 1712.6,360.9 1702.8,352.4 1693,344.1 1683.1,336 1673.2,328 1663.3,320.1 1653.3,312.4 1643.3,304.8 1633.3,297.3 1623.1,290 1613,282.8 1602.7,275.7 1592.4,268.6 1582,261.7 1571.6,255 1561,248.3 1550.4,241.7 1539.7,235.2"/><polyline points="1888.7,389.7 1876,380.5 1863.3,371.6 1850.7,362.9 1838.2,354.6 1825.7,346.6 1813.3,338.8 1801,331.3 1788.6,324 1776.4,317 1764.1,310.2 1751.9,303.6 1739.8,297.3 1727.6,291.1 1715.5,285.2 1703.4,279.4 1691.4,273.9 1679.3,268.5 1667.3,263.3 1655.2,258.3 1643.2,253.4 1631.1,248.7 1619,244.1 1607,239.8 1594.9,235.5 1582.8,231.5 1570.6,227.5 1558.5,223.7 1546.2,220.1"/><polyline points="1898,271.5 1882.5,265.8 1867.1,260.4 1851.9,255.4 1836.9,250.6 1822.1,246.1 1807.4,242 1792.8,238 1778.4,234.4 1764.1,230.9 1750,227.7 1735.9,224.8 1722,222 1708.2,219.5 1694.5,217.2 1680.9,215.1 1667.3,213.1 1653.9,211.4 1640.5,209.8 1627.3,208.4 1614,207.2 1600.9,206.2 1587.8,205.3 1574.7,204.6 1561.7,204 1548.8,203.6"/>
</g>
<rect x="1038" y="201" width="40" height="22" fill="#000"/><rect x="1122" y="201" width="40" height="22" fill="#000"/><rect x="1199" y="201" width="40" height="22" fill="#000"/><rect x="1271" y="201" width="40" height="22" fill="#000"/><rect x="1338" y="201" width="40" height="22" fill="#000"/><rect x="1403" y="201" width="40" height="22" fill="#000"/><rect x="955" y="201" width="22" height="73" fill="#000"/><rect x="955" y="343" width="21" height="30" fill="#000"/>
<g fill="none" stroke="#1ea39e" stroke-width="1.7" stroke-linejoin="round">
<polyline points="1176.3,198 1196.3,229.3 1235,245.3 1241.7,198"/><polyline points="1223,310.7 1211,342.7 1232.3,437.3 1239,471.7 1221.7,551.7 1229.7,565.8"/><polyline points="1259,306.7 1315,330.7"/><polyline points="955,398 983,394.7"/><polyline points="1048.3,437.3 1093.7,413.3 1147,396 1104.3,437.3 1093.7,449 1112.3,482.3 1139,484.5 1185.7,480.2 1185.7,488.2 1139,484.5"/><polyline points="1112.3,482.3 1033.7,499.7 1019,457 1048.3,437.3"/><polyline points="1019,457 955,503"/><polyline points="1033.7,499.7 975,538.3 997.7,586.3 1060.3,595.7 1132.3,569"/><polyline points="1060.3,595.7 1132.3,583"/><polyline points="1147,617 1125.7,657"/><polyline points="1176,621 1131,654"/><polyline points="1229.7,677 1239,639.7 1267,606.9 1276.3,629 1257.7,642.3 1239,639.7"/><polyline points="1257.7,642.3 1263,663.7"/><polyline points="1313.7,204 1331,208 1332,199"/><polyline points="1381.7,204 1403,210.7 1435,208 1436,199"/><polyline points="1407,285.9 1392.3,308 1357.7,349.3 1315,330.7 1324.3,285.3 1407,285.9"/><polyline points="1341.7,272 1356.3,281.3"/><polyline points="1420.3,330.7 1499,276 1523,270.7 1549.7,250.7 1561.7,198"/><polyline points="1455,360 1483,326.7 1511,292 1523,270.7"/><polyline points="1549.7,250.7 1531,302.7 1547,302.7"/><polyline points="1549.7,250.7 1563,278.7"/><polyline points="1561.7,204 1584.3,204 1588.3,265.3"/><polyline points="1589.7,204 1600,213"/><polyline points="1503,330.7 1544.3,326.7 1556.3,329.3 1579,345.3"/><polyline points="1544.3,326.7 1540.3,377.3 1523,408"/><polyline points="1540.3,377.3 1555,386.7"/><polyline points="1515,381.3 1516.3,413.3"/><polyline points="1471,412 1472,420 1500,418.5 1517,417.3 1557.7,417.3 1600,421.3"/><polyline points="1471,412 1500,418.5"/><polyline points="1585.7,397.3 1600,398.7"/><polyline points="1573.7,410.7 1585.7,397.3"/><polyline points="1428.3,386.7 1427,402.7 1421.7,413.3 1396.3,429.3 1432.3,425.3"/><polyline points="1396.3,429.3 1368.3,437.3 1353.7,445"/><polyline points="1345.7,414.7 1353.7,437.3 1356.3,469 1353.7,483.7 1359,501"/><polyline points="1353.7,445 1381.7,437"/><polyline points="1353.7,445 1332.3,461"/><polyline points="1445.7,445 1389.7,481 1353.7,483.7"/><polyline points="1457.7,462.3 1419,493 1389.7,481"/><polyline points="1453.7,527.7 1460.3,551.7"/><polyline points="1289.7,554.3 1345.7,575"/><polyline points="1373.7,554.3 1345.7,573"/><polyline points="1345.7,591.7 1364.3,631.7"/><polyline points="1600,546 1581.7,538.3 1593.7,561 1600,554"/><polyline points="1415,625 1428.3,634.3 1423,641 1403,635.7 1415,625"/><polyline points="1403,635.7 1399,647.7 1401.7,661 1401,677"/><polyline points="1275,618 1276.5,629"/>
</g>
<polyline points="1540.3,377.3 1515,381.3" fill="none" stroke="#909090" stroke-width="1.4"/>
<use href="#cl" x="1404" y="211"/><use href="#cl" x="1487" y="208"/><use href="#cl" x="1392.3" y="308"/><use href="#cl" x="1452" y="355"/><use href="#cl" x="1499" y="266"/><use href="#cl" x="1560" y="421"/><use href="#cl" x="1575" y="419"/><use href="#cl" x="1594" y="420"/><use href="#cl" x="1483" y="465"/><use href="#cl" x="1565.7" y="549"/><use href="#cl" x="1571" y="571.7"/><use href="#cl" x="1234" y="219"/>
<circle cx="1324.3" cy="285.3" r="8.5" fill="url(#sy)"/><circle cx="1315" cy="330.7" r="5" fill="url(#sg)"/><circle cx="1420.3" cy="330.7" r="5.5" fill="url(#sb)"/><circle cx="1511" cy="292" r="6.5" fill="url(#so)"/><circle cx="1540.3" cy="377.3" r="5.5" fill="url(#sb)"/><circle cx="1517.7" cy="413.3" r="6.5" fill="url(#so)"/><circle cx="1573.7" cy="410.7" r="5" fill="url(#sb)"/><circle cx="1331" cy="466.3" r="6" fill="url(#sg)"/><circle cx="1341.7" cy="490.3" r="6" fill="url(#so)"/><circle cx="1445.7" cy="445" r="5.5" fill="url(#sg)"/><circle cx="1461" cy="552" r="7.5" fill="url(#sy)"/><circle cx="1019" cy="457" r="5" fill="url(#sy)"/><circle cx="1093.7" cy="449" r="3.6" fill="url(#sg)"/><circle cx="1033.7" cy="499.7" r="3.6" fill="url(#sg)"/><circle cx="1213.7" cy="512.2" r="3.8" fill="url(#sg)"/><circle cx="1235" cy="245.3" r="3.6" fill="url(#sy)"/><circle cx="1147" cy="396" r="3.8" fill="url(#sy)"/><circle cx="1093.7" cy="413.3" r="3.2" fill="url(#sg)"/><circle cx="1223" cy="310.7" r="3" fill="url(#sg)"/><circle cx="1211" cy="342.7" r="3" fill="url(#sg)"/><circle cx="1259" cy="306.7" r="3.6" fill="url(#sg)"/><circle cx="1066" cy="368" r="3.2" fill="url(#sg)"/><circle cx="1026" cy="280" r="3.2" fill="url(#sy)"/><circle cx="1094.7" cy="269.3" r="3.2" fill="url(#sy)"/><circle cx="983" cy="394.7" r="3" fill="url(#sy)"/><circle cx="1407" cy="285.9" r="3" fill="url(#sy)"/><circle cx="1341.7" cy="272" r="3" fill="url(#sg)"/><circle cx="1357.7" cy="349.3" r="3" fill="url(#sg)"/><circle cx="1549.7" cy="250.7" r="3" fill="url(#sg)"/><circle cx="1531" cy="302.7" r="2.4" fill="url(#sg)"/><circle cx="1547" cy="302.7" r="2.4" fill="url(#sg)"/><circle cx="1563" cy="278.7" r="2.4" fill="url(#sg)"/><circle cx="1588.3" cy="265.3" r="3" fill="url(#sg)"/><circle cx="1503" cy="330.7" r="2.6" fill="url(#sg)"/><circle cx="1544.3" cy="326.7" r="3" fill="url(#sg)"/><circle cx="1556.3" cy="329.3" r="3" fill="url(#sy)"/><circle cx="1579" cy="345.3" r="3" fill="url(#sg)"/><circle cx="1515" cy="381.3" r="3" fill="url(#sg)"/><circle cx="1457.7" cy="462.3" r="3.6" fill="url(#sy)"/><circle cx="1419" cy="493" r="3.4" fill="url(#sg)"/><circle cx="1389.7" cy="481" r="3" fill="url(#sg)"/><circle cx="1353.7" cy="483.7" r="3" fill="url(#sg)"/><circle cx="1359" cy="501" r="3" fill="url(#sy)"/><circle cx="1356.3" cy="469" r="2.6" fill="url(#sy)"/><circle cx="1353.7" cy="445" r="2.6" fill="url(#sg)"/><circle cx="1453.7" cy="527.7" r="3.2" fill="url(#sy)"/><circle cx="1185.7" cy="480.2" r="3.2" fill="url(#sg)"/><circle cx="1185.7" cy="488.2" r="3" fill="url(#sg)"/><circle cx="1139" cy="484.5" r="3.2" fill="url(#sg)"/><circle cx="1112.3" cy="482.3" r="2.6" fill="url(#sg)"/><circle cx="1132.3" cy="569" r="3" fill="url(#sg)"/><circle cx="1132.3" cy="583" r="3" fill="url(#sy)"/><circle cx="1221.7" cy="551.7" r="3.2" fill="url(#sg)"/><circle cx="1229.7" cy="565.8" r="3.6" fill="url(#so)"/><circle cx="1160.3" cy="469.5" r="3" fill="url(#sg)"/><circle cx="975" cy="538.3" r="3" fill="url(#sg)"/><circle cx="1060.3" cy="595.7" r="2.6" fill="url(#sg)"/><circle cx="1289.7" cy="554.3" r="3" fill="url(#sy)"/><circle cx="1373.7" cy="554.3" r="2.4" fill="url(#sg)"/><circle cx="1364.3" cy="631.7" r="2.6" fill="url(#sg)"/><circle cx="1581.7" cy="538.3" r="3" fill="url(#sy)"/><circle cx="1593.7" cy="561" r="2.6" fill="url(#sy)"/><circle cx="1415" cy="625" r="2.4" fill="url(#sg)"/><circle cx="1428.3" cy="634.3" r="2.4" fill="url(#sg)"/><circle cx="1423" cy="641" r="2.4" fill="url(#sg)"/><circle cx="1403" cy="635.7" r="2.8" fill="url(#sg)"/><circle cx="1399" cy="647.7" r="2.8" fill="url(#sy)"/><circle cx="1267" cy="606.9" r="2.6" fill="url(#sg)"/><circle cx="1239" cy="639.7" r="2.6" fill="url(#sg)"/><circle cx="1276.3" cy="629" r="2.6" fill="url(#sg)"/><circle cx="1257.7" cy="642.3" r="2.6" fill="url(#sg)"/><circle cx="1421.7" cy="413.3" r="3" fill="url(#sy)"/><circle cx="1396.3" cy="429.3" r="3" fill="url(#sg)"/><circle cx="1432.3" cy="425.3" r="3" fill="url(#sg)"/><circle cx="1428.3" cy="386.7" r="3" fill="url(#sy)"/><circle cx="1427" cy="402.7" r="2.6" fill="url(#sy)"/><circle cx="1345.7" cy="414.7" r="3" fill="url(#sg)"/><circle cx="1508.3" cy="531.7" r="3.6" fill="url(#sg)"/><circle cx="1568.3" cy="493" r="3" fill="url(#sg)"/><circle cx="1537.7" cy="594.3" r="3" fill="url(#sy)"/><circle cx="1460.3" cy="589" r="3" fill="url(#sy)"/><circle cx="1483" cy="613" r="3" fill="url(#sg)"/><circle cx="1476.3" cy="638.3" r="3" fill="url(#sg)"/><circle cx="1413.7" cy="586.9" r="3" fill="url(#sy)"/><circle cx="1513.7" cy="457" r="3" fill="url(#sg)"/><circle cx="1575" cy="473" r="3" fill="url(#sy)"/><circle cx="1471" cy="412" r="2.6" fill="url(#sg)"/><circle cx="1500" cy="418.5" r="2.6" fill="url(#sg)"/><circle cx="1557.7" cy="417.3" r="2.4" fill="url(#sg)"/><circle cx="1585.7" cy="397.3" r="2.6" fill="url(#sg)"/><circle cx="1196.3" cy="229.3" r="2.4" fill="url(#sg)"/><circle cx="1331" cy="208" r="2.4" fill="url(#sg)"/><circle cx="1313.7" cy="204" r="2.4" fill="url(#sg)"/><circle cx="1435" cy="208" r="2.6" fill="url(#sg)"/><circle cx="1301" cy="267" r="2.6" fill="url(#sg)"/><circle cx="1283" cy="238" r="2.6" fill="url(#sg)"/><circle cx="1365" cy="248" r="2.6" fill="url(#sy)"/><circle cx="1281" cy="250" r="2.4" fill="url(#sg)"/><circle cx="1471" cy="286" r="2.6" fill="url(#sg)"/><circle cx="1492" cy="237" r="2.6" fill="url(#sy)"/><circle cx="1517" cy="323" r="2.6" fill="url(#sy)"/><circle cx="1391" cy="385" r="2.4" fill="url(#sy)"/><circle cx="1471" cy="359" r="2.4" fill="url(#sy)"/><circle cx="1579" cy="353" r="2.4" fill="url(#sy)"/>
<circle cx="1433.7" cy="473" r="3.6" fill="#e81010"/><circle cx="1432.3" cy="433.3" r="3.6" fill="#e81010"/><circle cx="1437" cy="471" r="2.4" fill="#e81010"/><circle cx="1435" cy="431.5" r="2.4" fill="#e81010"/>
</g>
<rect x="955" y="201" width="645" height="476" fill="url(#haze)"/>
<path fill-rule="evenodd" fill="#003e00" d="M945 191 h665 v496 h-665Z M494 -353 a1130 1130 0 1 0 2260 0 a1130 1130 0 1 0 -2260 0Z"/>
<g fill="#cfcfff" style="font-family:'Liberation Sans','Noto Sans CJK TC',sans-serif;font-size:14.7px">
<text x="1145.7" y="264">鹿豹座</text><text x="1319" y="345.3">御夫座</text><text x="1491" y="267.3">金牛座</text><text x="1527" y="404">獵戶座</text><text x="1231" y="450.3">天貓座</text><text x="1047" y="504.3">大熊座</text><text x="1377.7" y="473.8">雙子座</text><text x="1445.7" y="555.6">小犬座</text><text x="1523" y="548.3">麒麟座</text><text x="1324.3" y="586.3">巨蟹座</text><text x="1153.7" y="623.1">小獅座</text>
</g>
<g fill="#e61a1a" style="font-family:'Liberation Sans',sans-serif;font-size:16.5px">
<text x="1040" y="218">+30°</text><text x="1124" y="218">+40°</text><text x="1201" y="218">+50°</text><text x="1273" y="218">+60°</text><text x="1340" y="218">+70°</text><text x="1406" y="218">+80°</text><text transform="translate(975 368) rotate(-90)">15°</text>
</g>
<text x="1058.4" y="641.3" fill="#e6e600" style="font-family:'Liberation Sans',sans-serif;font-size:16.3px">NE</text>
</svg>
<!-- ===== Time dialog ===== -->
<div id="timedlg" style="left:1241px;top:664px;width:337px;height:200px;background:linear-gradient(#f4fafe,#e4f1fb 30px,#dcecf8);border:1px solid #6f7d8a;border-radius:6px 6px 0 0;box-shadow:0 0 6px rgba(0,0,0,.55)"></div>
<div style="left:1300px;top:662px;width:262px;height:9px;background:rgba(10,14,20,.55);filter:blur(4px)"></div>
<div style="left:1256px;top:686px;width:24px;height:5px;background:#bcd8f2;filter:blur(2px)"></div>
<div class="t" style="left:1249px;top:672px;font-size:16.5px;color:#5c6b78">Time</div>
<div style="left:1550px;top:675px;width:22px;height:21px;border:1px solid #75838f;border-radius:3px;background:linear-gradient(#fdfeff,#e9f0f6)"></div>
<svg style="left:1553px;top:678px" width="16" height="15" viewBox="0 0 16 15"><path d="M2.5 1.5 L5.5 1.5 L8 4.7 L10.5 1.5 L13.5 1.5 L9.8 7.5 L13.5 13.5 L10.5 13.5 L8 10.3 L5.5 13.5 L2.5 13.5 L6.2 7.5Z" fill="#fff" stroke="#5b6a78" stroke-width="1.1"/></svg>
<div style="left:1247px;top:698px;width:325px;height:166px;background:#f0f0f0;border:1px solid #7b8894"></div>
<div style="left:1434px;top:700px;width:1px;height:160px;background:#8a8a8a"></div><div style="left:1435px;top:700px;width:1px;height:160px;background:#fff"></div>
<div style="left:1567px;top:700px;width:1px;height:160px;background:#a0a0a0"></div>
<div class="t" style="left:1257px;top:708px;font-size:14px;color:#444;">Nov</div>
<div class="t" style="left:1314px;top:708px;font-size:14px;color:#444;">17</div>
<div class="t" style="left:1366px;top:708px;font-size:14px;color:#444;">2023</div>
<div class="t" style="left:1254px;top:742px;width:30px;text-align:center;font-size:12.5px;font-weight:bold;color:#3a3a3a;letter-spacing:.3px">Su</div>
<div class="t" style="left:1279.4px;top:742px;width:30px;text-align:center;font-size:12.5px;font-weight:bold;color:#3a3a3a;letter-spacing:.3px">Mo</div>
<div class="t" style="left:1304.4px;top:742px;width:30px;text-align:center;font-size:12.5px;font-weight:bold;color:#3a3a3a;letter-spacing:.3px">Tu</div>
<div class="t" style="left:1329.4px;top:742px;width:30px;text-align:center;font-size:12.5px;font-weight:bold;color:#3a3a3a;letter-spacing:.3px">We</div>
<div class="t" style="left:1354.4px;top:742px;width:30px;text-align:center;font-size:12.5px;font-weight:bold;color:#3a3a3a;letter-spacing:.3px">Th</div>
<div class="t" style="left:1379.4px;top:742px;width:30px;text-align:center;font-size:12.5px;font-weight:bold;color:#3a3a3a;letter-spacing:.3px">Fr</div>
<div class="t" style="left:1404.4px;top:742px;width:30px;text-align:center;font-size:12.5px;font-weight:bold;color:#3a3a3a;letter-spacing:.3px">Sa</div>
<div class="t" style="left:1254px;top:755.8px;width:30px;text-align:center;font-size:14.5px;color:#9a9a9a;letter-spacing:.4px;">29</div>
<div class="t" style="left:1279.4px;top:755.8px;width:30px;text-align:center;font-size:14.5px;color:#9a9a9a;letter-spacing:.4px;">30</div>
<div class="t" style="left:1304.4px;top:755.8px;width:30px;text-align:center;font-size:14.5px;color:#9a9a9a;letter-spacing:.4px;">31</div>
<div class="t" style="left:1329.4px;top:755.8px;width:30px;text-align:center;font-size:14.5px;color:#2a2a2a;letter-spacing:.4px;text-shadow:.4px 0 0 #2a2a2a;">1</div>
<div class="t" style="left:1354.4px;top:755.8px;width:30px;text-align:center;font-size:14.5px;color:#2a2a2a;letter-spacing:.4px;text-shadow:.4px 0 0 #2a2a2a;">2</div>
<div class="t" style="left:1379.4px;top:755.8px;width:30px;text-align:center;font-size:14.5px;color:#2a2a2a;letter-spacing:.4px;text-shadow:.4px 0 0 #2a2a2a;">3</div>
<div class="t" style="left:1404.4px;top:755.8px;width:30px;text-align:center;font-size:14.5px;color:#2a2a2a;letter-spacing:.4px;text-shadow:.4px 0 0 #2a2a2a;">4</div>
<div class="t" style="left:1254px;top:772.5px;width:30px;text-align:center;font-size:14.5px;color:#2a2a2a;letter-spacing:.4px;text-shadow:.4px 0 0 #2a2a2a;">5</div>
<div class="t" style="left:1279.4px;top:772.5px;width:30px;text-align:center;font-size:14.5px;color:#2a2a2a;letter-spacing:.4px;text-shadow:.4px 0 0 #2a2a2a;">6</div>
<div class="t" style="left:1304.4px;top:772.5px;width:30px;text-align:center;font-size:14.5px;color:#2a2a2a;letter-spacing:.4px;text-shadow:.4px 0 0 #2a2a2a;">7</div>
<div class="t" style="left:1329.4px;top:772.5px;width:30px;text-align:center;font-size:14.5px;color:#2a2a2a;letter-spacing:.4px;text-shadow:.4px 0 0 #2a2a2a;">8</div>
<div class="t" style="left:1354.4px;top:772.5px;width:30px;text-align:center;font-size:14.5px;color:#2a2a2a;letter-spacing:.4px;text-shadow:.4px 0 0 #2a2a2a;">9</div>
<div class="t" style="left:1379.4px;top:772.5px;width:30px;text-align:center;font-size:14.5px;color:#2a2a2a;letter-spacing:.4px;text-shadow:.4px 0 0 #2a2a2a;">10</div>
<div class="t" style="left:1404.4px;top:772.5px;width:30px;text-align:center;font-size:14.5px;color:#2a2a2a;letter-spacing:.4px;text-shadow:.4px 0 0 #2a2a2a;">11</div>
<div class="t" style="left:1254px;top:788.9px;width:30px;text-align:center;font-size:14.5px;color:#2a2a2a;letter-spacing:.4px;text-shadow:.4px 0 0 #2a2a2a;">12</div>
<div class="t" style="left:1279.4px;top:788.9px;width:30px;text-align:center;font-size:14.5px;color:#2a2a2a;letter-spacing:.4px;text-shadow:.4px 0 0 #2a2a2a;">13</div>
<div class="t" style="left:1304.4px;top:788.9px;width:30px;text-align:center;font-size:14.5px;color:#2a2a2a;letter-spacing:.4px;text-shadow:.4px 0 0 #2a2a2a;">14</div>
<div class="t" style="left:1329.4px;top:788.9px;width:30px;text-align:center;font-size:14.5px;color:#2a2a2a;letter-spacing:.4px;text-shadow:.4px 0 0 #2a2a2a;">15</div>
<div class="t" style="left:1354.4px;top:788.9px;width:30px;text-align:center;font-size:14.5px;color:#2a2a2a;letter-spacing:.4px;text-shadow:.4px 0 0 #2a2a2a;">16</div>
<div class="t" style="left:1379.4px;top:788.9px;width:30px;text-align:center;font-size:14.5px;color:#2a2a2a;letter-spacing:.4px;text-shadow:.4px 0 0 #2a2a2a;">17</div>
<div class="t" style="left:1404.4px;top:788.9px;width:30px;text-align:center;font-size:14.5px;color:#2a2a2a;letter-spacing:.4px;text-shadow:.4px 0 0 #2a2a2a;">18</div>
<div class="t" style="left:1254px;top:805px;width:30px;text-align:center;font-size:14.5px;color:#2a2a2a;letter-spacing:.4px;text-shadow:.4px 0 0 #2a2a2a;">19</div>
<div class="t" style="left:1279.4px;top:805px;width:30px;text-align:center;font-size:14.5px;color:#2a2a2a;letter-spacing:.4px;text-shadow:.4px 0 0 #2a2a2a;">20</div>
<div class="t" style="left:1304.4px;top:805px;width:30px;text-align:center;font-size:14.5px;color:#2a2a2a;letter-spacing:.4px;text-shadow:.4px 0 0 #2a2a2a;">21</div>
<div class="t" style="left:1329.4px;top:805px;width:30px;text-align:center;font-size:14.5px;color:#2a2a2a;letter-spacing:.4px;text-shadow:.4px 0 0 #2a2a2a;">22</div>
<div class="t" style="left:1354.4px;top:805px;width:30px;text-align:center;font-size:14.5px;color:#2a2a2a;letter-spacing:.4px;text-shadow:.4px 0 0 #2a2a2a;">23</div>
<div class="t" style="left:1379.4px;top:805px;width:30px;text-align:center;font-size:14.5px;color:#2a2a2a;letter-spacing:.4px;text-shadow:.4px 0 0 #2a2a2a;">24</div>
<div class="t" style="left:1404.4px;top:805px;width:30px;text-align:center;font-size:14.5px;color:#2a2a2a;letter-spacing:.4px;text-shadow:.4px 0 0 #2a2a2a;">25</div>
<div class="t" style="left:1254px;top:821.4px;width:30px;text-align:center;font-size:14.5px;color:#2a2a2a;letter-spacing:.4px;text-shadow:.4px 0 0 #2a2a2a;">26</div>
<div class="t" style="left:1279.4px;top:821.4px;width:30px;text-align:center;font-size:14.5px;color:#2a2a2a;letter-spacing:.4px;text-shadow:.4px 0 0 #2a2a2a;">27</div>
<div class="t" style="left:1304.4px;top:821.4px;width:30px;text-align:center;font-size:14.5px;color:#2a2a2a;letter-spacing:.4px;text-shadow:.4px 0 0 #2a2a2a;">28</div>
<div class="t" style="left:1329.4px;top:821.4px;width:30px;text-align:center;font-size:14.5px;color:#2a2a2a;letter-spacing:.4px;text-shadow:.4px 0 0 #2a2a2a;">29</div>
<div class="t" style="left:1354.4px;top:821.4px;width:30px;text-align:center;font-size:14.5px;color:#2a2a2a;letter-spacing:.4px;text-shadow:.4px 0 0 #2a2a2a;">30</div>
<div class="t" style="left:1379.4px;top:821.4px;width:30px;text-align:center;font-size:14.5px;color:#9a9a9a;letter-spacing:.4px;">1</div>
<div class="t" style="left:1404.4px;top:821.4px;width:30px;text-align:center;font-size:14.5px;color:#9a9a9a;letter-spacing:.4px;">2</div>
<div class="t" style="left:1254px;top:837.4px;width:30px;text-align:center;font-size:14.5px;color:#9a9a9a;letter-spacing:.4px;">3</div>
<div class="t" style="left:1279.4px;top:837.4px;width:30px;text-align:center;font-size:14.5px;color:#9a9a9a;letter-spacing:.4px;">4</div>
<div class="t" style="left:1304.4px;top:837.4px;width:30px;text-align:center;font-size:14.5px;color:#9a9a9a;letter-spacing:.4px;">5</div>
<div class="t" style="left:1329.4px;top:837.4px;width:30px;text-align:center;font-size:14.5px;color:#9a9a9a;letter-spacing:.4px;">6</div>
<div class="t" style="left:1354.4px;top:837.4px;width:30px;text-align:center;font-size:14.5px;color:#9a9a9a;letter-spacing:.4px;">7</div>
<div class="t" style="left:1379.4px;top:837.4px;width:30px;text-align:center;font-size:14.5px;color:#9a9a9a;letter-spacing:.4px;">8</div>
<div class="t" style="left:1404.4px;top:837.4px;width:30px;text-align:center;font-size:14.5px;color:#9a9a9a;letter-spacing:.4px;">9</div>
<div style="left:1382px;top:788px;width:26px;height:17px;border:1.3px solid #222;border-radius:4px"></div>
<div class="sunken" style="left:1444px;top:707px;width:119px;height:24px;border-color:#7a7a7a #fff #fff #7a7a7a"></div>
<div class="t" style="left:1449px;top:711.5px;font-size:14.4px;color:#222;">上午 12:02:56</div>
<div class="raised" style="left:1541px;top:709px;width:20px;height:10px;box-shadow:none;border-color:#fff #999 #999 #fff"></div><div class="raised" style="left:1541px;top:719px;width:20px;height:10px;box-shadow:none;border-color:#fff #999 #999 #fff"></div>
<svg style="left:1547px;top:711px" width="8" height="16"><polygon points="4,1 7,5 1,5" fill="#333"/><polygon points="4,15 7,11 1,11" fill="#333"/></svg>
<svg style="left:1440.5px;top:731px" width="130" height="130" viewBox="-65 -65 130 130"><defs><filter id="cks"><feGaussianBlur stdDeviation="1.6"/></filter></defs><circle r="55.5" fill="#777" opacity=".55" filter="url(#cks)" cx=".8" cy="1.2"/><circle r="53.5" fill="#fff" stroke="#b4b4b4" stroke-width="2.4"/><text x="21.7" y="-33.7" text-anchor="middle" font-size="11.5" font-weight="bold" fill="#8c4a4a" font-family="Liberation Sans, sans-serif">1</text><text x="37.7" y="-17.8" text-anchor="middle" font-size="11.5" font-weight="bold" fill="#8c4a4a" font-family="Liberation Sans, sans-serif">2</text><text x="43.5" y="4.0" text-anchor="middle" font-size="11.5" font-weight="bold" fill="#8c4a4a" font-family="Liberation Sans, sans-serif">3</text><text x="37.7" y="25.7" text-anchor="middle" font-size="11.5" font-weight="bold" fill="#8c4a4a" font-family="Liberation Sans, sans-serif">4</text><text x="21.7" y="41.7" text-anchor="middle" font-size="11.5" font-weight="bold" fill="#8c4a4a" font-family="Liberation Sans, sans-serif">5</text><text x="0.0" y="47.5" text-anchor="middle" font-size="11.5" font-weight="bold" fill="#8c4a4a" font-family="Liberation Sans, sans-serif">6</text><text x="-21.8" y="41.7" text-anchor="middle" font-size="11.5" font-weight="bold" fill="#8c4a4a" font-family="Liberation Sans, sans-serif">7</text><text x="-37.7" y="25.8" text-anchor="middle" font-size="11.5" font-weight="bold" fill="#8c4a4a" font-family="Liberation Sans, sans-serif">8</text><text x="-43.5" y="4.0" text-anchor="middle" font-size="11.5" font-weight="bold" fill="#8c4a4a" font-family="Liberation Sans, sans-serif">9</text><text x="-37.7" y="-17.8" text-anchor="middle" font-size="11.5" font-weight="bold" fill="#8c4a4a" font-family="Liberation Sans, sans-serif">10</text><text x="-21.8" y="-33.7" text-anchor="middle" font-size="11.5" font-weight="bold" fill="#8c4a4a" font-family="Liberation Sans, sans-serif">11</text><text x="-0.0" y="-39.5" text-anchor="middle" font-size="11.5" font-weight="bold" fill="#8c4a4a" font-family="Liberation Sans, sans-serif">12</text><path d="M-15.5 -36.3 L0 0" stroke="#e08a8a" stroke-width="1.1"/><path d="M-1.5 12 L9.5 -49" stroke="#b03434" stroke-width="3.2" stroke-linecap="butt"/><path d="M0 12 L1.6 -27" stroke="#b03434" stroke-width="5.5"/></svg>
<!-- ===== Taskbar ===== -->
<div id="tb" style="left:0;top:854px;width:1600px;height:46px;background:linear-gradient(90deg,#142c44 0,#18334c 180px,#7f9dbb 205px,#8ba7c6 740px,#8ba8c7 905px,#4a6986 940px,#16324a 960px,#15304a 1235px,#56728f 1250px,#7390ac 1275px,#7892ae 1560px,#3a5570 1583px,#263f58 1600px);border-top:1px solid #3d5469"></div>
<div style="left:0;top:855px;width:1600px;height:1px;background:rgba(255,255,255,.35)"></div>
<div style="left:0;top:856px;width:1600px;height:44px;background:linear-gradient(rgba(255,255,255,.10),rgba(255,255,255,0) 40%,rgba(0,0,0,.10))"></div>
<div style="left:203px;top:856px;width:133px;height:44px;border:1px solid #5b7590;border-bottom:none;border-radius:3px 3px 0 0;background:linear-gradient(rgba(200,218,236,.55),rgba(165,190,214,.5) 45%,rgba(140,168,196,.45) 50%,rgba(150,178,206,.5));box-shadow:0 0 0 1px rgba(225,236,246,.55) inset"></div>
<div class="t" style="left:254px;top:867px;font-size:16px;color:#fff;text-shadow:0 0 3px rgba(20,40,70,.9)">大溪流星...</div>
<div style="left:338px;top:856px;width:131px;height:44px;border:1px solid #5b7590;border-bottom:none;border-radius:3px 3px 0 0;background:linear-gradient(rgba(200,218,236,.55),rgba(165,190,214,.5) 45%,rgba(140,168,196,.45) 50%,rgba(150,178,206,.5));box-shadow:0 0 0 1px rgba(225,236,246,.55) inset"></div>
<div class="t" style="left:388px;top:867px;font-size:16px;color:#fff;text-shadow:0 0 3px rgba(20,40,70,.9)">聲音</div>
<div style="left:472px;top:856px;width:133px;height:44px;border:1px solid #5b7590;border-bottom:none;border-radius:3px 3px 0 0;background:linear-gradient(rgba(200,218,236,.55),rgba(165,190,214,.5) 45%,rgba(140,168,196,.45) 50%,rgba(150,178,206,.5));box-shadow:0 0 0 1px rgba(225,236,246,.55) inset"></div>
<div class="t" style="left:524px;top:867px;font-size:16px;color:#fff;text-shadow:0 0 3px rgba(20,40,70,.9)">大溪天文...</div>
<div style="left:607px;top:856px;width:133px;height:44px;border:1px solid #5b7590;border-bottom:none;border-radius:3px 3px 0 0;background:linear-gradient(rgba(200,218,236,.55),rgba(165,190,214,.5) 45%,rgba(140,168,196,.45) 50%,rgba(150,178,206,.5));box-shadow:0 0 0 1px rgba(225,236,246,.55) inset"></div>
<div class="t" style="left:658px;top:867px;font-size:16px;color:#fff;text-shadow:0 0 3px rgba(20,40,70,.9)">hrofft100</div>
<svg style="left:10px;top:853px" width="48" height="48" viewBox="0 0 48 48"><defs><radialGradient id="orb" cx=".5" cy=".3" r=".75"><stop offset="0" stop-color="#9fd0f4"/><stop offset=".4" stop-color="#3a84c8"/><stop offset=".8" stop-color="#174a86"/><stop offset="1" stop-color="#0c2c58"/></radialGradient></defs>
<circle cx="24" cy="24" r="22" fill="#0b2240" opacity=".6"/><circle cx="24" cy="24" r="20.5" fill="url(#orb)" stroke="#9cc2e4" stroke-width="1.2"/>
<path d="M13 15.5 Q18 12.5 22.5 15 L21 23 Q17 20.8 11.5 23.5Z" fill="#f0562a"/><path d="M24.5 15.8 Q29.5 18.5 35.5 15.5 L34 23.5 Q28 26 23 23.5Z" fill="#8cc83c"/><path d="M11 25.5 Q16.5 22.8 20.6 25 L19 33 Q15 30.8 9.6 33.5Z" fill="#3a9ae8"/><path d="M22.6 25.6 Q27.6 28.3 33.6 25.4 L32.2 33.3 Q26 36 21 33.4Z" fill="#fac826"/>
<ellipse cx="24" cy="12" rx="15" ry="8" fill="#fff" opacity=".28"/></svg>
<svg style="left:78px;top:853px" width="50" height="48" viewBox="0 0 50 48"><defs><linearGradient id="ieg" x1="0" y1="0" x2="0" y2="1"><stop offset="0" stop-color="#7fd4fb"/><stop offset=".5" stop-color="#2d9be6"/><stop offset="1" stop-color="#1768c2"/></linearGradient></defs>
<ellipse cx="25" cy="24" rx="22" ry="9.5" fill="none" stroke="#f4c020" stroke-width="3.4" transform="rotate(-32 25 24)"/>
<path d="M25 8 C15 8 8.5 15.5 8.5 25 C8.5 35 15.5 42 25.5 42 C32.5 42 38 38.5 40.5 32 H31 C29.8 34 28 35 25.5 35 C21 35 18.3 32 18 27.5 H41.5 C42.5 16 36 8 25 8 Z M18.3 21.5 C19 17.5 21.5 15 25 15 C28.8 15 31.2 17.5 31.6 21.5 Z" fill="url(#ieg)" stroke="#e8f6ff" stroke-width="1"/>
<path d="M4 36 Q0 44 9 41" fill="none" stroke="#f4c020" stroke-width="3.2"/><path d="M37 9 Q46 3 46.5 10" fill="none" stroke="#f4c020" stroke-width="3.2"/></svg>
<svg style="left:147px;top:856px" width="42" height="42" viewBox="-21 -21 42 42"><circle r="20.5" fill="#fff" opacity=".25"/><path d="M0 0 L-17.3 -10 A20 20 0 0 1 17.3 -10Z" fill="#e53c30"/><path d="M0 0 L17.3 -10 A20 20 0 0 1 0 20Z" fill="#fbc51c"/><path d="M0 0 L0 20 A20 20 0 0 1 -17.3 -10Z" fill="#2fa24c"/><path d="M0 -9.5 H18.4 A20 20 0 0 0 -17.3 -10 L-8.2 4.7Z" fill="#e53c30"/><path d="M8.2 4.7 L-1 20 A20 20 0 0 0 18.4 -9.5 H0Z" fill="#fbc51c"/><path d="M-8.2 4.7 L-17.3 -10 A20 20 0 0 0 -1 20 L8.2 4.7Z" fill="#2fa24c"/><circle r="9.5" fill="#fff"/><circle r="7.6" fill="#3b7ded"/></svg>
<svg style="left:210px;top:858px" width="40" height="40" viewBox="0 0 66 62"><polygon points="6,20 20,15 20,43 8,45" fill="#d0d5da" stroke="#8d98a5" stroke-width="1"/><ellipse cx="38" cy="48" rx="12" ry="4.5" fill="#dfe3e6" stroke="#a9b1b8" stroke-width="1"/><rect x="34" y="36" width="8" height="11" fill="#c9ced3"/><polygon points="21,6 57,10 53,40 18,32" fill="#dfe6f2" stroke="#9fb0c8" stroke-width="1"/><polygon points="23,9 54,12.5 51,37 21,30" fill="#1a2ad0"/><polygon points="40,11 54,12.5 51,37 34,33" fill="#c8d0f8" opacity=".85"/></svg>
<svg style="left:346px;top:858px" width="38" height="40" viewBox="0 0 38 40"><ellipse cx="15" cy="20" rx="13" ry="17" fill="#cfd6dc" stroke="#8f9aa4" stroke-width="1.3"/><ellipse cx="15" cy="20" rx="8.5" ry="12" fill="#e8ecef" stroke="#a5afb8"/><ellipse cx="15" cy="20" rx="3.5" ry="5" fill="#b9c2ca"/><path d="M26 6 Q36 20 26 34 L22 30 Q28 20 22 10Z" fill="#aab4bd" stroke="#8f9aa4"/></svg>
<svg style="left:476px;top:856px" width="44" height="44" viewBox="0 0 44 44"><defs><radialGradient id="gx2" cx=".4" cy=".35" r=".7"><stop offset="0" stop-color="#6a6adc"/><stop offset=".5" stop-color="#2424a0"/><stop offset="1" stop-color="#08084a"/></radialGradient></defs><circle cx="22" cy="24" r="19" fill="#0a0a30" opacity=".5"/><circle cx="22" cy="22" r="19.5" fill="url(#gx2)"/><path d="M8 26 Q14 10 30 14 Q22 18 22 26 Q16 32 8 26Z" fill="#a8a8f0" opacity=".45"/><path d="M20 30 Q30 20 36 24 Q30 34 20 30Z" fill="#a8a8f0" opacity=".3"/></svg>
<svg style="left:612px;top:853px" width="48" height="48" viewBox="0 0 48 48"><path d="M22 8 Q22 2 26 0 Q25 4 29 6 Q33 3 32 8 Q36 10 33 16 H19 Q16 10 22 8Z" fill="#f03c14"/><path d="M24 9 Q25 5 27 5 Q27 9 30 10 Q31 14 28 16 H23 Q21 12 24 9Z" fill="#fbd228"/><rect x="17" y="16" width="18" height="4" fill="#3a3a3a"/><polygon points="20,20 32,20 30,46 22,46" fill="#b8b494" stroke="#555" stroke-width=".8"/><rect x="24" y="21" width="2.4" height="25" fill="#e8e4c0"/><polygon points="2,36 12,28 22,32 22,46 2,46" fill="#c8c8c8" stroke="#555" stroke-width=".8"/><polygon points="2,36 12,28 22,32 12,36" fill="#e4e4e4" stroke="#666" stroke-width=".6"/><rect x="10" y="38" width="7" height="8" fill="#2a8a6a" stroke="#333" stroke-width=".6"/></svg>
<div class="t" style="left:987px;top:868px;font-size:15px;color:#fff">連結</div>
<svg style="left:1092px;top:866px" width="24" height="22" viewBox="0 0 24 22"><path d="M6 6 Q10 1 14 4 T20 2" fill="none" stroke="#c8d0d8" stroke-width="1.2"/><rect x="1.5" y="7" width="21" height="13" rx="1.5" fill="#a8b0b8" stroke="#dfe5ea" stroke-width="1"/><path d="M4 10.5 H20 M4 13.5 H20 M6 16.8 H18" stroke="#f0f3f6" stroke-width="1.6" stroke-dasharray="2 1"/></svg>
<svg style="left:1119px;top:864px" width="22" height="22" viewBox="0 0 22 22"><circle cx="11" cy="11" r="10" fill="#1a3ad0" stroke="#c8d4f4" stroke-width="1.4"/><ellipse cx="11" cy="6.5" rx="7" ry="4" fill="#fff" opacity=".3"/><text x="11" y="16.5" text-anchor="middle" font-size="15" font-weight="bold" fill="#fff" font-family="Liberation Sans, sans-serif">?</text></svg>
<svg style="left:1144px;top:862px" width="12" height="26" viewBox="0 0 12 26"><rect x="3" y="3" width="6" height="4" fill="none" stroke="#e0e6ec" stroke-width="1"/><rect x="5" y="1.5" width="6" height="4" fill="none" stroke="#e0e6ec" stroke-width="1"/><polygon points="3,20 9,20 6,23.5" fill="#fff"/></svg>
<div style="left:1165px;top:869px;width:18px;height:18px;background:#10e070;border-radius:2px"></div>
<svg style="left:1165px;top:869px" width="18" height="18" viewBox="0 0 18 18"><circle cx="9" cy="4.8" r="2" fill="#111"/><circle cx="9" cy="13.2" r="2" fill="#111"/><circle cx="4.8" cy="9" r="2" fill="#111"/><circle cx="13.2" cy="9" r="2" fill="#111"/></svg>
<div style="left:1194px;top:867px;width:21px;height:21px;background:#d8141c"></div>
<svg style="left:1194px;top:867px" width="21" height="21" viewBox="0 0 21 21"><path d="M4 15 Q6 6 12 6.5 Q15 7.5 13 11 Q10 13 9.5 10 M12.5 11 Q14 15 17.5 15.5" fill="none" stroke="#fff" stroke-width="2.2" stroke-linecap="round"/></svg>
<div style="left:1225px;top:867px;width:20px;height:21px;background:#fff"></div>
<svg style="left:1225px;top:867px" width="20" height="21" viewBox="0 0 20 21"><rect x="2" y="14" width="4" height="5" fill="#222"/><rect x="7" y="10" width="4" height="9" fill="#1a6a3a"/><rect x="12" y="4" width="4" height="15" fill="#222"/><rect x="13" y="13" width="6" height="6" fill="#e01818"/></svg>
<svg style="left:1251px;top:866px" width="26" height="20" viewBox="0 0 26 20"><path d="M1 8 Q13 -2 25 8 L13 19Z" fill="#c8283c"/><path d="M4 8 Q13 1 22 8 L13 16Z" fill="#e86070" opacity=".6"/><rect x="10.5" y="5" width="5" height="8" rx="2.4" fill="#f4f4f4" stroke="#b0b0b0" stroke-width=".6"/></svg>
<svg style="left:1282px;top:866px" width="26" height="24" viewBox="0 0 26 24"><rect x="5" y="2" width="14" height="7" fill="#f4f4f4" stroke="#c0c6cc"/><rect x="1" y="8" width="22" height="10" rx="1.5" fill="#d8dde2" stroke="#aab2ba"/><rect x="5" y="14" width="14" height="6" fill="#fff" stroke="#c0c6cc"/><path d="M11 16 L15 21 L24 9" fill="none" stroke="#30b040" stroke-width="3.4"/></svg>
<svg style="left:1310px;top:866px" width="26" height="24" viewBox="0 0 26 24"><polygon points="2,13 14,7 24,9 12,16" fill="#5a6068" stroke="#2a2e34"/><polygon points="2,13 12,16 12,19 2,16" fill="#8a9098"/><polygon points="12,16 24,9 24,12 12,19" fill="#3a3e44"/><circle cx="17" cy="18" r="5" fill="#28a838" stroke="#fff" stroke-width=".8"/><path d="M14.5 18 L16.5 20.2 L19.8 15.8" fill="none" stroke="#fff" stroke-width="1.5"/></svg>
<svg style="left:1343px;top:865px" width="24" height="26" viewBox="0 0 24 26"><rect x="3" y="2" width="1.8" height="22" fill="#e8ecf0"/><path d="M5 3 Q10 0.5 13 3 T20 3 V12 Q16 14 13 12 T5 12Z" fill="#f4f6f8" stroke="#b8c0c8" stroke-width=".7"/><circle cx="16" cy="19" r="5.5" fill="#d81820" stroke="#fff" stroke-width=".8"/><path d="M13.6 16.6 L18.4 21.4 M18.4 16.6 L13.6 21.4" stroke="#fff" stroke-width="1.7"/></svg>
<svg style="left:1373px;top:867px" width="22" height="22" viewBox="0 0 22 22"><circle cx="11" cy="11" r="10" fill="#d81c28" stroke="#f8c8cc" stroke-width="1"/><circle cx="11" cy="11" r="6.5" fill="none" stroke="#fff" stroke-width="1.3"/><text x="7" y="15" font-size="10" font-weight="bold" fill="#fff" font-family="Liberation Sans, sans-serif">6</text><path d="M15 7 Q18 11 15 15" fill="none" stroke="#fff" stroke-width="1.2"/></svg>
<svg style="left:1401px;top:865px" width="24" height="24" viewBox="0 0 24 24"><rect x="1" y="2" width="22" height="18" fill="#2894e0" stroke="#e0d040" stroke-width="1.2"/><rect x="5" y="4" width="13" height="10" fill="#5cc0f4" stroke="#184c90" stroke-width="1.2"/><rect x="8" y="7" width="11" height="8" fill="#8ad4f8" stroke="#184c90" stroke-width="1.1"/><rect x="9" y="17" width="8" height="2" fill="#184c90"/></svg>
<svg style="left:1432px;top:865px" width="24" height="26" viewBox="0 0 24 26"><polygon points="3,9 7,9 13,3 13,23 7,17 3,17" fill="#f4f6f8" stroke="#9aa4ae" stroke-width=".8"/><path d="M16 8 Q20 13 16 18" fill="none" stroke="#c8d0d8" stroke-width="1.4"/><path d="M19 5 Q25 13 19 21" fill="none" stroke="#9aa8b4" stroke-width="1.1" opacity=".7"/></svg>
<svg style="left:1461px;top:866px" width="26" height="24" viewBox="0 0 26 24"><rect x="2" y="17" width="3.5" height="5" fill="#d8dce0" stroke="#8a9298" stroke-width=".6"/><rect x="7" y="13" width="3.5" height="9" fill="#d8dce0" stroke="#8a9298" stroke-width=".6"/><rect x="12" y="9" width="3.5" height="13" fill="#d8dce0" stroke="#8a9298" stroke-width=".6"/><rect x="17" y="4" width="3.5" height="18" fill="#d8dce0" stroke="#8a9298" stroke-width=".6"/><path d="M15 8 Q14 3 18 5 Q22 3 21 8 Q24 10 21 13 L20 16 H16 L15 13 Q12 10 15 8Z" fill="#f0b020" stroke="#a87008" stroke-width=".6"/></svg>
<div class="t" style="left:1504px;top:859px;font-size:15.5px;color:#fff">上午 12:02</div>
<div class="t" style="left:1500px;top:880px;font-size:15.5px;color:#fff">2023/12/17</div>
<div style="left:1587px;top:856px;width:13px;height:44px;border-left:1px solid #5b7590;background:linear-gradient(90deg,rgba(255,255,255,.25),rgba(255,255,255,.05))"></div>
</body>
</html>
